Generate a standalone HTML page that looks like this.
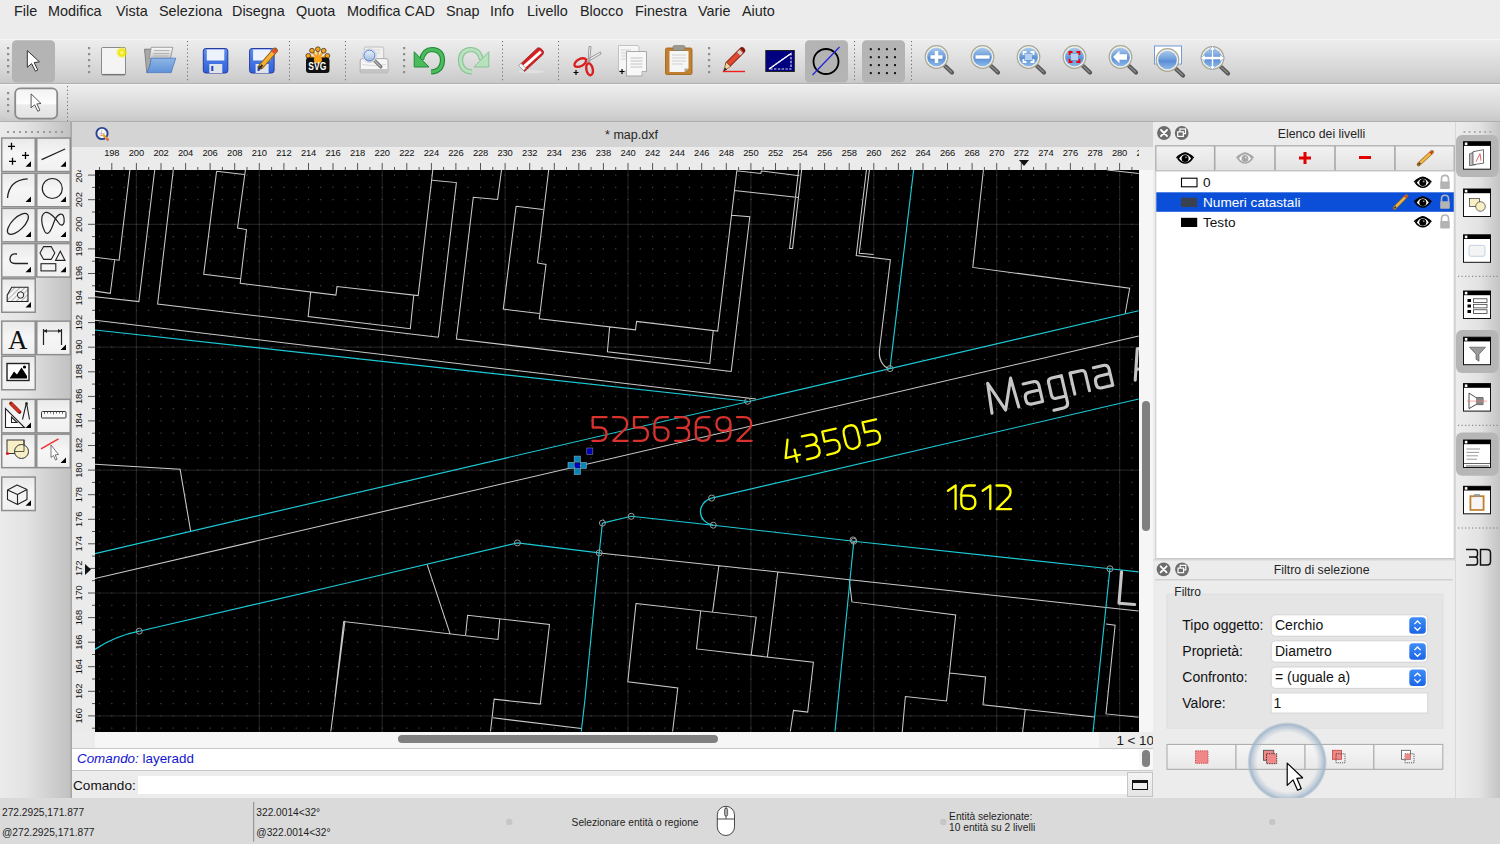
<!DOCTYPE html><html><head><meta charset="utf-8"><style>
*{margin:0;padding:0;box-sizing:border-box}
html,body{width:1500px;height:844px;overflow:hidden;background:#ececec;font-family:"Liberation Sans",sans-serif;color:#262626}
.a{position:absolute}
.menu span{position:absolute;top:3.3px;font-size:14.4px;color:#222;white-space:nowrap}
.tb{background:linear-gradient(#ededed,#e2e2e2 35%,#d2d2d2 80%,#c8c8c8)}
.sep{position:absolute;width:0;border-left:2px dotted #8a8a8a}
.tbtn{position:absolute;background:linear-gradient(#fbfbfb,#e9e9e9);border:1.5px solid #8c8c8c}
.tbtn svg{position:absolute;left:0;top:0}
.corner{position:absolute;right:3px;bottom:3px;width:0;height:0;border-left:8px solid transparent;border-bottom:8px solid #000}
.rl{position:absolute;font-size:11px;color:#1a1a1a;white-space:nowrap}
</style></head><body>
<div class="a menu" style="left:0;top:0;width:1500px;height:24px;background:#ececec">
<span style="left:14px">File</span>
<span style="left:48px">Modifica</span>
<span style="left:116px">Vista</span>
<span style="left:159px">Seleziona</span>
<span style="left:232px">Disegna</span>
<span style="left:296px">Quota</span>
<span style="left:347px">Modifica CAD</span>
<span style="left:446px">Snap</span>
<span style="left:490px">Info</span>
<span style="left:527px">Livello</span>
<span style="left:580px">Blocco</span>
<span style="left:635px">Finestra</span>
<span style="left:698px">Varie</span>
<span style="left:742px">Aiuto</span>
</div>
<div class="a tb" style="left:0;top:38.5px;width:1500px;height:45.5px;border-top:1.5px solid #f6f6f6;border-bottom:1.5px solid #b0b0b0"></div>
<div class="a tb" style="left:0;top:84px;width:1500px;height:38px;border-top:1.5px solid #f4f4f4;border-bottom:1.5px solid #b0b0b0"></div>
<svg class="a" style="left:0;top:39px" width="1500" height="45" viewBox="0 39 1500 45"><defs><linearGradient id="zg" x1="0" y1="0" x2="0" y2="1"><stop offset="0" stop-color="#a9c8ec"/><stop offset="0.45" stop-color="#6f9fdc"/><stop offset="0.55" stop-color="#5a8ed4"/><stop offset="1" stop-color="#8db8ea"/></linearGradient><linearGradient id="fl" x1="0" y1="0" x2="0" y2="1"><stop offset="0" stop-color="#5c8ff0"/><stop offset="1" stop-color="#2f5fd8"/></linearGradient><linearGradient id="pg" x1="0" y1="0" x2="0" y2="1"><stop offset="0" stop-color="#e4eefa"/><stop offset="0.5" stop-color="#c6d8ee"/><stop offset="1" stop-color="#9cb4d4"/></linearGradient><linearGradient id="fo" x1="0" y1="0" x2="0" y2="1"><stop offset="0" stop-color="#8fb6e6"/><stop offset="1" stop-color="#5f92d8"/></linearGradient><linearGradient id="pp" x1="0" y1="0" x2="0" y2="1"><stop offset="0" stop-color="#fafafa"/><stop offset="1" stop-color="#c4c4c4"/></linearGradient><radialGradient id="glow"><stop offset="0" stop-color="#fffbb0"/><stop offset="0.5" stop-color="#f2e600"/><stop offset="1" stop-color="#f2e600" stop-opacity="0"/></radialGradient></defs><rect x="7.0" y="47.0" width="2.2" height="2.2" fill="#8e8e8e"/><rect x="7.0" y="53.0" width="2.2" height="2.2" fill="#8e8e8e"/><rect x="7.0" y="59.0" width="2.2" height="2.2" fill="#8e8e8e"/><rect x="7.0" y="65.0" width="2.2" height="2.2" fill="#8e8e8e"/><rect x="7.0" y="71.0" width="2.2" height="2.2" fill="#8e8e8e"/><rect x="88.0" y="47.0" width="2.2" height="2.2" fill="#8e8e8e"/><rect x="88.0" y="53.0" width="2.2" height="2.2" fill="#8e8e8e"/><rect x="88.0" y="59.0" width="2.2" height="2.2" fill="#8e8e8e"/><rect x="88.0" y="65.0" width="2.2" height="2.2" fill="#8e8e8e"/><rect x="88.0" y="71.0" width="2.2" height="2.2" fill="#8e8e8e"/><rect x="403.0" y="47.0" width="2.2" height="2.2" fill="#8e8e8e"/><rect x="403.0" y="53.0" width="2.2" height="2.2" fill="#8e8e8e"/><rect x="403.0" y="59.0" width="2.2" height="2.2" fill="#8e8e8e"/><rect x="403.0" y="65.0" width="2.2" height="2.2" fill="#8e8e8e"/><rect x="403.0" y="71.0" width="2.2" height="2.2" fill="#8e8e8e"/><rect x="708.0" y="47.0" width="2.2" height="2.2" fill="#8e8e8e"/><rect x="708.0" y="53.0" width="2.2" height="2.2" fill="#8e8e8e"/><rect x="708.0" y="59.0" width="2.2" height="2.2" fill="#8e8e8e"/><rect x="708.0" y="65.0" width="2.2" height="2.2" fill="#8e8e8e"/><rect x="708.0" y="71.0" width="2.2" height="2.2" fill="#8e8e8e"/><path d="M187.5,41V82" stroke="#6e6e6e" stroke-width="1" stroke-dasharray="1.2,2.6"/><path d="M289.5,41V82" stroke="#6e6e6e" stroke-width="1" stroke-dasharray="1.2,2.6"/><path d="M345.5,41V82" stroke="#6e6e6e" stroke-width="1" stroke-dasharray="1.2,2.6"/><path d="M502.5,41V82" stroke="#6e6e6e" stroke-width="1" stroke-dasharray="1.2,2.6"/><path d="M558.5,41V82" stroke="#6e6e6e" stroke-width="1" stroke-dasharray="1.2,2.6"/><path d="M854.5,41V82" stroke="#6e6e6e" stroke-width="1" stroke-dasharray="1.2,2.6"/><path d="M911.5,41V82" stroke="#6e6e6e" stroke-width="1" stroke-dasharray="1.2,2.6"/><rect x="12" y="40.2" width="43" height="42.4" rx="4.5" fill="#b4b4b4"/><rect x="805" y="40.2" width="43" height="42.4" rx="4.5" fill="#b4b4b4"/><rect x="862" y="40.2" width="43" height="42.4" rx="4.5" fill="#b4b4b4"/><path d="M27.3,50.6 V67.3 L31.6,63.6 L35.4,71.2 L37.8,70 L34.2,62.6 L39.4,61.8 Z" fill="#fff" stroke="#333" stroke-width="1" stroke-linejoin="round"/><rect x="101.5" y="47.5" width="24" height="27.5" rx="1.2" fill="#f4f4f4" stroke="#8a8a8a" stroke-width="1"/><path d="M102,74.5 H125" stroke="#777" stroke-width="1.2"/><circle cx="121.8" cy="52.6" r="6" fill="url(#glow)"/><path d="M144.5,49.2 H152 V58 L147.5,72.6 H146.8 Z" fill="#a8a8a8" stroke="#707070" stroke-width="0.8"/><path d="M151.3,47.3 H172.8 L170.5,58.5 H149 Z" fill="url(#pp)" stroke="#8a8a8a" stroke-width="0.8"/><path d="M154,50.5 H169.5 M153.5,53.5 H169 M153,56 H168.5" stroke="#b4b4b4" stroke-width="1"/><path d="M151.3,58.2 H175.8 Q173,66 171.2,72.6 H147 Q150.5,66 151.3,58.2 Z" fill="url(#fo)" stroke="#4a76c0" stroke-width="0.8"/><rect x="203.3" y="48.5" width="24.5" height="24.5" rx="2.5" fill="url(#fl)" stroke="#2a3aa0" stroke-width="1"/><rect x="206.8" y="49.5" width="17.5" height="11" fill="#eef2fc"/><rect x="209.3" y="64" width="13" height="9" fill="#dfe3ea"/><rect x="211.3" y="66" width="2" height="5" fill="#1f3fc0"/><rect x="249.6" y="48.5" width="24.5" height="24.5" rx="2.5" fill="url(#fl)" stroke="#2a3aa0" stroke-width="1"/><rect x="253.1" y="49.5" width="17.5" height="11" fill="#eef2fc"/><rect x="255.6" y="64" width="13" height="9" fill="#dfe3ea"/><rect x="257.6" y="66" width="2" height="5" fill="#1f3fc0"/><path d="M261,66.5 L275,50.5" stroke="#8a5a10" stroke-width="5.6" stroke-linecap="round"/><path d="M261,66.5 L275,50.5" stroke="#f4b030" stroke-width="3.8"/><path d="M258.8,69 L262.5,65" stroke="#333" stroke-width="2.2"/><path d="M273,52.8 L276,49.5" stroke="#e25030" stroke-width="3.8"/><g stroke="#f7a21b" stroke-width="2.2"><path d="M317.9,59.5 L308.3,55.8"/><path d="M317.9,59.5 L312,50.7"/><path d="M317.9,59.5 L317.9,49.2"/><path d="M317.9,59.5 L323.7,50.7"/><path d="M317.9,59.5 L327.4,55.8"/></g><circle cx="308.3" cy="55.8" r="2.4" fill="#f7a21b" stroke="#111" stroke-width="0.6"/><circle cx="312" cy="50.7" r="2.4" fill="#f7a21b" stroke="#111" stroke-width="0.6"/><circle cx="317.9" cy="49.2" r="2.4" fill="#f7a21b" stroke="#111" stroke-width="0.6"/><circle cx="323.7" cy="50.7" r="2.4" fill="#f7a21b" stroke="#111" stroke-width="0.6"/><circle cx="327.4" cy="55.8" r="2.4" fill="#f7a21b" stroke="#111" stroke-width="0.6"/><rect x="306" y="57.5" width="23.5" height="15.5" rx="3" fill="#111"/><circle cx="317.9" cy="59.5" r="4" fill="#f7a21b"/><text x="308.3" y="70.3" font-size="11.5" font-weight="bold" font-family="Liberation Sans" fill="#fff" textLength="18" lengthAdjust="spacingAndGlyphs">SVG</text><rect x="364.3" y="47" width="19.4" height="13.5" rx="1" fill="#f0f0f0" stroke="#b4b4b4" stroke-width="0.8"/><path d="M367,50 h13 M367,53 h13" stroke="#d8d8d8" stroke-width="1"/><path d="M362,58.6 H386 Q388,58.6 388,61 V71 Q388,72.8 386,72.8 H362 Q360.2,72.8 360.2,71 V61 Q360.2,58.6 362,58.6 Z" fill="#f6f6f6" stroke="#a4a4a4" stroke-width="0.9"/><path d="M361,69 H387.5 V71 Q387.5,72.5 386,72.5 H362 Q360.8,72.5 360.8,71 Z" fill="#c4c4c4"/><path d="M362.5,64.5 Q374,67 386,64.5" stroke="#d0d0d0" stroke-width="0.8" fill="none"/><path d="M373.5,59.5 L380.8,66.8" stroke="#7a7a7a" stroke-width="3.4" stroke-linecap="round"/><path d="M374,60 L380.3,66.3" stroke="#b8b8b8" stroke-width="1.2" stroke-linecap="round"/><circle cx="369.4" cy="55.6" r="6.9" fill="#fafafa" stroke="#c8c8c8" stroke-width="0.8"/><circle cx="369.4" cy="55.6" r="5.5" fill="url(#pg)" stroke="#4a7cd0" stroke-width="1"/><path d="M421.5,59.5 Q424,49.5 432,49.5 Q442.5,50 442.5,60.5 Q442,71.5 431,72" stroke="#1e8a3a" stroke-width="5.2" fill="none" stroke-linecap="butt"/><path d="M421.5,59.5 Q424,49.5 432,49.5 Q442.5,50 442.5,60.5 Q442,71.5 431,72" stroke="#4cbb5c" stroke-width="3" fill="none"/><path d="M414.2,51.8 V67 H429 Z" fill="#4cbb5c" stroke="#1e8a3a" stroke-width="1" stroke-linejoin="round"/><path d="M481.5,59.5 Q479,49.5 471,49.5 Q460.5,50 460.5,60.5 Q461,71.5 472,72" stroke="#86c392" stroke-width="5.2" fill="none" stroke-linecap="butt"/><path d="M481.5,59.5 Q479,49.5 471,49.5 Q460.5,50 460.5,60.5 Q461,71.5 472,72" stroke="#b8e2be" stroke-width="3" fill="none"/><path d="M488.8,51.8 V67 H474 Z" fill="#b8e2be" stroke="#86c392" stroke-width="1" stroke-linejoin="round"/><ellipse cx="531" cy="71.5" rx="13" ry="1.8" fill="#e0e0e0"/><path d="M519.5,65 L537.5,48 Q540,47 542,49.5 L543.5,51.5 Q544,53 542.5,55 L524.5,71.5 Z" fill="#d42020" stroke="#902020" stroke-width="0.7"/><path d="M521.8,66.5 L540,50.5 L541.8,52.8 L523.5,69.3 Z" fill="#fff"/><path d="M518.5,65.5 L523.5,70.5 L526,68.3 L521,63.3 Z" fill="#f4f4f4" stroke="#888" stroke-width="0.7"/><path d="M588,63 L589,46.5 L591,46.5 L589.5,63 M586,60 L600.5,52 L601,54 L588,61.5" fill="#eee" stroke="#888" stroke-width="0.8"/><ellipse cx="580.3" cy="62.6" rx="6.4" ry="3.5" transform="rotate(-28 580.3 62.6)" fill="none" stroke="#d82020" stroke-width="2.4"/><ellipse cx="589.6" cy="69.3" rx="3.2" ry="6" transform="rotate(-12 589.6 69.3)" fill="none" stroke="#d82020" stroke-width="2.4"/><path d="M573.5,72.5 h5 M576,70 v5" stroke="#000" stroke-width="1.2"/><path d="M618.5,45.5 H638 L639,47 V71 H618.5 Z" fill="#f6f6f6" stroke="#b8b8b8" stroke-width="0.8"/><path d="M621,50 h10 M621,53 h10 M621,56 h10 M621,59 h10" stroke="#c8c8c8" stroke-width="0.8"/><path d="M626.5,51.5 H646.5 V71.5 L642,76 H626.5 Z" fill="#f8f8f8" stroke="#a0a0a0" stroke-width="0.9"/><path d="M630.5,58 h12 M630.5,61 h12 M630.5,64 h12 M630.5,67 h12" stroke="#bdbdbd" stroke-width="0.9"/><path d="M642,76 V71.5 H646.5" fill="#ddd" stroke="#a0a0a0" stroke-width="0.8"/><path d="M619.5,71.5 h5 M622,69 v5" stroke="#000" stroke-width="1.2"/><rect x="665.5" y="48" width="26.5" height="26.5" rx="1.5" fill="#c08030" stroke="#a06820" stroke-width="0.9"/><path d="M669.5,51 H688.5 V68.5 L684.5,72 H669.5 Z" fill="#f6f6f6"/><path d="M672,55 h14 M672,58 h14 M672,61 h14 M672,64 h11" stroke="#c8c8c8" stroke-width="0.8"/><path d="M684.5,72 V68.5 H688.5 Z" fill="#aaa"/><rect x="673" y="45.5" width="12" height="5" rx="1.5" fill="#9a9a90" stroke="#777" stroke-width="0.6"/><path d="M728.5,64 L742,50.5" stroke="#7a1a10" stroke-width="6.4" stroke-linecap="round"/><path d="M728.5,64 L742,50.5" stroke="#e04a30" stroke-width="4.6"/><path d="M738.6,53.9 L741.2,51.3" stroke="#d0d0d0" stroke-width="4.6"/><path d="M726.2,62 L730.6,66.4 L723.6,71.2 Z" fill="#f2d2a0" stroke="#6a3a10" stroke-width="0.6"/><path d="M723.4,71.4 L725,67.6 L727,69.6 Z" fill="#222"/><path d="M722.8,71.5 H745" stroke="#f02020" stroke-width="1.4"/><rect x="765.8" y="50.5" width="28.5" height="21" fill="#000080" stroke="#222" stroke-width="1"/><path d="M769,69 L791,53.5 V69 Z" fill="none" stroke="#d8d8f0" stroke-width="1.2" stroke-dasharray="2.4,1.4"/><path d="M769,69 L791,53.5" stroke="#fff" stroke-width="1.3"/><circle cx="826" cy="61.5" r="12.5" fill="none" stroke="#000" stroke-width="1.8"/><path d="M812.5,75 L839.5,47" stroke="#2020e0" stroke-width="1.2"/><rect x="869.8" y="48.2" width="2" height="2" fill="#111"/><rect x="869.8" y="56.2" width="2" height="2" fill="#111"/><rect x="869.8" y="64.1" width="2" height="2" fill="#111"/><rect x="869.8" y="72.1" width="2" height="2" fill="#111"/><rect x="877.9" y="48.2" width="2" height="2" fill="#111"/><rect x="877.9" y="56.2" width="2" height="2" fill="#111"/><rect x="877.9" y="64.1" width="2" height="2" fill="#111"/><rect x="877.9" y="72.1" width="2" height="2" fill="#111"/><rect x="885.9" y="48.2" width="2" height="2" fill="#111"/><rect x="885.9" y="56.2" width="2" height="2" fill="#111"/><rect x="885.9" y="64.1" width="2" height="2" fill="#111"/><rect x="885.9" y="72.1" width="2" height="2" fill="#111"/><rect x="894.0" y="48.2" width="2" height="2" fill="#111"/><rect x="894.0" y="56.2" width="2" height="2" fill="#111"/><rect x="894.0" y="64.1" width="2" height="2" fill="#111"/><rect x="894.0" y="72.1" width="2" height="2" fill="#111"/><g><path d="M944.5,65.5 L952.0,72.5" stroke="#555" stroke-width="4.2" stroke-linecap="round"/><path d="M945.5,66.5 L951.5,72" stroke="#8a8a8a" stroke-width="1.6" stroke-linecap="round"/><circle cx="936.5" cy="57" r="11.3" fill="#eeeee8" stroke="#a8a898" stroke-width="1.2"/><circle cx="936.5" cy="57" r="9.3" fill="url(#zg)"/><path d="M930.5,57 H942.5 M936.5,51 V63" stroke="#fff" stroke-width="3.4"/></g><g><path d="M990.5,65.5 L998.0,72.5" stroke="#555" stroke-width="4.2" stroke-linecap="round"/><path d="M991.5,66.5 L997.5,72" stroke="#8a8a8a" stroke-width="1.6" stroke-linecap="round"/><circle cx="982.5" cy="57" r="11.3" fill="#eeeee8" stroke="#a8a898" stroke-width="1.2"/><circle cx="982.5" cy="57" r="9.3" fill="url(#zg)"/><path d="M975.5,57 H989.5" stroke="#fff" stroke-width="3.4"/></g><g><path d="M1036.5,65.5 L1044.0,72.5" stroke="#555" stroke-width="4.2" stroke-linecap="round"/><path d="M1037.5,66.5 L1043.5,72" stroke="#8a8a8a" stroke-width="1.6" stroke-linecap="round"/><circle cx="1028.5" cy="57" r="11.3" fill="#eeeee8" stroke="#a8a898" stroke-width="1.2"/><circle cx="1028.5" cy="57" r="9.3" fill="url(#zg)"/><rect x="1025" y="54" width="7" height="6" fill="#b8d0f0"/><path d="M1023.5,55 V52 H1026.5 M1030.5,52 H1033.5 V55 M1033.5,59 V62 H1030.5 M1026.5,62 H1023.5 V59" stroke="#fff" stroke-width="1.8" fill="none"/></g><g><path d="M1082.5,65.5 L1090.0,72.5" stroke="#555" stroke-width="4.2" stroke-linecap="round"/><path d="M1083.5,66.5 L1089.5,72" stroke="#8a8a8a" stroke-width="1.6" stroke-linecap="round"/><circle cx="1074.5" cy="57" r="11.3" fill="#eeeee8" stroke="#a8a898" stroke-width="1.2"/><circle cx="1074.5" cy="57" r="9.3" fill="url(#zg)"/><rect x="1071" y="54" width="7" height="6" fill="#b8d0f0"/><path d="M1069.5,55 V52 H1072.5 M1076.5,52 H1079.5 V55 M1079.5,59 V62 H1076.5 M1072.5,62 H1069.5 V59" stroke="#f00000" stroke-width="1.8" fill="none"/></g><g><path d="M1128.5,65.5 L1136.0,72.5" stroke="#555" stroke-width="4.2" stroke-linecap="round"/><path d="M1129.5,66.5 L1135.5,72" stroke="#8a8a8a" stroke-width="1.6" stroke-linecap="round"/><circle cx="1120.5" cy="57" r="11.3" fill="#eeeee8" stroke="#a8a898" stroke-width="1.2"/><circle cx="1120.5" cy="57" r="9.3" fill="url(#zg)"/><path d="M1113,57 L1119.5,50.8 V54.3 H1127 V59.7 H1119.5 V63.2 Z" fill="#fff"/></g><rect x="1154.5" y="46" width="27" height="18" fill="#fff" stroke="#6e9ad8" stroke-width="1"/><g><path d="M1175.5,68.5 L1183.0,75.5" stroke="#555" stroke-width="4.2" stroke-linecap="round"/><path d="M1176.5,69.5 L1182.5,75" stroke="#8a8a8a" stroke-width="1.6" stroke-linecap="round"/><circle cx="1167.5" cy="60" r="11.3" fill="#eeeee8" stroke="#a8a898" stroke-width="1.2"/><circle cx="1167.5" cy="60" r="9.3" fill="url(#zg)"/></g><g><path d="M1220.5,66.5 L1228.0,73.5" stroke="#555" stroke-width="4.2" stroke-linecap="round"/><path d="M1221.5,67.5 L1227.5,73" stroke="#8a8a8a" stroke-width="1.6" stroke-linecap="round"/><circle cx="1212.5" cy="58" r="11.3" fill="#eeeee8" stroke="#a8a898" stroke-width="1.2"/><circle cx="1212.5" cy="58" r="9.3" fill="url(#zg)"/><path d="M1212.5,46 L1215.5,50 H1213.5 V56.5 H1220 V54.5 L1224.5,58 L1220,61.5 V59.5 H1213.5 V66 H1215.5 L1212.5,70 L1209.5,66 H1211.5 V59.5 H1205 V61.5 L1200.5,58 L1205,54.5 V56.5 H1211.5 V50 H1209.5 Z" fill="#fff" stroke="#6e9ad8" stroke-width="0.6"/></g></svg>
<svg class="a" style="left:0;top:84px" width="200" height="38" viewBox="0 84 200 38"><defs><linearGradient id="b2" x1="0" y1="0" x2="0" y2="1"><stop offset="0" stop-color="#f2f2f2"/><stop offset="0.5" stop-color="#fdfdfd"/><stop offset="0.55" stop-color="#ececec"/><stop offset="1" stop-color="#e2e2e2"/></linearGradient></defs><rect x="7.0" y="92.0" width="2.2" height="2.2" fill="#8e8e8e"/><rect x="7.0" y="98.0" width="2.2" height="2.2" fill="#8e8e8e"/><rect x="7.0" y="104.0" width="2.2" height="2.2" fill="#8e8e8e"/><rect x="7.0" y="110.0" width="2.2" height="2.2" fill="#8e8e8e"/><rect x="15.2" y="88.3" width="42" height="30.3" rx="5" fill="url(#b2)" stroke="#8a8a8a" stroke-width="1.8"/><path d="M31.1,93.9 V107.8 L34.6,104.8 L37.8,111.3 L39.9,110.2 L36.8,103.9 L41,103.5 Z" fill="#fff" stroke="#444" stroke-width="0.9" stroke-linejoin="round"/><path d="M67.5,86V121" stroke="#6e6e6e" stroke-width="1" stroke-dasharray="1.2,2.6"/></svg>
<svg class="a" style="left:0;top:122px" width="72" height="676" viewBox="0 122 72 676"><defs><linearGradient id="lp" x1="0" y1="0" x2="1" y2="0"><stop offset="0" stop-color="#ebebeb"/><stop offset="0.35" stop-color="#e3e3e3"/><stop offset="1" stop-color="#c0c0c0"/></linearGradient><linearGradient id="bt" x1="0" y1="0" x2="0" y2="1"><stop offset="0" stop-color="#e9e9e9"/><stop offset="0.5" stop-color="#f6f6f6"/><stop offset="1" stop-color="#f0f0f0"/></linearGradient><pattern id="hat" width="3.5" height="3.5" patternUnits="userSpaceOnUse" patternTransform="rotate(45)"><path d="M0,0V3.5" stroke="#555" stroke-width="0.8"/></pattern></defs><rect x="0" y="122" width="72" height="676" fill="url(#lp)"/><rect x="70.3" y="122" width="1.7" height="676" fill="#a8a8a8"/><rect x="7.0" y="131" width="2" height="2" fill="#9a9a9a"/><rect x="13.0" y="131" width="2" height="2" fill="#9a9a9a"/><rect x="19.0" y="131" width="2" height="2" fill="#9a9a9a"/><rect x="25.0" y="131" width="2" height="2" fill="#9a9a9a"/><rect x="31.0" y="131" width="2" height="2" fill="#9a9a9a"/><rect x="37.0" y="131" width="2" height="2" fill="#9a9a9a"/><rect x="43.0" y="131" width="2" height="2" fill="#9a9a9a"/><rect x="49.0" y="131" width="2" height="2" fill="#9a9a9a"/><rect x="55.0" y="131" width="2" height="2" fill="#9a9a9a"/><rect x="61.0" y="131" width="2" height="2" fill="#9a9a9a"/><rect x="1.75" y="138.05" width="33.5" height="33.5" fill="url(#bt)" stroke="#8e8e8e" stroke-width="1.5"/><path d="M31,166.8 h-5.5 l5.5,-5.5z" fill="#000"/><rect x="36.75" y="138.05" width="33.5" height="33.5" fill="url(#bt)" stroke="#8e8e8e" stroke-width="1.5"/><path d="M66,166.8 h-5.5 l5.5,-5.5z" fill="#000"/><rect x="1.75" y="173.25" width="33.5" height="33.5" fill="url(#bt)" stroke="#8e8e8e" stroke-width="1.5"/><path d="M31,202.0 h-5.5 l5.5,-5.5z" fill="#000"/><rect x="36.75" y="173.25" width="33.5" height="33.5" fill="url(#bt)" stroke="#8e8e8e" stroke-width="1.5"/><path d="M66,202.0 h-5.5 l5.5,-5.5z" fill="#000"/><rect x="1.75" y="208.35" width="33.5" height="33.5" fill="url(#bt)" stroke="#8e8e8e" stroke-width="1.5"/><path d="M31,237.1 h-5.5 l5.5,-5.5z" fill="#000"/><rect x="36.75" y="208.35" width="33.5" height="33.5" fill="url(#bt)" stroke="#8e8e8e" stroke-width="1.5"/><path d="M66,237.1 h-5.5 l5.5,-5.5z" fill="#000"/><rect x="1.75" y="243.55" width="33.5" height="33.5" fill="url(#bt)" stroke="#8e8e8e" stroke-width="1.5"/><path d="M31,272.3 h-5.5 l5.5,-5.5z" fill="#000"/><rect x="36.75" y="243.55" width="33.5" height="33.5" fill="url(#bt)" stroke="#8e8e8e" stroke-width="1.5"/><path d="M66,272.3 h-5.5 l5.5,-5.5z" fill="#000"/><rect x="1.75" y="278.75" width="33.5" height="33.5" fill="url(#bt)" stroke="#8e8e8e" stroke-width="1.5"/><path d="M31,307.5 h-5.5 l5.5,-5.5z" fill="#000"/><path d="M8,146.3 h7 M11.5,142.8 v7 M22,155.4 h7 M25.5,151.9 v7 M9,161.3 h7 M12.5,157.8 v7" stroke="#000" stroke-width="1.3"/><path d="M41.6,159.7 L65.1,149" stroke="#222" fill="none" stroke-width="1.3"/><path d="M7.5,198 Q9,180 27.7,178.9" stroke="#222" fill="none" stroke-width="1.3"/><circle cx="52.3" cy="188.5" r="10" stroke="#222" fill="none" stroke-width="1.2"/><ellipse cx="17.9" cy="223.9" rx="13.5" ry="6" transform="rotate(-45 17.9 223.9)" stroke="#222" fill="none" stroke-width="1.3"/><path d="M42,216.5 C45,207 54,216 58,222 C61,227 65,226 64,218 C63,211 57,214 54,222 C51,231 48,236 45,232 C43,228 41,222 42,216.5 Z" stroke="#222" fill="none" stroke-width="1.2"/><path d="M17,254 C12,253 10,256 10,259 C10,262 12,263.5 15,263.5 H28" stroke="#222" fill="none" stroke-width="1.3"/><path d="M40,253 L43.6,246.6 H51.2 L54.8,253 L51.2,259.4 H43.6 Z M55.5,260.4 L60.3,251.3 L65,260.4 Z" stroke="#222" fill="none" stroke-width="1.1"/><rect x="41" y="263.7" width="14.8" height="7.2" stroke="#222" fill="none" stroke-width="1.1"/><path d="M7.2,295 L11.7,287.2 H28 V301.5 H7.2 Z" fill="url(#hat)" stroke="#222" stroke-width="1.1"/><circle cx="20.6" cy="295" r="3.2" fill="#f2f2f2" stroke="#222" stroke-width="1"/><rect x="1.75" y="321.15" width="33.5" height="33.5" fill="url(#bt)" stroke="#8e8e8e" stroke-width="1.5"/><rect x="36.75" y="321.15" width="33.5" height="33.5" fill="url(#bt)" stroke="#8e8e8e" stroke-width="1.5"/><path d="M66,349.9 h-5.5 l5.5,-5.5z" fill="#000"/><rect x="1.75" y="356.25" width="33.5" height="33.5" fill="url(#bt)" stroke="#8e8e8e" stroke-width="1.5"/><text x="17.8" y="349" font-family="Liberation Serif" font-size="27" text-anchor="middle" fill="#111">A</text><path d="M43.5,345 V329 M61.5,345 V329 M43.5,331 H61.5" stroke="#222" stroke-width="1.2" fill="none"/><path d="M43.5,331 l3.5,-2 v4z M61.5,331 l-3.5,-2 v4z" fill="#222"/><rect x="7" y="363.5" width="22" height="17" fill="#fff" stroke="#222" stroke-width="1.4"/><path d="M9.5,378.5 L14,371.5 L17,374.5 L21.5,367.5 L27,376 V378.5 Z" fill="#000"/><circle cx="24.5" cy="367" r="1.6" fill="#000"/><rect x="1.75" y="399.35" width="33.5" height="33.5" fill="url(#bt)" stroke="#8e8e8e" stroke-width="1.5"/><path d="M31,428.1 h-5.5 l5.5,-5.5z" fill="#000"/><rect x="36.75" y="399.35" width="33.5" height="33.5" fill="url(#bt)" stroke="#8e8e8e" stroke-width="1.5"/><rect x="1.75" y="434.15" width="33.5" height="33.5" fill="url(#bt)" stroke="#8e8e8e" stroke-width="1.5"/><rect x="36.75" y="434.15" width="33.5" height="33.5" fill="url(#bt)" stroke="#8e8e8e" stroke-width="1.5"/><path d="M66,462.9 h-5.5 l5.5,-5.5z" fill="#000"/><rect x="1.75" y="477.05" width="33.5" height="33.5" fill="url(#bt)" stroke="#8e8e8e" stroke-width="1.5"/><path d="M31,505.8 h-5.5 l5.5,-5.5z" fill="#000"/><path d="M5.5,427.5 V408.5 L24.5,427.5 Z M11.5,422.5 V417 L17,422.5 Z" fill="#fff" stroke="#222" stroke-width="1.1"/><path d="M11,403.5 L19.5,412" stroke="#8a1a10" stroke-width="3.8" stroke-linecap="round"/><path d="M11,403.5 L19.5,412" stroke="#e03020" stroke-width="2.4"/><path d="M26.5,402.5 L22.5,419.5 M26.5,402.5 L29.5,419.5" stroke="#222" stroke-width="1.1" fill="none"/><circle cx="26.5" cy="403.5" r="1.3" fill="#222"/><rect x="41.5" y="411.5" width="24.5" height="6.5" rx="1" fill="#fafafa" stroke="#333" stroke-width="1"/><path d="M44.5,411.5v2.5 M47.5,411.5v2 M50.5,411.5v2 M53.5,411.5v3 M56.5,411.5v2 M59.5,411.5v2 M62.5,411.5v2.5" stroke="#333" stroke-width="0.7"/><rect x="7" y="440" width="17" height="13.5" fill="#f8efc4" stroke="#333" stroke-width="1"/><circle cx="21.5" cy="451.5" r="7" fill="#f8efc4" stroke="#333" stroke-width="1"/><path d="M14.5,451.5 H24 V440" stroke="#333" stroke-width="0.8" fill="none"/><circle cx="7.5" cy="453.5" r="1.6" fill="#e02020"/><path d="M41,448.8 L58.5,438.8" stroke="#f03030" stroke-width="1.4"/><path d="M51,445 V457.5 L53.5,455.5 L55.5,460 L57,459.3 L55.2,454.8 L58.5,454.5 Z" fill="#fff" stroke="#555" stroke-width="0.8"/><path d="M7.5,490 L17,485 L27,489.5 V499.5 L17.5,504.5 L7.5,499.5 Z M7.5,490 L17.5,494.5 L27,489.5 M17.5,494.5 V504.5" fill="none" stroke="#222" stroke-width="1.1" stroke-linejoin="round"/></svg>
<div class="a" style="left:72px;top:122px;width:1081px;height:25px;background:#d4d4d4"></div>
<svg class="a" style="left:92px;top:124px" width="20" height="20" viewBox="92 124 20 20"><circle cx="102" cy="133.5" r="5.6" fill="#f6f6f6" stroke="#2a4490" stroke-width="1.9"/><path d="M98.5,133.5 h6 M101.5,130 v6" stroke="#b8b8b8" stroke-width="0.7"/><path d="M99,136 l4,-1" stroke="#e08080" stroke-width="0.6"/><path d="M103,134.5 L107.5,139.5" stroke="#f0a020" stroke-width="2.2"/><circle cx="107.6" cy="139.6" r="1.3" fill="#e06060"/></svg>
<div class="a" style="left:72px;top:125px;width:1081px;height:20px;text-align:center;font-size:12.5px;line-height:20px;color:#262626;padding-left:38px">* map.dxf</div>
<div class="a" style="left:72px;top:147px;width:1081px;height:24px;background:#ebebeb"></div>
<div class="a" style="left:72px;top:147px;width:23px;height:585px;background:#ebebeb"></div>
<div class="a" style="left:1139px;top:170px;width:14px;height:562px;background:#f6f6f6"></div>
<div class="a" style="left:1142px;top:401px;width:8px;height:130px;background:#808080;border-radius:4px"></div>
<div class="a" style="left:95px;top:732px;width:1004px;height:16px;background:#f6f6f6"></div>
<div class="a" style="left:398px;top:735px;width:320px;height:8px;background:#808080;border-radius:4px"></div>
<div class="a" style="left:1099px;top:732px;width:54px;height:16px;background:#ececec"></div>
<div class="a" style="left:1099px;top:732px;width:55px;height:18px;font-size:13.4px;line-height:18px;text-align:right;color:#1a1a1a">1 &lt; 10</div>
<div class="a" style="left:72px;top:748px;width:1081px;height:23px;background:#fff;border-top:1px solid #c8c8c8;border-bottom:1px solid #c8c8c8"></div>
<div class="a" style="left:77px;top:749.5px;font-size:13.4px;line-height:18px;color:#1414d0;white-space:nowrap"><i>Comando:</i> layeradd</div>
<div class="a" style="left:1139px;top:749px;width:14px;height:21px;background:#f8f8f8"></div>
<div class="a" style="left:1142px;top:750px;width:8px;height:17px;background:#808080;border-radius:4px"></div>
<div class="a" style="left:72px;top:771px;width:1081px;height:27px;background:#ececec"></div>
<div class="a" style="left:73px;top:776.5px;font-size:13.6px;line-height:18px;color:#111">Comando:</div>
<div class="a" style="left:138px;top:776px;width:989px;height:18px;background:#fff"></div>
<div class="a" style="left:1127px;top:772px;width:26px;height:25px;background:linear-gradient(#f4f4f4,#e4e4e4);border:1px solid #c4c4c4"></div>
<div class="a" style="left:1132px;top:780px;width:16px;height:10px;border:1.2px solid #111;border-top:3px solid #111;background:#eee"></div>
<svg class="a" style="left:95px;top:147px" width="1044" height="23" viewBox="95 147 1044 23"><path d="M99.5,167V170M111.8,163V170M124.1,167V170M136.4,163V170M148.7,167V170M161.0,163V170M173.3,167V170M185.6,163V170M197.8,167V170M210.1,163V170M222.4,167V170M234.7,163V170M247.0,167V170M259.3,163V170M271.6,167V170M283.9,163V170M296.2,167V170M308.5,163V170M320.8,167V170M333.0,163V170M345.3,167V170M357.6,163V170M369.9,167V170M382.2,163V170M394.5,167V170M406.8,163V170M419.1,167V170M431.4,163V170M443.6,167V170M455.9,163V170M468.2,167V170M480.5,163V170M492.8,167V170M505.1,163V170M517.4,167V170M529.7,163V170M542.0,167V170M554.3,163V170M566.5,167V170M578.8,163V170M591.1,167V170M603.4,163V170M615.7,167V170M628.0,163V170M640.3,167V170M652.6,163V170M664.9,167V170M677.2,163V170M689.4,167V170M701.7,163V170M714.0,167V170M726.3,163V170M738.6,167V170M750.9,163V170M763.2,167V170M775.5,163V170M787.8,167V170M800.1,163V170M812.3,167V170M824.6,163V170M836.9,167V170M849.2,163V170M861.5,167V170M873.8,163V170M886.1,167V170M898.4,163V170M910.7,167V170M923.0,163V170M935.2,167V170M947.5,163V170M959.8,167V170M972.1,163V170M984.4,167V170M996.7,163V170M1009.0,167V170M1021.3,163V170M1033.6,167V170M1045.9,163V170M1058.1,167V170M1070.4,163V170M1082.7,167V170M1095.0,163V170M1107.3,167V170M1119.6,163V170M1131.9,167V170" stroke="#555" stroke-width="1"/><text x="111.8" y="156.1" font-size="9.4" text-anchor="middle" fill="#111" font-family="Liberation Sans" letter-spacing="-0.15">198</text><text x="136.4" y="156.1" font-size="9.4" text-anchor="middle" fill="#111" font-family="Liberation Sans" letter-spacing="-0.15">200</text><text x="161.0" y="156.1" font-size="9.4" text-anchor="middle" fill="#111" font-family="Liberation Sans" letter-spacing="-0.15">202</text><text x="185.6" y="156.1" font-size="9.4" text-anchor="middle" fill="#111" font-family="Liberation Sans" letter-spacing="-0.15">204</text><text x="210.1" y="156.1" font-size="9.4" text-anchor="middle" fill="#111" font-family="Liberation Sans" letter-spacing="-0.15">206</text><text x="234.7" y="156.1" font-size="9.4" text-anchor="middle" fill="#111" font-family="Liberation Sans" letter-spacing="-0.15">208</text><text x="259.3" y="156.1" font-size="9.4" text-anchor="middle" fill="#111" font-family="Liberation Sans" letter-spacing="-0.15">210</text><text x="283.9" y="156.1" font-size="9.4" text-anchor="middle" fill="#111" font-family="Liberation Sans" letter-spacing="-0.15">212</text><text x="308.5" y="156.1" font-size="9.4" text-anchor="middle" fill="#111" font-family="Liberation Sans" letter-spacing="-0.15">214</text><text x="333.0" y="156.1" font-size="9.4" text-anchor="middle" fill="#111" font-family="Liberation Sans" letter-spacing="-0.15">216</text><text x="357.6" y="156.1" font-size="9.4" text-anchor="middle" fill="#111" font-family="Liberation Sans" letter-spacing="-0.15">218</text><text x="382.2" y="156.1" font-size="9.4" text-anchor="middle" fill="#111" font-family="Liberation Sans" letter-spacing="-0.15">220</text><text x="406.8" y="156.1" font-size="9.4" text-anchor="middle" fill="#111" font-family="Liberation Sans" letter-spacing="-0.15">222</text><text x="431.4" y="156.1" font-size="9.4" text-anchor="middle" fill="#111" font-family="Liberation Sans" letter-spacing="-0.15">224</text><text x="455.9" y="156.1" font-size="9.4" text-anchor="middle" fill="#111" font-family="Liberation Sans" letter-spacing="-0.15">226</text><text x="480.5" y="156.1" font-size="9.4" text-anchor="middle" fill="#111" font-family="Liberation Sans" letter-spacing="-0.15">228</text><text x="505.1" y="156.1" font-size="9.4" text-anchor="middle" fill="#111" font-family="Liberation Sans" letter-spacing="-0.15">230</text><text x="529.7" y="156.1" font-size="9.4" text-anchor="middle" fill="#111" font-family="Liberation Sans" letter-spacing="-0.15">232</text><text x="554.3" y="156.1" font-size="9.4" text-anchor="middle" fill="#111" font-family="Liberation Sans" letter-spacing="-0.15">234</text><text x="578.8" y="156.1" font-size="9.4" text-anchor="middle" fill="#111" font-family="Liberation Sans" letter-spacing="-0.15">236</text><text x="603.4" y="156.1" font-size="9.4" text-anchor="middle" fill="#111" font-family="Liberation Sans" letter-spacing="-0.15">238</text><text x="628.0" y="156.1" font-size="9.4" text-anchor="middle" fill="#111" font-family="Liberation Sans" letter-spacing="-0.15">240</text><text x="652.6" y="156.1" font-size="9.4" text-anchor="middle" fill="#111" font-family="Liberation Sans" letter-spacing="-0.15">242</text><text x="677.2" y="156.1" font-size="9.4" text-anchor="middle" fill="#111" font-family="Liberation Sans" letter-spacing="-0.15">244</text><text x="701.7" y="156.1" font-size="9.4" text-anchor="middle" fill="#111" font-family="Liberation Sans" letter-spacing="-0.15">246</text><text x="726.3" y="156.1" font-size="9.4" text-anchor="middle" fill="#111" font-family="Liberation Sans" letter-spacing="-0.15">248</text><text x="750.9" y="156.1" font-size="9.4" text-anchor="middle" fill="#111" font-family="Liberation Sans" letter-spacing="-0.15">250</text><text x="775.5" y="156.1" font-size="9.4" text-anchor="middle" fill="#111" font-family="Liberation Sans" letter-spacing="-0.15">252</text><text x="800.1" y="156.1" font-size="9.4" text-anchor="middle" fill="#111" font-family="Liberation Sans" letter-spacing="-0.15">254</text><text x="824.6" y="156.1" font-size="9.4" text-anchor="middle" fill="#111" font-family="Liberation Sans" letter-spacing="-0.15">256</text><text x="849.2" y="156.1" font-size="9.4" text-anchor="middle" fill="#111" font-family="Liberation Sans" letter-spacing="-0.15">258</text><text x="873.8" y="156.1" font-size="9.4" text-anchor="middle" fill="#111" font-family="Liberation Sans" letter-spacing="-0.15">260</text><text x="898.4" y="156.1" font-size="9.4" text-anchor="middle" fill="#111" font-family="Liberation Sans" letter-spacing="-0.15">262</text><text x="923.0" y="156.1" font-size="9.4" text-anchor="middle" fill="#111" font-family="Liberation Sans" letter-spacing="-0.15">264</text><text x="947.5" y="156.1" font-size="9.4" text-anchor="middle" fill="#111" font-family="Liberation Sans" letter-spacing="-0.15">266</text><text x="972.1" y="156.1" font-size="9.4" text-anchor="middle" fill="#111" font-family="Liberation Sans" letter-spacing="-0.15">268</text><text x="996.7" y="156.1" font-size="9.4" text-anchor="middle" fill="#111" font-family="Liberation Sans" letter-spacing="-0.15">270</text><text x="1021.3" y="156.1" font-size="9.4" text-anchor="middle" fill="#111" font-family="Liberation Sans" letter-spacing="-0.15">272</text><text x="1045.9" y="156.1" font-size="9.4" text-anchor="middle" fill="#111" font-family="Liberation Sans" letter-spacing="-0.15">274</text><text x="1070.4" y="156.1" font-size="9.4" text-anchor="middle" fill="#111" font-family="Liberation Sans" letter-spacing="-0.15">276</text><text x="1095.0" y="156.1" font-size="9.4" text-anchor="middle" fill="#111" font-family="Liberation Sans" letter-spacing="-0.15">278</text><text x="1119.6" y="156.1" font-size="9.4" text-anchor="middle" fill="#111" font-family="Liberation Sans" letter-spacing="-0.15">280</text><text x="1144.2" y="156.1" font-size="9.4" text-anchor="middle" fill="#111" font-family="Liberation Sans" letter-spacing="-0.15">282</text><path d="M1019,160 h10 l-5,6z" fill="#111"/></svg><svg class="a" style="left:72px;top:170px" width="23" height="562" viewBox="72 170 23 562"><path d="M92,728.2H95M88,715.9H95M92,703.6H95M88,691.3H95M92,679.0H95M88,666.7H95M92,654.5H95M88,642.2H95M92,629.9H95M88,617.6H95M92,605.3H95M88,593.0H95M92,580.7H95M88,568.4H95M92,556.1H95M88,543.8H95M92,531.5H95M88,519.3H95M92,507.0H95M88,494.7H95M92,482.4H95M88,470.1H95M92,457.8H95M88,445.5H95M92,433.2H95M88,420.9H95M92,408.6H95M88,396.4H95M92,384.1H95M88,371.8H95M92,359.5H95M88,347.2H95M92,334.9H95M88,322.6H95M92,310.3H95M88,298.0H95M92,285.8H95M88,273.5H95M92,261.2H95M88,248.9H95M92,236.6H95M88,224.3H95M92,212.0H95M88,199.7H95M92,187.4H95M88,175.1H95" stroke="#555" stroke-width="1"/><text transform="translate(82.2,765.1) rotate(-90)" x="0" y="0" font-size="9.4" text-anchor="middle" fill="#111" font-family="Liberation Sans" letter-spacing="-0.15">156</text><text transform="translate(82.2,740.5) rotate(-90)" x="0" y="0" font-size="9.4" text-anchor="middle" fill="#111" font-family="Liberation Sans" letter-spacing="-0.15">158</text><text transform="translate(82.2,715.9) rotate(-90)" x="0" y="0" font-size="9.4" text-anchor="middle" fill="#111" font-family="Liberation Sans" letter-spacing="-0.15">160</text><text transform="translate(82.2,691.3) rotate(-90)" x="0" y="0" font-size="9.4" text-anchor="middle" fill="#111" font-family="Liberation Sans" letter-spacing="-0.15">162</text><text transform="translate(82.2,666.7) rotate(-90)" x="0" y="0" font-size="9.4" text-anchor="middle" fill="#111" font-family="Liberation Sans" letter-spacing="-0.15">164</text><text transform="translate(82.2,642.2) rotate(-90)" x="0" y="0" font-size="9.4" text-anchor="middle" fill="#111" font-family="Liberation Sans" letter-spacing="-0.15">166</text><text transform="translate(82.2,617.6) rotate(-90)" x="0" y="0" font-size="9.4" text-anchor="middle" fill="#111" font-family="Liberation Sans" letter-spacing="-0.15">168</text><text transform="translate(82.2,593.0) rotate(-90)" x="0" y="0" font-size="9.4" text-anchor="middle" fill="#111" font-family="Liberation Sans" letter-spacing="-0.15">170</text><text transform="translate(82.2,568.4) rotate(-90)" x="0" y="0" font-size="9.4" text-anchor="middle" fill="#111" font-family="Liberation Sans" letter-spacing="-0.15">172</text><text transform="translate(82.2,543.8) rotate(-90)" x="0" y="0" font-size="9.4" text-anchor="middle" fill="#111" font-family="Liberation Sans" letter-spacing="-0.15">174</text><text transform="translate(82.2,519.3) rotate(-90)" x="0" y="0" font-size="9.4" text-anchor="middle" fill="#111" font-family="Liberation Sans" letter-spacing="-0.15">176</text><text transform="translate(82.2,494.7) rotate(-90)" x="0" y="0" font-size="9.4" text-anchor="middle" fill="#111" font-family="Liberation Sans" letter-spacing="-0.15">178</text><text transform="translate(82.2,470.1) rotate(-90)" x="0" y="0" font-size="9.4" text-anchor="middle" fill="#111" font-family="Liberation Sans" letter-spacing="-0.15">180</text><text transform="translate(82.2,445.5) rotate(-90)" x="0" y="0" font-size="9.4" text-anchor="middle" fill="#111" font-family="Liberation Sans" letter-spacing="-0.15">182</text><text transform="translate(82.2,420.9) rotate(-90)" x="0" y="0" font-size="9.4" text-anchor="middle" fill="#111" font-family="Liberation Sans" letter-spacing="-0.15">184</text><text transform="translate(82.2,396.4) rotate(-90)" x="0" y="0" font-size="9.4" text-anchor="middle" fill="#111" font-family="Liberation Sans" letter-spacing="-0.15">186</text><text transform="translate(82.2,371.8) rotate(-90)" x="0" y="0" font-size="9.4" text-anchor="middle" fill="#111" font-family="Liberation Sans" letter-spacing="-0.15">188</text><text transform="translate(82.2,347.2) rotate(-90)" x="0" y="0" font-size="9.4" text-anchor="middle" fill="#111" font-family="Liberation Sans" letter-spacing="-0.15">190</text><text transform="translate(82.2,322.6) rotate(-90)" x="0" y="0" font-size="9.4" text-anchor="middle" fill="#111" font-family="Liberation Sans" letter-spacing="-0.15">192</text><text transform="translate(82.2,298.0) rotate(-90)" x="0" y="0" font-size="9.4" text-anchor="middle" fill="#111" font-family="Liberation Sans" letter-spacing="-0.15">194</text><text transform="translate(82.2,273.5) rotate(-90)" x="0" y="0" font-size="9.4" text-anchor="middle" fill="#111" font-family="Liberation Sans" letter-spacing="-0.15">196</text><text transform="translate(82.2,248.9) rotate(-90)" x="0" y="0" font-size="9.4" text-anchor="middle" fill="#111" font-family="Liberation Sans" letter-spacing="-0.15">198</text><text transform="translate(82.2,224.3) rotate(-90)" x="0" y="0" font-size="9.4" text-anchor="middle" fill="#111" font-family="Liberation Sans" letter-spacing="-0.15">200</text><text transform="translate(82.2,199.7) rotate(-90)" x="0" y="0" font-size="9.4" text-anchor="middle" fill="#111" font-family="Liberation Sans" letter-spacing="-0.15">202</text><text transform="translate(82.2,175.1) rotate(-90)" x="0" y="0" font-size="9.4" text-anchor="middle" fill="#111" font-family="Liberation Sans" letter-spacing="-0.15">204</text><text transform="translate(82.2,150.6) rotate(-90)" x="0" y="0" font-size="9.4" text-anchor="middle" fill="#111" font-family="Liberation Sans" letter-spacing="-0.15">206</text><path d="M85,564 v11 l6,-5.5z" fill="#111"/></svg>
<svg class="a" style="left:95px;top:170px" width="1044" height="562" viewBox="95 170 1044 562"><rect x="95" y="170" width="1044" height="562" fill="#000"/><path d="M136.4,170V732M259.3,170V732M382.2,170V732M505.1,170V732M628.0,170V732M750.9,170V732M873.8,170V732M996.7,170V732M1119.6,170V732M95,715.9H1139M95,593.0H1139M95,470.1H1139M95,347.2H1139M95,224.3H1139" stroke="#1f1f1f" stroke-width="1.2" fill="none"/><path d="M98.9,727.6h1.2v1.2h-1.2zM98.9,715.3h1.2v1.2h-1.2zM98.9,703.0h1.2v1.2h-1.2zM98.9,690.7h1.2v1.2h-1.2zM98.9,678.4h1.2v1.2h-1.2zM98.9,666.1h1.2v1.2h-1.2zM98.9,653.9h1.2v1.2h-1.2zM98.9,641.6h1.2v1.2h-1.2zM98.9,629.3h1.2v1.2h-1.2zM98.9,617.0h1.2v1.2h-1.2zM98.9,604.7h1.2v1.2h-1.2zM98.9,592.4h1.2v1.2h-1.2zM98.9,580.1h1.2v1.2h-1.2zM98.9,567.8h1.2v1.2h-1.2zM98.9,555.5h1.2v1.2h-1.2zM98.9,543.2h1.2v1.2h-1.2zM98.9,530.9h1.2v1.2h-1.2zM98.9,518.7h1.2v1.2h-1.2zM98.9,506.4h1.2v1.2h-1.2zM98.9,494.1h1.2v1.2h-1.2zM98.9,481.8h1.2v1.2h-1.2zM98.9,469.5h1.2v1.2h-1.2zM98.9,457.2h1.2v1.2h-1.2zM98.9,444.9h1.2v1.2h-1.2zM98.9,432.6h1.2v1.2h-1.2zM98.9,420.3h1.2v1.2h-1.2zM98.9,408.0h1.2v1.2h-1.2zM98.9,395.8h1.2v1.2h-1.2zM98.9,383.5h1.2v1.2h-1.2zM98.9,371.2h1.2v1.2h-1.2zM98.9,358.9h1.2v1.2h-1.2zM98.9,346.6h1.2v1.2h-1.2zM98.9,334.3h1.2v1.2h-1.2zM98.9,322.0h1.2v1.2h-1.2zM98.9,309.7h1.2v1.2h-1.2zM98.9,297.4h1.2v1.2h-1.2zM98.9,285.1h1.2v1.2h-1.2zM98.9,272.9h1.2v1.2h-1.2zM98.9,260.6h1.2v1.2h-1.2zM98.9,248.3h1.2v1.2h-1.2zM98.9,236.0h1.2v1.2h-1.2zM98.9,223.7h1.2v1.2h-1.2zM98.9,211.4h1.2v1.2h-1.2zM98.9,199.1h1.2v1.2h-1.2zM98.9,186.8h1.2v1.2h-1.2zM98.9,174.5h1.2v1.2h-1.2zM111.2,727.6h1.2v1.2h-1.2zM111.2,715.3h1.2v1.2h-1.2zM111.2,703.0h1.2v1.2h-1.2zM111.2,690.7h1.2v1.2h-1.2zM111.2,678.4h1.2v1.2h-1.2zM111.2,666.1h1.2v1.2h-1.2zM111.2,653.9h1.2v1.2h-1.2zM111.2,641.6h1.2v1.2h-1.2zM111.2,629.3h1.2v1.2h-1.2zM111.2,617.0h1.2v1.2h-1.2zM111.2,604.7h1.2v1.2h-1.2zM111.2,592.4h1.2v1.2h-1.2zM111.2,580.1h1.2v1.2h-1.2zM111.2,567.8h1.2v1.2h-1.2zM111.2,555.5h1.2v1.2h-1.2zM111.2,543.2h1.2v1.2h-1.2zM111.2,530.9h1.2v1.2h-1.2zM111.2,518.7h1.2v1.2h-1.2zM111.2,506.4h1.2v1.2h-1.2zM111.2,494.1h1.2v1.2h-1.2zM111.2,481.8h1.2v1.2h-1.2zM111.2,469.5h1.2v1.2h-1.2zM111.2,457.2h1.2v1.2h-1.2zM111.2,444.9h1.2v1.2h-1.2zM111.2,432.6h1.2v1.2h-1.2zM111.2,420.3h1.2v1.2h-1.2zM111.2,408.0h1.2v1.2h-1.2zM111.2,395.8h1.2v1.2h-1.2zM111.2,383.5h1.2v1.2h-1.2zM111.2,371.2h1.2v1.2h-1.2zM111.2,358.9h1.2v1.2h-1.2zM111.2,346.6h1.2v1.2h-1.2zM111.2,334.3h1.2v1.2h-1.2zM111.2,322.0h1.2v1.2h-1.2zM111.2,309.7h1.2v1.2h-1.2zM111.2,297.4h1.2v1.2h-1.2zM111.2,285.1h1.2v1.2h-1.2zM111.2,272.9h1.2v1.2h-1.2zM111.2,260.6h1.2v1.2h-1.2zM111.2,248.3h1.2v1.2h-1.2zM111.2,236.0h1.2v1.2h-1.2zM111.2,223.7h1.2v1.2h-1.2zM111.2,211.4h1.2v1.2h-1.2zM111.2,199.1h1.2v1.2h-1.2zM111.2,186.8h1.2v1.2h-1.2zM111.2,174.5h1.2v1.2h-1.2zM123.5,727.6h1.2v1.2h-1.2zM123.5,715.3h1.2v1.2h-1.2zM123.5,703.0h1.2v1.2h-1.2zM123.5,690.7h1.2v1.2h-1.2zM123.5,678.4h1.2v1.2h-1.2zM123.5,666.1h1.2v1.2h-1.2zM123.5,653.9h1.2v1.2h-1.2zM123.5,641.6h1.2v1.2h-1.2zM123.5,629.3h1.2v1.2h-1.2zM123.5,617.0h1.2v1.2h-1.2zM123.5,604.7h1.2v1.2h-1.2zM123.5,592.4h1.2v1.2h-1.2zM123.5,580.1h1.2v1.2h-1.2zM123.5,567.8h1.2v1.2h-1.2zM123.5,555.5h1.2v1.2h-1.2zM123.5,543.2h1.2v1.2h-1.2zM123.5,530.9h1.2v1.2h-1.2zM123.5,518.7h1.2v1.2h-1.2zM123.5,506.4h1.2v1.2h-1.2zM123.5,494.1h1.2v1.2h-1.2zM123.5,481.8h1.2v1.2h-1.2zM123.5,469.5h1.2v1.2h-1.2zM123.5,457.2h1.2v1.2h-1.2zM123.5,444.9h1.2v1.2h-1.2zM123.5,432.6h1.2v1.2h-1.2zM123.5,420.3h1.2v1.2h-1.2zM123.5,408.0h1.2v1.2h-1.2zM123.5,395.8h1.2v1.2h-1.2zM123.5,383.5h1.2v1.2h-1.2zM123.5,371.2h1.2v1.2h-1.2zM123.5,358.9h1.2v1.2h-1.2zM123.5,346.6h1.2v1.2h-1.2zM123.5,334.3h1.2v1.2h-1.2zM123.5,322.0h1.2v1.2h-1.2zM123.5,309.7h1.2v1.2h-1.2zM123.5,297.4h1.2v1.2h-1.2zM123.5,285.1h1.2v1.2h-1.2zM123.5,272.9h1.2v1.2h-1.2zM123.5,260.6h1.2v1.2h-1.2zM123.5,248.3h1.2v1.2h-1.2zM123.5,236.0h1.2v1.2h-1.2zM123.5,223.7h1.2v1.2h-1.2zM123.5,211.4h1.2v1.2h-1.2zM123.5,199.1h1.2v1.2h-1.2zM123.5,186.8h1.2v1.2h-1.2zM123.5,174.5h1.2v1.2h-1.2zM135.8,727.6h1.2v1.2h-1.2zM135.8,715.3h1.2v1.2h-1.2zM135.8,703.0h1.2v1.2h-1.2zM135.8,690.7h1.2v1.2h-1.2zM135.8,678.4h1.2v1.2h-1.2zM135.8,666.1h1.2v1.2h-1.2zM135.8,653.9h1.2v1.2h-1.2zM135.8,641.6h1.2v1.2h-1.2zM135.8,629.3h1.2v1.2h-1.2zM135.8,617.0h1.2v1.2h-1.2zM135.8,604.7h1.2v1.2h-1.2zM135.8,592.4h1.2v1.2h-1.2zM135.8,580.1h1.2v1.2h-1.2zM135.8,567.8h1.2v1.2h-1.2zM135.8,555.5h1.2v1.2h-1.2zM135.8,543.2h1.2v1.2h-1.2zM135.8,530.9h1.2v1.2h-1.2zM135.8,518.7h1.2v1.2h-1.2zM135.8,506.4h1.2v1.2h-1.2zM135.8,494.1h1.2v1.2h-1.2zM135.8,481.8h1.2v1.2h-1.2zM135.8,469.5h1.2v1.2h-1.2zM135.8,457.2h1.2v1.2h-1.2zM135.8,444.9h1.2v1.2h-1.2zM135.8,432.6h1.2v1.2h-1.2zM135.8,420.3h1.2v1.2h-1.2zM135.8,408.0h1.2v1.2h-1.2zM135.8,395.8h1.2v1.2h-1.2zM135.8,383.5h1.2v1.2h-1.2zM135.8,371.2h1.2v1.2h-1.2zM135.8,358.9h1.2v1.2h-1.2zM135.8,346.6h1.2v1.2h-1.2zM135.8,334.3h1.2v1.2h-1.2zM135.8,322.0h1.2v1.2h-1.2zM135.8,309.7h1.2v1.2h-1.2zM135.8,297.4h1.2v1.2h-1.2zM135.8,285.1h1.2v1.2h-1.2zM135.8,272.9h1.2v1.2h-1.2zM135.8,260.6h1.2v1.2h-1.2zM135.8,248.3h1.2v1.2h-1.2zM135.8,236.0h1.2v1.2h-1.2zM135.8,223.7h1.2v1.2h-1.2zM135.8,211.4h1.2v1.2h-1.2zM135.8,199.1h1.2v1.2h-1.2zM135.8,186.8h1.2v1.2h-1.2zM135.8,174.5h1.2v1.2h-1.2zM148.1,727.6h1.2v1.2h-1.2zM148.1,715.3h1.2v1.2h-1.2zM148.1,703.0h1.2v1.2h-1.2zM148.1,690.7h1.2v1.2h-1.2zM148.1,678.4h1.2v1.2h-1.2zM148.1,666.1h1.2v1.2h-1.2zM148.1,653.9h1.2v1.2h-1.2zM148.1,641.6h1.2v1.2h-1.2zM148.1,629.3h1.2v1.2h-1.2zM148.1,617.0h1.2v1.2h-1.2zM148.1,604.7h1.2v1.2h-1.2zM148.1,592.4h1.2v1.2h-1.2zM148.1,580.1h1.2v1.2h-1.2zM148.1,567.8h1.2v1.2h-1.2zM148.1,555.5h1.2v1.2h-1.2zM148.1,543.2h1.2v1.2h-1.2zM148.1,530.9h1.2v1.2h-1.2zM148.1,518.7h1.2v1.2h-1.2zM148.1,506.4h1.2v1.2h-1.2zM148.1,494.1h1.2v1.2h-1.2zM148.1,481.8h1.2v1.2h-1.2zM148.1,469.5h1.2v1.2h-1.2zM148.1,457.2h1.2v1.2h-1.2zM148.1,444.9h1.2v1.2h-1.2zM148.1,432.6h1.2v1.2h-1.2zM148.1,420.3h1.2v1.2h-1.2zM148.1,408.0h1.2v1.2h-1.2zM148.1,395.8h1.2v1.2h-1.2zM148.1,383.5h1.2v1.2h-1.2zM148.1,371.2h1.2v1.2h-1.2zM148.1,358.9h1.2v1.2h-1.2zM148.1,346.6h1.2v1.2h-1.2zM148.1,334.3h1.2v1.2h-1.2zM148.1,322.0h1.2v1.2h-1.2zM148.1,309.7h1.2v1.2h-1.2zM148.1,297.4h1.2v1.2h-1.2zM148.1,285.1h1.2v1.2h-1.2zM148.1,272.9h1.2v1.2h-1.2zM148.1,260.6h1.2v1.2h-1.2zM148.1,248.3h1.2v1.2h-1.2zM148.1,236.0h1.2v1.2h-1.2zM148.1,223.7h1.2v1.2h-1.2zM148.1,211.4h1.2v1.2h-1.2zM148.1,199.1h1.2v1.2h-1.2zM148.1,186.8h1.2v1.2h-1.2zM148.1,174.5h1.2v1.2h-1.2zM160.4,727.6h1.2v1.2h-1.2zM160.4,715.3h1.2v1.2h-1.2zM160.4,703.0h1.2v1.2h-1.2zM160.4,690.7h1.2v1.2h-1.2zM160.4,678.4h1.2v1.2h-1.2zM160.4,666.1h1.2v1.2h-1.2zM160.4,653.9h1.2v1.2h-1.2zM160.4,641.6h1.2v1.2h-1.2zM160.4,629.3h1.2v1.2h-1.2zM160.4,617.0h1.2v1.2h-1.2zM160.4,604.7h1.2v1.2h-1.2zM160.4,592.4h1.2v1.2h-1.2zM160.4,580.1h1.2v1.2h-1.2zM160.4,567.8h1.2v1.2h-1.2zM160.4,555.5h1.2v1.2h-1.2zM160.4,543.2h1.2v1.2h-1.2zM160.4,530.9h1.2v1.2h-1.2zM160.4,518.7h1.2v1.2h-1.2zM160.4,506.4h1.2v1.2h-1.2zM160.4,494.1h1.2v1.2h-1.2zM160.4,481.8h1.2v1.2h-1.2zM160.4,469.5h1.2v1.2h-1.2zM160.4,457.2h1.2v1.2h-1.2zM160.4,444.9h1.2v1.2h-1.2zM160.4,432.6h1.2v1.2h-1.2zM160.4,420.3h1.2v1.2h-1.2zM160.4,408.0h1.2v1.2h-1.2zM160.4,395.8h1.2v1.2h-1.2zM160.4,383.5h1.2v1.2h-1.2zM160.4,371.2h1.2v1.2h-1.2zM160.4,358.9h1.2v1.2h-1.2zM160.4,346.6h1.2v1.2h-1.2zM160.4,334.3h1.2v1.2h-1.2zM160.4,322.0h1.2v1.2h-1.2zM160.4,309.7h1.2v1.2h-1.2zM160.4,297.4h1.2v1.2h-1.2zM160.4,285.1h1.2v1.2h-1.2zM160.4,272.9h1.2v1.2h-1.2zM160.4,260.6h1.2v1.2h-1.2zM160.4,248.3h1.2v1.2h-1.2zM160.4,236.0h1.2v1.2h-1.2zM160.4,223.7h1.2v1.2h-1.2zM160.4,211.4h1.2v1.2h-1.2zM160.4,199.1h1.2v1.2h-1.2zM160.4,186.8h1.2v1.2h-1.2zM160.4,174.5h1.2v1.2h-1.2zM172.7,727.6h1.2v1.2h-1.2zM172.7,715.3h1.2v1.2h-1.2zM172.7,703.0h1.2v1.2h-1.2zM172.7,690.7h1.2v1.2h-1.2zM172.7,678.4h1.2v1.2h-1.2zM172.7,666.1h1.2v1.2h-1.2zM172.7,653.9h1.2v1.2h-1.2zM172.7,641.6h1.2v1.2h-1.2zM172.7,629.3h1.2v1.2h-1.2zM172.7,617.0h1.2v1.2h-1.2zM172.7,604.7h1.2v1.2h-1.2zM172.7,592.4h1.2v1.2h-1.2zM172.7,580.1h1.2v1.2h-1.2zM172.7,567.8h1.2v1.2h-1.2zM172.7,555.5h1.2v1.2h-1.2zM172.7,543.2h1.2v1.2h-1.2zM172.7,530.9h1.2v1.2h-1.2zM172.7,518.7h1.2v1.2h-1.2zM172.7,506.4h1.2v1.2h-1.2zM172.7,494.1h1.2v1.2h-1.2zM172.7,481.8h1.2v1.2h-1.2zM172.7,469.5h1.2v1.2h-1.2zM172.7,457.2h1.2v1.2h-1.2zM172.7,444.9h1.2v1.2h-1.2zM172.7,432.6h1.2v1.2h-1.2zM172.7,420.3h1.2v1.2h-1.2zM172.7,408.0h1.2v1.2h-1.2zM172.7,395.8h1.2v1.2h-1.2zM172.7,383.5h1.2v1.2h-1.2zM172.7,371.2h1.2v1.2h-1.2zM172.7,358.9h1.2v1.2h-1.2zM172.7,346.6h1.2v1.2h-1.2zM172.7,334.3h1.2v1.2h-1.2zM172.7,322.0h1.2v1.2h-1.2zM172.7,309.7h1.2v1.2h-1.2zM172.7,297.4h1.2v1.2h-1.2zM172.7,285.1h1.2v1.2h-1.2zM172.7,272.9h1.2v1.2h-1.2zM172.7,260.6h1.2v1.2h-1.2zM172.7,248.3h1.2v1.2h-1.2zM172.7,236.0h1.2v1.2h-1.2zM172.7,223.7h1.2v1.2h-1.2zM172.7,211.4h1.2v1.2h-1.2zM172.7,199.1h1.2v1.2h-1.2zM172.7,186.8h1.2v1.2h-1.2zM172.7,174.5h1.2v1.2h-1.2zM185.0,727.6h1.2v1.2h-1.2zM185.0,715.3h1.2v1.2h-1.2zM185.0,703.0h1.2v1.2h-1.2zM185.0,690.7h1.2v1.2h-1.2zM185.0,678.4h1.2v1.2h-1.2zM185.0,666.1h1.2v1.2h-1.2zM185.0,653.9h1.2v1.2h-1.2zM185.0,641.6h1.2v1.2h-1.2zM185.0,629.3h1.2v1.2h-1.2zM185.0,617.0h1.2v1.2h-1.2zM185.0,604.7h1.2v1.2h-1.2zM185.0,592.4h1.2v1.2h-1.2zM185.0,580.1h1.2v1.2h-1.2zM185.0,567.8h1.2v1.2h-1.2zM185.0,555.5h1.2v1.2h-1.2zM185.0,543.2h1.2v1.2h-1.2zM185.0,530.9h1.2v1.2h-1.2zM185.0,518.7h1.2v1.2h-1.2zM185.0,506.4h1.2v1.2h-1.2zM185.0,494.1h1.2v1.2h-1.2zM185.0,481.8h1.2v1.2h-1.2zM185.0,469.5h1.2v1.2h-1.2zM185.0,457.2h1.2v1.2h-1.2zM185.0,444.9h1.2v1.2h-1.2zM185.0,432.6h1.2v1.2h-1.2zM185.0,420.3h1.2v1.2h-1.2zM185.0,408.0h1.2v1.2h-1.2zM185.0,395.8h1.2v1.2h-1.2zM185.0,383.5h1.2v1.2h-1.2zM185.0,371.2h1.2v1.2h-1.2zM185.0,358.9h1.2v1.2h-1.2zM185.0,346.6h1.2v1.2h-1.2zM185.0,334.3h1.2v1.2h-1.2zM185.0,322.0h1.2v1.2h-1.2zM185.0,309.7h1.2v1.2h-1.2zM185.0,297.4h1.2v1.2h-1.2zM185.0,285.1h1.2v1.2h-1.2zM185.0,272.9h1.2v1.2h-1.2zM185.0,260.6h1.2v1.2h-1.2zM185.0,248.3h1.2v1.2h-1.2zM185.0,236.0h1.2v1.2h-1.2zM185.0,223.7h1.2v1.2h-1.2zM185.0,211.4h1.2v1.2h-1.2zM185.0,199.1h1.2v1.2h-1.2zM185.0,186.8h1.2v1.2h-1.2zM185.0,174.5h1.2v1.2h-1.2zM197.2,727.6h1.2v1.2h-1.2zM197.2,715.3h1.2v1.2h-1.2zM197.2,703.0h1.2v1.2h-1.2zM197.2,690.7h1.2v1.2h-1.2zM197.2,678.4h1.2v1.2h-1.2zM197.2,666.1h1.2v1.2h-1.2zM197.2,653.9h1.2v1.2h-1.2zM197.2,641.6h1.2v1.2h-1.2zM197.2,629.3h1.2v1.2h-1.2zM197.2,617.0h1.2v1.2h-1.2zM197.2,604.7h1.2v1.2h-1.2zM197.2,592.4h1.2v1.2h-1.2zM197.2,580.1h1.2v1.2h-1.2zM197.2,567.8h1.2v1.2h-1.2zM197.2,555.5h1.2v1.2h-1.2zM197.2,543.2h1.2v1.2h-1.2zM197.2,530.9h1.2v1.2h-1.2zM197.2,518.7h1.2v1.2h-1.2zM197.2,506.4h1.2v1.2h-1.2zM197.2,494.1h1.2v1.2h-1.2zM197.2,481.8h1.2v1.2h-1.2zM197.2,469.5h1.2v1.2h-1.2zM197.2,457.2h1.2v1.2h-1.2zM197.2,444.9h1.2v1.2h-1.2zM197.2,432.6h1.2v1.2h-1.2zM197.2,420.3h1.2v1.2h-1.2zM197.2,408.0h1.2v1.2h-1.2zM197.2,395.8h1.2v1.2h-1.2zM197.2,383.5h1.2v1.2h-1.2zM197.2,371.2h1.2v1.2h-1.2zM197.2,358.9h1.2v1.2h-1.2zM197.2,346.6h1.2v1.2h-1.2zM197.2,334.3h1.2v1.2h-1.2zM197.2,322.0h1.2v1.2h-1.2zM197.2,309.7h1.2v1.2h-1.2zM197.2,297.4h1.2v1.2h-1.2zM197.2,285.1h1.2v1.2h-1.2zM197.2,272.9h1.2v1.2h-1.2zM197.2,260.6h1.2v1.2h-1.2zM197.2,248.3h1.2v1.2h-1.2zM197.2,236.0h1.2v1.2h-1.2zM197.2,223.7h1.2v1.2h-1.2zM197.2,211.4h1.2v1.2h-1.2zM197.2,199.1h1.2v1.2h-1.2zM197.2,186.8h1.2v1.2h-1.2zM197.2,174.5h1.2v1.2h-1.2zM209.5,727.6h1.2v1.2h-1.2zM209.5,715.3h1.2v1.2h-1.2zM209.5,703.0h1.2v1.2h-1.2zM209.5,690.7h1.2v1.2h-1.2zM209.5,678.4h1.2v1.2h-1.2zM209.5,666.1h1.2v1.2h-1.2zM209.5,653.9h1.2v1.2h-1.2zM209.5,641.6h1.2v1.2h-1.2zM209.5,629.3h1.2v1.2h-1.2zM209.5,617.0h1.2v1.2h-1.2zM209.5,604.7h1.2v1.2h-1.2zM209.5,592.4h1.2v1.2h-1.2zM209.5,580.1h1.2v1.2h-1.2zM209.5,567.8h1.2v1.2h-1.2zM209.5,555.5h1.2v1.2h-1.2zM209.5,543.2h1.2v1.2h-1.2zM209.5,530.9h1.2v1.2h-1.2zM209.5,518.7h1.2v1.2h-1.2zM209.5,506.4h1.2v1.2h-1.2zM209.5,494.1h1.2v1.2h-1.2zM209.5,481.8h1.2v1.2h-1.2zM209.5,469.5h1.2v1.2h-1.2zM209.5,457.2h1.2v1.2h-1.2zM209.5,444.9h1.2v1.2h-1.2zM209.5,432.6h1.2v1.2h-1.2zM209.5,420.3h1.2v1.2h-1.2zM209.5,408.0h1.2v1.2h-1.2zM209.5,395.8h1.2v1.2h-1.2zM209.5,383.5h1.2v1.2h-1.2zM209.5,371.2h1.2v1.2h-1.2zM209.5,358.9h1.2v1.2h-1.2zM209.5,346.6h1.2v1.2h-1.2zM209.5,334.3h1.2v1.2h-1.2zM209.5,322.0h1.2v1.2h-1.2zM209.5,309.7h1.2v1.2h-1.2zM209.5,297.4h1.2v1.2h-1.2zM209.5,285.1h1.2v1.2h-1.2zM209.5,272.9h1.2v1.2h-1.2zM209.5,260.6h1.2v1.2h-1.2zM209.5,248.3h1.2v1.2h-1.2zM209.5,236.0h1.2v1.2h-1.2zM209.5,223.7h1.2v1.2h-1.2zM209.5,211.4h1.2v1.2h-1.2zM209.5,199.1h1.2v1.2h-1.2zM209.5,186.8h1.2v1.2h-1.2zM209.5,174.5h1.2v1.2h-1.2zM221.8,727.6h1.2v1.2h-1.2zM221.8,715.3h1.2v1.2h-1.2zM221.8,703.0h1.2v1.2h-1.2zM221.8,690.7h1.2v1.2h-1.2zM221.8,678.4h1.2v1.2h-1.2zM221.8,666.1h1.2v1.2h-1.2zM221.8,653.9h1.2v1.2h-1.2zM221.8,641.6h1.2v1.2h-1.2zM221.8,629.3h1.2v1.2h-1.2zM221.8,617.0h1.2v1.2h-1.2zM221.8,604.7h1.2v1.2h-1.2zM221.8,592.4h1.2v1.2h-1.2zM221.8,580.1h1.2v1.2h-1.2zM221.8,567.8h1.2v1.2h-1.2zM221.8,555.5h1.2v1.2h-1.2zM221.8,543.2h1.2v1.2h-1.2zM221.8,530.9h1.2v1.2h-1.2zM221.8,518.7h1.2v1.2h-1.2zM221.8,506.4h1.2v1.2h-1.2zM221.8,494.1h1.2v1.2h-1.2zM221.8,481.8h1.2v1.2h-1.2zM221.8,469.5h1.2v1.2h-1.2zM221.8,457.2h1.2v1.2h-1.2zM221.8,444.9h1.2v1.2h-1.2zM221.8,432.6h1.2v1.2h-1.2zM221.8,420.3h1.2v1.2h-1.2zM221.8,408.0h1.2v1.2h-1.2zM221.8,395.8h1.2v1.2h-1.2zM221.8,383.5h1.2v1.2h-1.2zM221.8,371.2h1.2v1.2h-1.2zM221.8,358.9h1.2v1.2h-1.2zM221.8,346.6h1.2v1.2h-1.2zM221.8,334.3h1.2v1.2h-1.2zM221.8,322.0h1.2v1.2h-1.2zM221.8,309.7h1.2v1.2h-1.2zM221.8,297.4h1.2v1.2h-1.2zM221.8,285.1h1.2v1.2h-1.2zM221.8,272.9h1.2v1.2h-1.2zM221.8,260.6h1.2v1.2h-1.2zM221.8,248.3h1.2v1.2h-1.2zM221.8,236.0h1.2v1.2h-1.2zM221.8,223.7h1.2v1.2h-1.2zM221.8,211.4h1.2v1.2h-1.2zM221.8,199.1h1.2v1.2h-1.2zM221.8,186.8h1.2v1.2h-1.2zM221.8,174.5h1.2v1.2h-1.2zM234.1,727.6h1.2v1.2h-1.2zM234.1,715.3h1.2v1.2h-1.2zM234.1,703.0h1.2v1.2h-1.2zM234.1,690.7h1.2v1.2h-1.2zM234.1,678.4h1.2v1.2h-1.2zM234.1,666.1h1.2v1.2h-1.2zM234.1,653.9h1.2v1.2h-1.2zM234.1,641.6h1.2v1.2h-1.2zM234.1,629.3h1.2v1.2h-1.2zM234.1,617.0h1.2v1.2h-1.2zM234.1,604.7h1.2v1.2h-1.2zM234.1,592.4h1.2v1.2h-1.2zM234.1,580.1h1.2v1.2h-1.2zM234.1,567.8h1.2v1.2h-1.2zM234.1,555.5h1.2v1.2h-1.2zM234.1,543.2h1.2v1.2h-1.2zM234.1,530.9h1.2v1.2h-1.2zM234.1,518.7h1.2v1.2h-1.2zM234.1,506.4h1.2v1.2h-1.2zM234.1,494.1h1.2v1.2h-1.2zM234.1,481.8h1.2v1.2h-1.2zM234.1,469.5h1.2v1.2h-1.2zM234.1,457.2h1.2v1.2h-1.2zM234.1,444.9h1.2v1.2h-1.2zM234.1,432.6h1.2v1.2h-1.2zM234.1,420.3h1.2v1.2h-1.2zM234.1,408.0h1.2v1.2h-1.2zM234.1,395.8h1.2v1.2h-1.2zM234.1,383.5h1.2v1.2h-1.2zM234.1,371.2h1.2v1.2h-1.2zM234.1,358.9h1.2v1.2h-1.2zM234.1,346.6h1.2v1.2h-1.2zM234.1,334.3h1.2v1.2h-1.2zM234.1,322.0h1.2v1.2h-1.2zM234.1,309.7h1.2v1.2h-1.2zM234.1,297.4h1.2v1.2h-1.2zM234.1,285.1h1.2v1.2h-1.2zM234.1,272.9h1.2v1.2h-1.2zM234.1,260.6h1.2v1.2h-1.2zM234.1,248.3h1.2v1.2h-1.2zM234.1,236.0h1.2v1.2h-1.2zM234.1,223.7h1.2v1.2h-1.2zM234.1,211.4h1.2v1.2h-1.2zM234.1,199.1h1.2v1.2h-1.2zM234.1,186.8h1.2v1.2h-1.2zM234.1,174.5h1.2v1.2h-1.2zM246.4,727.6h1.2v1.2h-1.2zM246.4,715.3h1.2v1.2h-1.2zM246.4,703.0h1.2v1.2h-1.2zM246.4,690.7h1.2v1.2h-1.2zM246.4,678.4h1.2v1.2h-1.2zM246.4,666.1h1.2v1.2h-1.2zM246.4,653.9h1.2v1.2h-1.2zM246.4,641.6h1.2v1.2h-1.2zM246.4,629.3h1.2v1.2h-1.2zM246.4,617.0h1.2v1.2h-1.2zM246.4,604.7h1.2v1.2h-1.2zM246.4,592.4h1.2v1.2h-1.2zM246.4,580.1h1.2v1.2h-1.2zM246.4,567.8h1.2v1.2h-1.2zM246.4,555.5h1.2v1.2h-1.2zM246.4,543.2h1.2v1.2h-1.2zM246.4,530.9h1.2v1.2h-1.2zM246.4,518.7h1.2v1.2h-1.2zM246.4,506.4h1.2v1.2h-1.2zM246.4,494.1h1.2v1.2h-1.2zM246.4,481.8h1.2v1.2h-1.2zM246.4,469.5h1.2v1.2h-1.2zM246.4,457.2h1.2v1.2h-1.2zM246.4,444.9h1.2v1.2h-1.2zM246.4,432.6h1.2v1.2h-1.2zM246.4,420.3h1.2v1.2h-1.2zM246.4,408.0h1.2v1.2h-1.2zM246.4,395.8h1.2v1.2h-1.2zM246.4,383.5h1.2v1.2h-1.2zM246.4,371.2h1.2v1.2h-1.2zM246.4,358.9h1.2v1.2h-1.2zM246.4,346.6h1.2v1.2h-1.2zM246.4,334.3h1.2v1.2h-1.2zM246.4,322.0h1.2v1.2h-1.2zM246.4,309.7h1.2v1.2h-1.2zM246.4,297.4h1.2v1.2h-1.2zM246.4,285.1h1.2v1.2h-1.2zM246.4,272.9h1.2v1.2h-1.2zM246.4,260.6h1.2v1.2h-1.2zM246.4,248.3h1.2v1.2h-1.2zM246.4,236.0h1.2v1.2h-1.2zM246.4,223.7h1.2v1.2h-1.2zM246.4,211.4h1.2v1.2h-1.2zM246.4,199.1h1.2v1.2h-1.2zM246.4,186.8h1.2v1.2h-1.2zM246.4,174.5h1.2v1.2h-1.2zM258.7,727.6h1.2v1.2h-1.2zM258.7,715.3h1.2v1.2h-1.2zM258.7,703.0h1.2v1.2h-1.2zM258.7,690.7h1.2v1.2h-1.2zM258.7,678.4h1.2v1.2h-1.2zM258.7,666.1h1.2v1.2h-1.2zM258.7,653.9h1.2v1.2h-1.2zM258.7,641.6h1.2v1.2h-1.2zM258.7,629.3h1.2v1.2h-1.2zM258.7,617.0h1.2v1.2h-1.2zM258.7,604.7h1.2v1.2h-1.2zM258.7,592.4h1.2v1.2h-1.2zM258.7,580.1h1.2v1.2h-1.2zM258.7,567.8h1.2v1.2h-1.2zM258.7,555.5h1.2v1.2h-1.2zM258.7,543.2h1.2v1.2h-1.2zM258.7,530.9h1.2v1.2h-1.2zM258.7,518.7h1.2v1.2h-1.2zM258.7,506.4h1.2v1.2h-1.2zM258.7,494.1h1.2v1.2h-1.2zM258.7,481.8h1.2v1.2h-1.2zM258.7,469.5h1.2v1.2h-1.2zM258.7,457.2h1.2v1.2h-1.2zM258.7,444.9h1.2v1.2h-1.2zM258.7,432.6h1.2v1.2h-1.2zM258.7,420.3h1.2v1.2h-1.2zM258.7,408.0h1.2v1.2h-1.2zM258.7,395.8h1.2v1.2h-1.2zM258.7,383.5h1.2v1.2h-1.2zM258.7,371.2h1.2v1.2h-1.2zM258.7,358.9h1.2v1.2h-1.2zM258.7,346.6h1.2v1.2h-1.2zM258.7,334.3h1.2v1.2h-1.2zM258.7,322.0h1.2v1.2h-1.2zM258.7,309.7h1.2v1.2h-1.2zM258.7,297.4h1.2v1.2h-1.2zM258.7,285.1h1.2v1.2h-1.2zM258.7,272.9h1.2v1.2h-1.2zM258.7,260.6h1.2v1.2h-1.2zM258.7,248.3h1.2v1.2h-1.2zM258.7,236.0h1.2v1.2h-1.2zM258.7,223.7h1.2v1.2h-1.2zM258.7,211.4h1.2v1.2h-1.2zM258.7,199.1h1.2v1.2h-1.2zM258.7,186.8h1.2v1.2h-1.2zM258.7,174.5h1.2v1.2h-1.2zM271.0,727.6h1.2v1.2h-1.2zM271.0,715.3h1.2v1.2h-1.2zM271.0,703.0h1.2v1.2h-1.2zM271.0,690.7h1.2v1.2h-1.2zM271.0,678.4h1.2v1.2h-1.2zM271.0,666.1h1.2v1.2h-1.2zM271.0,653.9h1.2v1.2h-1.2zM271.0,641.6h1.2v1.2h-1.2zM271.0,629.3h1.2v1.2h-1.2zM271.0,617.0h1.2v1.2h-1.2zM271.0,604.7h1.2v1.2h-1.2zM271.0,592.4h1.2v1.2h-1.2zM271.0,580.1h1.2v1.2h-1.2zM271.0,567.8h1.2v1.2h-1.2zM271.0,555.5h1.2v1.2h-1.2zM271.0,543.2h1.2v1.2h-1.2zM271.0,530.9h1.2v1.2h-1.2zM271.0,518.7h1.2v1.2h-1.2zM271.0,506.4h1.2v1.2h-1.2zM271.0,494.1h1.2v1.2h-1.2zM271.0,481.8h1.2v1.2h-1.2zM271.0,469.5h1.2v1.2h-1.2zM271.0,457.2h1.2v1.2h-1.2zM271.0,444.9h1.2v1.2h-1.2zM271.0,432.6h1.2v1.2h-1.2zM271.0,420.3h1.2v1.2h-1.2zM271.0,408.0h1.2v1.2h-1.2zM271.0,395.8h1.2v1.2h-1.2zM271.0,383.5h1.2v1.2h-1.2zM271.0,371.2h1.2v1.2h-1.2zM271.0,358.9h1.2v1.2h-1.2zM271.0,346.6h1.2v1.2h-1.2zM271.0,334.3h1.2v1.2h-1.2zM271.0,322.0h1.2v1.2h-1.2zM271.0,309.7h1.2v1.2h-1.2zM271.0,297.4h1.2v1.2h-1.2zM271.0,285.1h1.2v1.2h-1.2zM271.0,272.9h1.2v1.2h-1.2zM271.0,260.6h1.2v1.2h-1.2zM271.0,248.3h1.2v1.2h-1.2zM271.0,236.0h1.2v1.2h-1.2zM271.0,223.7h1.2v1.2h-1.2zM271.0,211.4h1.2v1.2h-1.2zM271.0,199.1h1.2v1.2h-1.2zM271.0,186.8h1.2v1.2h-1.2zM271.0,174.5h1.2v1.2h-1.2zM283.3,727.6h1.2v1.2h-1.2zM283.3,715.3h1.2v1.2h-1.2zM283.3,703.0h1.2v1.2h-1.2zM283.3,690.7h1.2v1.2h-1.2zM283.3,678.4h1.2v1.2h-1.2zM283.3,666.1h1.2v1.2h-1.2zM283.3,653.9h1.2v1.2h-1.2zM283.3,641.6h1.2v1.2h-1.2zM283.3,629.3h1.2v1.2h-1.2zM283.3,617.0h1.2v1.2h-1.2zM283.3,604.7h1.2v1.2h-1.2zM283.3,592.4h1.2v1.2h-1.2zM283.3,580.1h1.2v1.2h-1.2zM283.3,567.8h1.2v1.2h-1.2zM283.3,555.5h1.2v1.2h-1.2zM283.3,543.2h1.2v1.2h-1.2zM283.3,530.9h1.2v1.2h-1.2zM283.3,518.7h1.2v1.2h-1.2zM283.3,506.4h1.2v1.2h-1.2zM283.3,494.1h1.2v1.2h-1.2zM283.3,481.8h1.2v1.2h-1.2zM283.3,469.5h1.2v1.2h-1.2zM283.3,457.2h1.2v1.2h-1.2zM283.3,444.9h1.2v1.2h-1.2zM283.3,432.6h1.2v1.2h-1.2zM283.3,420.3h1.2v1.2h-1.2zM283.3,408.0h1.2v1.2h-1.2zM283.3,395.8h1.2v1.2h-1.2zM283.3,383.5h1.2v1.2h-1.2zM283.3,371.2h1.2v1.2h-1.2zM283.3,358.9h1.2v1.2h-1.2zM283.3,346.6h1.2v1.2h-1.2zM283.3,334.3h1.2v1.2h-1.2zM283.3,322.0h1.2v1.2h-1.2zM283.3,309.7h1.2v1.2h-1.2zM283.3,297.4h1.2v1.2h-1.2zM283.3,285.1h1.2v1.2h-1.2zM283.3,272.9h1.2v1.2h-1.2zM283.3,260.6h1.2v1.2h-1.2zM283.3,248.3h1.2v1.2h-1.2zM283.3,236.0h1.2v1.2h-1.2zM283.3,223.7h1.2v1.2h-1.2zM283.3,211.4h1.2v1.2h-1.2zM283.3,199.1h1.2v1.2h-1.2zM283.3,186.8h1.2v1.2h-1.2zM283.3,174.5h1.2v1.2h-1.2zM295.6,727.6h1.2v1.2h-1.2zM295.6,715.3h1.2v1.2h-1.2zM295.6,703.0h1.2v1.2h-1.2zM295.6,690.7h1.2v1.2h-1.2zM295.6,678.4h1.2v1.2h-1.2zM295.6,666.1h1.2v1.2h-1.2zM295.6,653.9h1.2v1.2h-1.2zM295.6,641.6h1.2v1.2h-1.2zM295.6,629.3h1.2v1.2h-1.2zM295.6,617.0h1.2v1.2h-1.2zM295.6,604.7h1.2v1.2h-1.2zM295.6,592.4h1.2v1.2h-1.2zM295.6,580.1h1.2v1.2h-1.2zM295.6,567.8h1.2v1.2h-1.2zM295.6,555.5h1.2v1.2h-1.2zM295.6,543.2h1.2v1.2h-1.2zM295.6,530.9h1.2v1.2h-1.2zM295.6,518.7h1.2v1.2h-1.2zM295.6,506.4h1.2v1.2h-1.2zM295.6,494.1h1.2v1.2h-1.2zM295.6,481.8h1.2v1.2h-1.2zM295.6,469.5h1.2v1.2h-1.2zM295.6,457.2h1.2v1.2h-1.2zM295.6,444.9h1.2v1.2h-1.2zM295.6,432.6h1.2v1.2h-1.2zM295.6,420.3h1.2v1.2h-1.2zM295.6,408.0h1.2v1.2h-1.2zM295.6,395.8h1.2v1.2h-1.2zM295.6,383.5h1.2v1.2h-1.2zM295.6,371.2h1.2v1.2h-1.2zM295.6,358.9h1.2v1.2h-1.2zM295.6,346.6h1.2v1.2h-1.2zM295.6,334.3h1.2v1.2h-1.2zM295.6,322.0h1.2v1.2h-1.2zM295.6,309.7h1.2v1.2h-1.2zM295.6,297.4h1.2v1.2h-1.2zM295.6,285.1h1.2v1.2h-1.2zM295.6,272.9h1.2v1.2h-1.2zM295.6,260.6h1.2v1.2h-1.2zM295.6,248.3h1.2v1.2h-1.2zM295.6,236.0h1.2v1.2h-1.2zM295.6,223.7h1.2v1.2h-1.2zM295.6,211.4h1.2v1.2h-1.2zM295.6,199.1h1.2v1.2h-1.2zM295.6,186.8h1.2v1.2h-1.2zM295.6,174.5h1.2v1.2h-1.2zM307.9,727.6h1.2v1.2h-1.2zM307.9,715.3h1.2v1.2h-1.2zM307.9,703.0h1.2v1.2h-1.2zM307.9,690.7h1.2v1.2h-1.2zM307.9,678.4h1.2v1.2h-1.2zM307.9,666.1h1.2v1.2h-1.2zM307.9,653.9h1.2v1.2h-1.2zM307.9,641.6h1.2v1.2h-1.2zM307.9,629.3h1.2v1.2h-1.2zM307.9,617.0h1.2v1.2h-1.2zM307.9,604.7h1.2v1.2h-1.2zM307.9,592.4h1.2v1.2h-1.2zM307.9,580.1h1.2v1.2h-1.2zM307.9,567.8h1.2v1.2h-1.2zM307.9,555.5h1.2v1.2h-1.2zM307.9,543.2h1.2v1.2h-1.2zM307.9,530.9h1.2v1.2h-1.2zM307.9,518.7h1.2v1.2h-1.2zM307.9,506.4h1.2v1.2h-1.2zM307.9,494.1h1.2v1.2h-1.2zM307.9,481.8h1.2v1.2h-1.2zM307.9,469.5h1.2v1.2h-1.2zM307.9,457.2h1.2v1.2h-1.2zM307.9,444.9h1.2v1.2h-1.2zM307.9,432.6h1.2v1.2h-1.2zM307.9,420.3h1.2v1.2h-1.2zM307.9,408.0h1.2v1.2h-1.2zM307.9,395.8h1.2v1.2h-1.2zM307.9,383.5h1.2v1.2h-1.2zM307.9,371.2h1.2v1.2h-1.2zM307.9,358.9h1.2v1.2h-1.2zM307.9,346.6h1.2v1.2h-1.2zM307.9,334.3h1.2v1.2h-1.2zM307.9,322.0h1.2v1.2h-1.2zM307.9,309.7h1.2v1.2h-1.2zM307.9,297.4h1.2v1.2h-1.2zM307.9,285.1h1.2v1.2h-1.2zM307.9,272.9h1.2v1.2h-1.2zM307.9,260.6h1.2v1.2h-1.2zM307.9,248.3h1.2v1.2h-1.2zM307.9,236.0h1.2v1.2h-1.2zM307.9,223.7h1.2v1.2h-1.2zM307.9,211.4h1.2v1.2h-1.2zM307.9,199.1h1.2v1.2h-1.2zM307.9,186.8h1.2v1.2h-1.2zM307.9,174.5h1.2v1.2h-1.2zM320.1,727.6h1.2v1.2h-1.2zM320.1,715.3h1.2v1.2h-1.2zM320.1,703.0h1.2v1.2h-1.2zM320.1,690.7h1.2v1.2h-1.2zM320.1,678.4h1.2v1.2h-1.2zM320.1,666.1h1.2v1.2h-1.2zM320.1,653.9h1.2v1.2h-1.2zM320.1,641.6h1.2v1.2h-1.2zM320.1,629.3h1.2v1.2h-1.2zM320.1,617.0h1.2v1.2h-1.2zM320.1,604.7h1.2v1.2h-1.2zM320.1,592.4h1.2v1.2h-1.2zM320.1,580.1h1.2v1.2h-1.2zM320.1,567.8h1.2v1.2h-1.2zM320.1,555.5h1.2v1.2h-1.2zM320.1,543.2h1.2v1.2h-1.2zM320.1,530.9h1.2v1.2h-1.2zM320.1,518.7h1.2v1.2h-1.2zM320.1,506.4h1.2v1.2h-1.2zM320.1,494.1h1.2v1.2h-1.2zM320.1,481.8h1.2v1.2h-1.2zM320.1,469.5h1.2v1.2h-1.2zM320.1,457.2h1.2v1.2h-1.2zM320.1,444.9h1.2v1.2h-1.2zM320.1,432.6h1.2v1.2h-1.2zM320.1,420.3h1.2v1.2h-1.2zM320.1,408.0h1.2v1.2h-1.2zM320.1,395.8h1.2v1.2h-1.2zM320.1,383.5h1.2v1.2h-1.2zM320.1,371.2h1.2v1.2h-1.2zM320.1,358.9h1.2v1.2h-1.2zM320.1,346.6h1.2v1.2h-1.2zM320.1,334.3h1.2v1.2h-1.2zM320.1,322.0h1.2v1.2h-1.2zM320.1,309.7h1.2v1.2h-1.2zM320.1,297.4h1.2v1.2h-1.2zM320.1,285.1h1.2v1.2h-1.2zM320.1,272.9h1.2v1.2h-1.2zM320.1,260.6h1.2v1.2h-1.2zM320.1,248.3h1.2v1.2h-1.2zM320.1,236.0h1.2v1.2h-1.2zM320.1,223.7h1.2v1.2h-1.2zM320.1,211.4h1.2v1.2h-1.2zM320.1,199.1h1.2v1.2h-1.2zM320.1,186.8h1.2v1.2h-1.2zM320.1,174.5h1.2v1.2h-1.2zM332.4,727.6h1.2v1.2h-1.2zM332.4,715.3h1.2v1.2h-1.2zM332.4,703.0h1.2v1.2h-1.2zM332.4,690.7h1.2v1.2h-1.2zM332.4,678.4h1.2v1.2h-1.2zM332.4,666.1h1.2v1.2h-1.2zM332.4,653.9h1.2v1.2h-1.2zM332.4,641.6h1.2v1.2h-1.2zM332.4,629.3h1.2v1.2h-1.2zM332.4,617.0h1.2v1.2h-1.2zM332.4,604.7h1.2v1.2h-1.2zM332.4,592.4h1.2v1.2h-1.2zM332.4,580.1h1.2v1.2h-1.2zM332.4,567.8h1.2v1.2h-1.2zM332.4,555.5h1.2v1.2h-1.2zM332.4,543.2h1.2v1.2h-1.2zM332.4,530.9h1.2v1.2h-1.2zM332.4,518.7h1.2v1.2h-1.2zM332.4,506.4h1.2v1.2h-1.2zM332.4,494.1h1.2v1.2h-1.2zM332.4,481.8h1.2v1.2h-1.2zM332.4,469.5h1.2v1.2h-1.2zM332.4,457.2h1.2v1.2h-1.2zM332.4,444.9h1.2v1.2h-1.2zM332.4,432.6h1.2v1.2h-1.2zM332.4,420.3h1.2v1.2h-1.2zM332.4,408.0h1.2v1.2h-1.2zM332.4,395.8h1.2v1.2h-1.2zM332.4,383.5h1.2v1.2h-1.2zM332.4,371.2h1.2v1.2h-1.2zM332.4,358.9h1.2v1.2h-1.2zM332.4,346.6h1.2v1.2h-1.2zM332.4,334.3h1.2v1.2h-1.2zM332.4,322.0h1.2v1.2h-1.2zM332.4,309.7h1.2v1.2h-1.2zM332.4,297.4h1.2v1.2h-1.2zM332.4,285.1h1.2v1.2h-1.2zM332.4,272.9h1.2v1.2h-1.2zM332.4,260.6h1.2v1.2h-1.2zM332.4,248.3h1.2v1.2h-1.2zM332.4,236.0h1.2v1.2h-1.2zM332.4,223.7h1.2v1.2h-1.2zM332.4,211.4h1.2v1.2h-1.2zM332.4,199.1h1.2v1.2h-1.2zM332.4,186.8h1.2v1.2h-1.2zM332.4,174.5h1.2v1.2h-1.2zM344.7,727.6h1.2v1.2h-1.2zM344.7,715.3h1.2v1.2h-1.2zM344.7,703.0h1.2v1.2h-1.2zM344.7,690.7h1.2v1.2h-1.2zM344.7,678.4h1.2v1.2h-1.2zM344.7,666.1h1.2v1.2h-1.2zM344.7,653.9h1.2v1.2h-1.2zM344.7,641.6h1.2v1.2h-1.2zM344.7,629.3h1.2v1.2h-1.2zM344.7,617.0h1.2v1.2h-1.2zM344.7,604.7h1.2v1.2h-1.2zM344.7,592.4h1.2v1.2h-1.2zM344.7,580.1h1.2v1.2h-1.2zM344.7,567.8h1.2v1.2h-1.2zM344.7,555.5h1.2v1.2h-1.2zM344.7,543.2h1.2v1.2h-1.2zM344.7,530.9h1.2v1.2h-1.2zM344.7,518.7h1.2v1.2h-1.2zM344.7,506.4h1.2v1.2h-1.2zM344.7,494.1h1.2v1.2h-1.2zM344.7,481.8h1.2v1.2h-1.2zM344.7,469.5h1.2v1.2h-1.2zM344.7,457.2h1.2v1.2h-1.2zM344.7,444.9h1.2v1.2h-1.2zM344.7,432.6h1.2v1.2h-1.2zM344.7,420.3h1.2v1.2h-1.2zM344.7,408.0h1.2v1.2h-1.2zM344.7,395.8h1.2v1.2h-1.2zM344.7,383.5h1.2v1.2h-1.2zM344.7,371.2h1.2v1.2h-1.2zM344.7,358.9h1.2v1.2h-1.2zM344.7,346.6h1.2v1.2h-1.2zM344.7,334.3h1.2v1.2h-1.2zM344.7,322.0h1.2v1.2h-1.2zM344.7,309.7h1.2v1.2h-1.2zM344.7,297.4h1.2v1.2h-1.2zM344.7,285.1h1.2v1.2h-1.2zM344.7,272.9h1.2v1.2h-1.2zM344.7,260.6h1.2v1.2h-1.2zM344.7,248.3h1.2v1.2h-1.2zM344.7,236.0h1.2v1.2h-1.2zM344.7,223.7h1.2v1.2h-1.2zM344.7,211.4h1.2v1.2h-1.2zM344.7,199.1h1.2v1.2h-1.2zM344.7,186.8h1.2v1.2h-1.2zM344.7,174.5h1.2v1.2h-1.2zM357.0,727.6h1.2v1.2h-1.2zM357.0,715.3h1.2v1.2h-1.2zM357.0,703.0h1.2v1.2h-1.2zM357.0,690.7h1.2v1.2h-1.2zM357.0,678.4h1.2v1.2h-1.2zM357.0,666.1h1.2v1.2h-1.2zM357.0,653.9h1.2v1.2h-1.2zM357.0,641.6h1.2v1.2h-1.2zM357.0,629.3h1.2v1.2h-1.2zM357.0,617.0h1.2v1.2h-1.2zM357.0,604.7h1.2v1.2h-1.2zM357.0,592.4h1.2v1.2h-1.2zM357.0,580.1h1.2v1.2h-1.2zM357.0,567.8h1.2v1.2h-1.2zM357.0,555.5h1.2v1.2h-1.2zM357.0,543.2h1.2v1.2h-1.2zM357.0,530.9h1.2v1.2h-1.2zM357.0,518.7h1.2v1.2h-1.2zM357.0,506.4h1.2v1.2h-1.2zM357.0,494.1h1.2v1.2h-1.2zM357.0,481.8h1.2v1.2h-1.2zM357.0,469.5h1.2v1.2h-1.2zM357.0,457.2h1.2v1.2h-1.2zM357.0,444.9h1.2v1.2h-1.2zM357.0,432.6h1.2v1.2h-1.2zM357.0,420.3h1.2v1.2h-1.2zM357.0,408.0h1.2v1.2h-1.2zM357.0,395.8h1.2v1.2h-1.2zM357.0,383.5h1.2v1.2h-1.2zM357.0,371.2h1.2v1.2h-1.2zM357.0,358.9h1.2v1.2h-1.2zM357.0,346.6h1.2v1.2h-1.2zM357.0,334.3h1.2v1.2h-1.2zM357.0,322.0h1.2v1.2h-1.2zM357.0,309.7h1.2v1.2h-1.2zM357.0,297.4h1.2v1.2h-1.2zM357.0,285.1h1.2v1.2h-1.2zM357.0,272.9h1.2v1.2h-1.2zM357.0,260.6h1.2v1.2h-1.2zM357.0,248.3h1.2v1.2h-1.2zM357.0,236.0h1.2v1.2h-1.2zM357.0,223.7h1.2v1.2h-1.2zM357.0,211.4h1.2v1.2h-1.2zM357.0,199.1h1.2v1.2h-1.2zM357.0,186.8h1.2v1.2h-1.2zM357.0,174.5h1.2v1.2h-1.2zM369.3,727.6h1.2v1.2h-1.2zM369.3,715.3h1.2v1.2h-1.2zM369.3,703.0h1.2v1.2h-1.2zM369.3,690.7h1.2v1.2h-1.2zM369.3,678.4h1.2v1.2h-1.2zM369.3,666.1h1.2v1.2h-1.2zM369.3,653.9h1.2v1.2h-1.2zM369.3,641.6h1.2v1.2h-1.2zM369.3,629.3h1.2v1.2h-1.2zM369.3,617.0h1.2v1.2h-1.2zM369.3,604.7h1.2v1.2h-1.2zM369.3,592.4h1.2v1.2h-1.2zM369.3,580.1h1.2v1.2h-1.2zM369.3,567.8h1.2v1.2h-1.2zM369.3,555.5h1.2v1.2h-1.2zM369.3,543.2h1.2v1.2h-1.2zM369.3,530.9h1.2v1.2h-1.2zM369.3,518.7h1.2v1.2h-1.2zM369.3,506.4h1.2v1.2h-1.2zM369.3,494.1h1.2v1.2h-1.2zM369.3,481.8h1.2v1.2h-1.2zM369.3,469.5h1.2v1.2h-1.2zM369.3,457.2h1.2v1.2h-1.2zM369.3,444.9h1.2v1.2h-1.2zM369.3,432.6h1.2v1.2h-1.2zM369.3,420.3h1.2v1.2h-1.2zM369.3,408.0h1.2v1.2h-1.2zM369.3,395.8h1.2v1.2h-1.2zM369.3,383.5h1.2v1.2h-1.2zM369.3,371.2h1.2v1.2h-1.2zM369.3,358.9h1.2v1.2h-1.2zM369.3,346.6h1.2v1.2h-1.2zM369.3,334.3h1.2v1.2h-1.2zM369.3,322.0h1.2v1.2h-1.2zM369.3,309.7h1.2v1.2h-1.2zM369.3,297.4h1.2v1.2h-1.2zM369.3,285.1h1.2v1.2h-1.2zM369.3,272.9h1.2v1.2h-1.2zM369.3,260.6h1.2v1.2h-1.2zM369.3,248.3h1.2v1.2h-1.2zM369.3,236.0h1.2v1.2h-1.2zM369.3,223.7h1.2v1.2h-1.2zM369.3,211.4h1.2v1.2h-1.2zM369.3,199.1h1.2v1.2h-1.2zM369.3,186.8h1.2v1.2h-1.2zM369.3,174.5h1.2v1.2h-1.2zM381.6,727.6h1.2v1.2h-1.2zM381.6,715.3h1.2v1.2h-1.2zM381.6,703.0h1.2v1.2h-1.2zM381.6,690.7h1.2v1.2h-1.2zM381.6,678.4h1.2v1.2h-1.2zM381.6,666.1h1.2v1.2h-1.2zM381.6,653.9h1.2v1.2h-1.2zM381.6,641.6h1.2v1.2h-1.2zM381.6,629.3h1.2v1.2h-1.2zM381.6,617.0h1.2v1.2h-1.2zM381.6,604.7h1.2v1.2h-1.2zM381.6,592.4h1.2v1.2h-1.2zM381.6,580.1h1.2v1.2h-1.2zM381.6,567.8h1.2v1.2h-1.2zM381.6,555.5h1.2v1.2h-1.2zM381.6,543.2h1.2v1.2h-1.2zM381.6,530.9h1.2v1.2h-1.2zM381.6,518.7h1.2v1.2h-1.2zM381.6,506.4h1.2v1.2h-1.2zM381.6,494.1h1.2v1.2h-1.2zM381.6,481.8h1.2v1.2h-1.2zM381.6,469.5h1.2v1.2h-1.2zM381.6,457.2h1.2v1.2h-1.2zM381.6,444.9h1.2v1.2h-1.2zM381.6,432.6h1.2v1.2h-1.2zM381.6,420.3h1.2v1.2h-1.2zM381.6,408.0h1.2v1.2h-1.2zM381.6,395.8h1.2v1.2h-1.2zM381.6,383.5h1.2v1.2h-1.2zM381.6,371.2h1.2v1.2h-1.2zM381.6,358.9h1.2v1.2h-1.2zM381.6,346.6h1.2v1.2h-1.2zM381.6,334.3h1.2v1.2h-1.2zM381.6,322.0h1.2v1.2h-1.2zM381.6,309.7h1.2v1.2h-1.2zM381.6,297.4h1.2v1.2h-1.2zM381.6,285.1h1.2v1.2h-1.2zM381.6,272.9h1.2v1.2h-1.2zM381.6,260.6h1.2v1.2h-1.2zM381.6,248.3h1.2v1.2h-1.2zM381.6,236.0h1.2v1.2h-1.2zM381.6,223.7h1.2v1.2h-1.2zM381.6,211.4h1.2v1.2h-1.2zM381.6,199.1h1.2v1.2h-1.2zM381.6,186.8h1.2v1.2h-1.2zM381.6,174.5h1.2v1.2h-1.2zM393.9,727.6h1.2v1.2h-1.2zM393.9,715.3h1.2v1.2h-1.2zM393.9,703.0h1.2v1.2h-1.2zM393.9,690.7h1.2v1.2h-1.2zM393.9,678.4h1.2v1.2h-1.2zM393.9,666.1h1.2v1.2h-1.2zM393.9,653.9h1.2v1.2h-1.2zM393.9,641.6h1.2v1.2h-1.2zM393.9,629.3h1.2v1.2h-1.2zM393.9,617.0h1.2v1.2h-1.2zM393.9,604.7h1.2v1.2h-1.2zM393.9,592.4h1.2v1.2h-1.2zM393.9,580.1h1.2v1.2h-1.2zM393.9,567.8h1.2v1.2h-1.2zM393.9,555.5h1.2v1.2h-1.2zM393.9,543.2h1.2v1.2h-1.2zM393.9,530.9h1.2v1.2h-1.2zM393.9,518.7h1.2v1.2h-1.2zM393.9,506.4h1.2v1.2h-1.2zM393.9,494.1h1.2v1.2h-1.2zM393.9,481.8h1.2v1.2h-1.2zM393.9,469.5h1.2v1.2h-1.2zM393.9,457.2h1.2v1.2h-1.2zM393.9,444.9h1.2v1.2h-1.2zM393.9,432.6h1.2v1.2h-1.2zM393.9,420.3h1.2v1.2h-1.2zM393.9,408.0h1.2v1.2h-1.2zM393.9,395.8h1.2v1.2h-1.2zM393.9,383.5h1.2v1.2h-1.2zM393.9,371.2h1.2v1.2h-1.2zM393.9,358.9h1.2v1.2h-1.2zM393.9,346.6h1.2v1.2h-1.2zM393.9,334.3h1.2v1.2h-1.2zM393.9,322.0h1.2v1.2h-1.2zM393.9,309.7h1.2v1.2h-1.2zM393.9,297.4h1.2v1.2h-1.2zM393.9,285.1h1.2v1.2h-1.2zM393.9,272.9h1.2v1.2h-1.2zM393.9,260.6h1.2v1.2h-1.2zM393.9,248.3h1.2v1.2h-1.2zM393.9,236.0h1.2v1.2h-1.2zM393.9,223.7h1.2v1.2h-1.2zM393.9,211.4h1.2v1.2h-1.2zM393.9,199.1h1.2v1.2h-1.2zM393.9,186.8h1.2v1.2h-1.2zM393.9,174.5h1.2v1.2h-1.2zM406.2,727.6h1.2v1.2h-1.2zM406.2,715.3h1.2v1.2h-1.2zM406.2,703.0h1.2v1.2h-1.2zM406.2,690.7h1.2v1.2h-1.2zM406.2,678.4h1.2v1.2h-1.2zM406.2,666.1h1.2v1.2h-1.2zM406.2,653.9h1.2v1.2h-1.2zM406.2,641.6h1.2v1.2h-1.2zM406.2,629.3h1.2v1.2h-1.2zM406.2,617.0h1.2v1.2h-1.2zM406.2,604.7h1.2v1.2h-1.2zM406.2,592.4h1.2v1.2h-1.2zM406.2,580.1h1.2v1.2h-1.2zM406.2,567.8h1.2v1.2h-1.2zM406.2,555.5h1.2v1.2h-1.2zM406.2,543.2h1.2v1.2h-1.2zM406.2,530.9h1.2v1.2h-1.2zM406.2,518.7h1.2v1.2h-1.2zM406.2,506.4h1.2v1.2h-1.2zM406.2,494.1h1.2v1.2h-1.2zM406.2,481.8h1.2v1.2h-1.2zM406.2,469.5h1.2v1.2h-1.2zM406.2,457.2h1.2v1.2h-1.2zM406.2,444.9h1.2v1.2h-1.2zM406.2,432.6h1.2v1.2h-1.2zM406.2,420.3h1.2v1.2h-1.2zM406.2,408.0h1.2v1.2h-1.2zM406.2,395.8h1.2v1.2h-1.2zM406.2,383.5h1.2v1.2h-1.2zM406.2,371.2h1.2v1.2h-1.2zM406.2,358.9h1.2v1.2h-1.2zM406.2,346.6h1.2v1.2h-1.2zM406.2,334.3h1.2v1.2h-1.2zM406.2,322.0h1.2v1.2h-1.2zM406.2,309.7h1.2v1.2h-1.2zM406.2,297.4h1.2v1.2h-1.2zM406.2,285.1h1.2v1.2h-1.2zM406.2,272.9h1.2v1.2h-1.2zM406.2,260.6h1.2v1.2h-1.2zM406.2,248.3h1.2v1.2h-1.2zM406.2,236.0h1.2v1.2h-1.2zM406.2,223.7h1.2v1.2h-1.2zM406.2,211.4h1.2v1.2h-1.2zM406.2,199.1h1.2v1.2h-1.2zM406.2,186.8h1.2v1.2h-1.2zM406.2,174.5h1.2v1.2h-1.2zM418.5,727.6h1.2v1.2h-1.2zM418.5,715.3h1.2v1.2h-1.2zM418.5,703.0h1.2v1.2h-1.2zM418.5,690.7h1.2v1.2h-1.2zM418.5,678.4h1.2v1.2h-1.2zM418.5,666.1h1.2v1.2h-1.2zM418.5,653.9h1.2v1.2h-1.2zM418.5,641.6h1.2v1.2h-1.2zM418.5,629.3h1.2v1.2h-1.2zM418.5,617.0h1.2v1.2h-1.2zM418.5,604.7h1.2v1.2h-1.2zM418.5,592.4h1.2v1.2h-1.2zM418.5,580.1h1.2v1.2h-1.2zM418.5,567.8h1.2v1.2h-1.2zM418.5,555.5h1.2v1.2h-1.2zM418.5,543.2h1.2v1.2h-1.2zM418.5,530.9h1.2v1.2h-1.2zM418.5,518.7h1.2v1.2h-1.2zM418.5,506.4h1.2v1.2h-1.2zM418.5,494.1h1.2v1.2h-1.2zM418.5,481.8h1.2v1.2h-1.2zM418.5,469.5h1.2v1.2h-1.2zM418.5,457.2h1.2v1.2h-1.2zM418.5,444.9h1.2v1.2h-1.2zM418.5,432.6h1.2v1.2h-1.2zM418.5,420.3h1.2v1.2h-1.2zM418.5,408.0h1.2v1.2h-1.2zM418.5,395.8h1.2v1.2h-1.2zM418.5,383.5h1.2v1.2h-1.2zM418.5,371.2h1.2v1.2h-1.2zM418.5,358.9h1.2v1.2h-1.2zM418.5,346.6h1.2v1.2h-1.2zM418.5,334.3h1.2v1.2h-1.2zM418.5,322.0h1.2v1.2h-1.2zM418.5,309.7h1.2v1.2h-1.2zM418.5,297.4h1.2v1.2h-1.2zM418.5,285.1h1.2v1.2h-1.2zM418.5,272.9h1.2v1.2h-1.2zM418.5,260.6h1.2v1.2h-1.2zM418.5,248.3h1.2v1.2h-1.2zM418.5,236.0h1.2v1.2h-1.2zM418.5,223.7h1.2v1.2h-1.2zM418.5,211.4h1.2v1.2h-1.2zM418.5,199.1h1.2v1.2h-1.2zM418.5,186.8h1.2v1.2h-1.2zM418.5,174.5h1.2v1.2h-1.2zM430.8,727.6h1.2v1.2h-1.2zM430.8,715.3h1.2v1.2h-1.2zM430.8,703.0h1.2v1.2h-1.2zM430.8,690.7h1.2v1.2h-1.2zM430.8,678.4h1.2v1.2h-1.2zM430.8,666.1h1.2v1.2h-1.2zM430.8,653.9h1.2v1.2h-1.2zM430.8,641.6h1.2v1.2h-1.2zM430.8,629.3h1.2v1.2h-1.2zM430.8,617.0h1.2v1.2h-1.2zM430.8,604.7h1.2v1.2h-1.2zM430.8,592.4h1.2v1.2h-1.2zM430.8,580.1h1.2v1.2h-1.2zM430.8,567.8h1.2v1.2h-1.2zM430.8,555.5h1.2v1.2h-1.2zM430.8,543.2h1.2v1.2h-1.2zM430.8,530.9h1.2v1.2h-1.2zM430.8,518.7h1.2v1.2h-1.2zM430.8,506.4h1.2v1.2h-1.2zM430.8,494.1h1.2v1.2h-1.2zM430.8,481.8h1.2v1.2h-1.2zM430.8,469.5h1.2v1.2h-1.2zM430.8,457.2h1.2v1.2h-1.2zM430.8,444.9h1.2v1.2h-1.2zM430.8,432.6h1.2v1.2h-1.2zM430.8,420.3h1.2v1.2h-1.2zM430.8,408.0h1.2v1.2h-1.2zM430.8,395.8h1.2v1.2h-1.2zM430.8,383.5h1.2v1.2h-1.2zM430.8,371.2h1.2v1.2h-1.2zM430.8,358.9h1.2v1.2h-1.2zM430.8,346.6h1.2v1.2h-1.2zM430.8,334.3h1.2v1.2h-1.2zM430.8,322.0h1.2v1.2h-1.2zM430.8,309.7h1.2v1.2h-1.2zM430.8,297.4h1.2v1.2h-1.2zM430.8,285.1h1.2v1.2h-1.2zM430.8,272.9h1.2v1.2h-1.2zM430.8,260.6h1.2v1.2h-1.2zM430.8,248.3h1.2v1.2h-1.2zM430.8,236.0h1.2v1.2h-1.2zM430.8,223.7h1.2v1.2h-1.2zM430.8,211.4h1.2v1.2h-1.2zM430.8,199.1h1.2v1.2h-1.2zM430.8,186.8h1.2v1.2h-1.2zM430.8,174.5h1.2v1.2h-1.2zM443.0,727.6h1.2v1.2h-1.2zM443.0,715.3h1.2v1.2h-1.2zM443.0,703.0h1.2v1.2h-1.2zM443.0,690.7h1.2v1.2h-1.2zM443.0,678.4h1.2v1.2h-1.2zM443.0,666.1h1.2v1.2h-1.2zM443.0,653.9h1.2v1.2h-1.2zM443.0,641.6h1.2v1.2h-1.2zM443.0,629.3h1.2v1.2h-1.2zM443.0,617.0h1.2v1.2h-1.2zM443.0,604.7h1.2v1.2h-1.2zM443.0,592.4h1.2v1.2h-1.2zM443.0,580.1h1.2v1.2h-1.2zM443.0,567.8h1.2v1.2h-1.2zM443.0,555.5h1.2v1.2h-1.2zM443.0,543.2h1.2v1.2h-1.2zM443.0,530.9h1.2v1.2h-1.2zM443.0,518.7h1.2v1.2h-1.2zM443.0,506.4h1.2v1.2h-1.2zM443.0,494.1h1.2v1.2h-1.2zM443.0,481.8h1.2v1.2h-1.2zM443.0,469.5h1.2v1.2h-1.2zM443.0,457.2h1.2v1.2h-1.2zM443.0,444.9h1.2v1.2h-1.2zM443.0,432.6h1.2v1.2h-1.2zM443.0,420.3h1.2v1.2h-1.2zM443.0,408.0h1.2v1.2h-1.2zM443.0,395.8h1.2v1.2h-1.2zM443.0,383.5h1.2v1.2h-1.2zM443.0,371.2h1.2v1.2h-1.2zM443.0,358.9h1.2v1.2h-1.2zM443.0,346.6h1.2v1.2h-1.2zM443.0,334.3h1.2v1.2h-1.2zM443.0,322.0h1.2v1.2h-1.2zM443.0,309.7h1.2v1.2h-1.2zM443.0,297.4h1.2v1.2h-1.2zM443.0,285.1h1.2v1.2h-1.2zM443.0,272.9h1.2v1.2h-1.2zM443.0,260.6h1.2v1.2h-1.2zM443.0,248.3h1.2v1.2h-1.2zM443.0,236.0h1.2v1.2h-1.2zM443.0,223.7h1.2v1.2h-1.2zM443.0,211.4h1.2v1.2h-1.2zM443.0,199.1h1.2v1.2h-1.2zM443.0,186.8h1.2v1.2h-1.2zM443.0,174.5h1.2v1.2h-1.2zM455.3,727.6h1.2v1.2h-1.2zM455.3,715.3h1.2v1.2h-1.2zM455.3,703.0h1.2v1.2h-1.2zM455.3,690.7h1.2v1.2h-1.2zM455.3,678.4h1.2v1.2h-1.2zM455.3,666.1h1.2v1.2h-1.2zM455.3,653.9h1.2v1.2h-1.2zM455.3,641.6h1.2v1.2h-1.2zM455.3,629.3h1.2v1.2h-1.2zM455.3,617.0h1.2v1.2h-1.2zM455.3,604.7h1.2v1.2h-1.2zM455.3,592.4h1.2v1.2h-1.2zM455.3,580.1h1.2v1.2h-1.2zM455.3,567.8h1.2v1.2h-1.2zM455.3,555.5h1.2v1.2h-1.2zM455.3,543.2h1.2v1.2h-1.2zM455.3,530.9h1.2v1.2h-1.2zM455.3,518.7h1.2v1.2h-1.2zM455.3,506.4h1.2v1.2h-1.2zM455.3,494.1h1.2v1.2h-1.2zM455.3,481.8h1.2v1.2h-1.2zM455.3,469.5h1.2v1.2h-1.2zM455.3,457.2h1.2v1.2h-1.2zM455.3,444.9h1.2v1.2h-1.2zM455.3,432.6h1.2v1.2h-1.2zM455.3,420.3h1.2v1.2h-1.2zM455.3,408.0h1.2v1.2h-1.2zM455.3,395.8h1.2v1.2h-1.2zM455.3,383.5h1.2v1.2h-1.2zM455.3,371.2h1.2v1.2h-1.2zM455.3,358.9h1.2v1.2h-1.2zM455.3,346.6h1.2v1.2h-1.2zM455.3,334.3h1.2v1.2h-1.2zM455.3,322.0h1.2v1.2h-1.2zM455.3,309.7h1.2v1.2h-1.2zM455.3,297.4h1.2v1.2h-1.2zM455.3,285.1h1.2v1.2h-1.2zM455.3,272.9h1.2v1.2h-1.2zM455.3,260.6h1.2v1.2h-1.2zM455.3,248.3h1.2v1.2h-1.2zM455.3,236.0h1.2v1.2h-1.2zM455.3,223.7h1.2v1.2h-1.2zM455.3,211.4h1.2v1.2h-1.2zM455.3,199.1h1.2v1.2h-1.2zM455.3,186.8h1.2v1.2h-1.2zM455.3,174.5h1.2v1.2h-1.2zM467.6,727.6h1.2v1.2h-1.2zM467.6,715.3h1.2v1.2h-1.2zM467.6,703.0h1.2v1.2h-1.2zM467.6,690.7h1.2v1.2h-1.2zM467.6,678.4h1.2v1.2h-1.2zM467.6,666.1h1.2v1.2h-1.2zM467.6,653.9h1.2v1.2h-1.2zM467.6,641.6h1.2v1.2h-1.2zM467.6,629.3h1.2v1.2h-1.2zM467.6,617.0h1.2v1.2h-1.2zM467.6,604.7h1.2v1.2h-1.2zM467.6,592.4h1.2v1.2h-1.2zM467.6,580.1h1.2v1.2h-1.2zM467.6,567.8h1.2v1.2h-1.2zM467.6,555.5h1.2v1.2h-1.2zM467.6,543.2h1.2v1.2h-1.2zM467.6,530.9h1.2v1.2h-1.2zM467.6,518.7h1.2v1.2h-1.2zM467.6,506.4h1.2v1.2h-1.2zM467.6,494.1h1.2v1.2h-1.2zM467.6,481.8h1.2v1.2h-1.2zM467.6,469.5h1.2v1.2h-1.2zM467.6,457.2h1.2v1.2h-1.2zM467.6,444.9h1.2v1.2h-1.2zM467.6,432.6h1.2v1.2h-1.2zM467.6,420.3h1.2v1.2h-1.2zM467.6,408.0h1.2v1.2h-1.2zM467.6,395.8h1.2v1.2h-1.2zM467.6,383.5h1.2v1.2h-1.2zM467.6,371.2h1.2v1.2h-1.2zM467.6,358.9h1.2v1.2h-1.2zM467.6,346.6h1.2v1.2h-1.2zM467.6,334.3h1.2v1.2h-1.2zM467.6,322.0h1.2v1.2h-1.2zM467.6,309.7h1.2v1.2h-1.2zM467.6,297.4h1.2v1.2h-1.2zM467.6,285.1h1.2v1.2h-1.2zM467.6,272.9h1.2v1.2h-1.2zM467.6,260.6h1.2v1.2h-1.2zM467.6,248.3h1.2v1.2h-1.2zM467.6,236.0h1.2v1.2h-1.2zM467.6,223.7h1.2v1.2h-1.2zM467.6,211.4h1.2v1.2h-1.2zM467.6,199.1h1.2v1.2h-1.2zM467.6,186.8h1.2v1.2h-1.2zM467.6,174.5h1.2v1.2h-1.2zM479.9,727.6h1.2v1.2h-1.2zM479.9,715.3h1.2v1.2h-1.2zM479.9,703.0h1.2v1.2h-1.2zM479.9,690.7h1.2v1.2h-1.2zM479.9,678.4h1.2v1.2h-1.2zM479.9,666.1h1.2v1.2h-1.2zM479.9,653.9h1.2v1.2h-1.2zM479.9,641.6h1.2v1.2h-1.2zM479.9,629.3h1.2v1.2h-1.2zM479.9,617.0h1.2v1.2h-1.2zM479.9,604.7h1.2v1.2h-1.2zM479.9,592.4h1.2v1.2h-1.2zM479.9,580.1h1.2v1.2h-1.2zM479.9,567.8h1.2v1.2h-1.2zM479.9,555.5h1.2v1.2h-1.2zM479.9,543.2h1.2v1.2h-1.2zM479.9,530.9h1.2v1.2h-1.2zM479.9,518.7h1.2v1.2h-1.2zM479.9,506.4h1.2v1.2h-1.2zM479.9,494.1h1.2v1.2h-1.2zM479.9,481.8h1.2v1.2h-1.2zM479.9,469.5h1.2v1.2h-1.2zM479.9,457.2h1.2v1.2h-1.2zM479.9,444.9h1.2v1.2h-1.2zM479.9,432.6h1.2v1.2h-1.2zM479.9,420.3h1.2v1.2h-1.2zM479.9,408.0h1.2v1.2h-1.2zM479.9,395.8h1.2v1.2h-1.2zM479.9,383.5h1.2v1.2h-1.2zM479.9,371.2h1.2v1.2h-1.2zM479.9,358.9h1.2v1.2h-1.2zM479.9,346.6h1.2v1.2h-1.2zM479.9,334.3h1.2v1.2h-1.2zM479.9,322.0h1.2v1.2h-1.2zM479.9,309.7h1.2v1.2h-1.2zM479.9,297.4h1.2v1.2h-1.2zM479.9,285.1h1.2v1.2h-1.2zM479.9,272.9h1.2v1.2h-1.2zM479.9,260.6h1.2v1.2h-1.2zM479.9,248.3h1.2v1.2h-1.2zM479.9,236.0h1.2v1.2h-1.2zM479.9,223.7h1.2v1.2h-1.2zM479.9,211.4h1.2v1.2h-1.2zM479.9,199.1h1.2v1.2h-1.2zM479.9,186.8h1.2v1.2h-1.2zM479.9,174.5h1.2v1.2h-1.2zM492.2,727.6h1.2v1.2h-1.2zM492.2,715.3h1.2v1.2h-1.2zM492.2,703.0h1.2v1.2h-1.2zM492.2,690.7h1.2v1.2h-1.2zM492.2,678.4h1.2v1.2h-1.2zM492.2,666.1h1.2v1.2h-1.2zM492.2,653.9h1.2v1.2h-1.2zM492.2,641.6h1.2v1.2h-1.2zM492.2,629.3h1.2v1.2h-1.2zM492.2,617.0h1.2v1.2h-1.2zM492.2,604.7h1.2v1.2h-1.2zM492.2,592.4h1.2v1.2h-1.2zM492.2,580.1h1.2v1.2h-1.2zM492.2,567.8h1.2v1.2h-1.2zM492.2,555.5h1.2v1.2h-1.2zM492.2,543.2h1.2v1.2h-1.2zM492.2,530.9h1.2v1.2h-1.2zM492.2,518.7h1.2v1.2h-1.2zM492.2,506.4h1.2v1.2h-1.2zM492.2,494.1h1.2v1.2h-1.2zM492.2,481.8h1.2v1.2h-1.2zM492.2,469.5h1.2v1.2h-1.2zM492.2,457.2h1.2v1.2h-1.2zM492.2,444.9h1.2v1.2h-1.2zM492.2,432.6h1.2v1.2h-1.2zM492.2,420.3h1.2v1.2h-1.2zM492.2,408.0h1.2v1.2h-1.2zM492.2,395.8h1.2v1.2h-1.2zM492.2,383.5h1.2v1.2h-1.2zM492.2,371.2h1.2v1.2h-1.2zM492.2,358.9h1.2v1.2h-1.2zM492.2,346.6h1.2v1.2h-1.2zM492.2,334.3h1.2v1.2h-1.2zM492.2,322.0h1.2v1.2h-1.2zM492.2,309.7h1.2v1.2h-1.2zM492.2,297.4h1.2v1.2h-1.2zM492.2,285.1h1.2v1.2h-1.2zM492.2,272.9h1.2v1.2h-1.2zM492.2,260.6h1.2v1.2h-1.2zM492.2,248.3h1.2v1.2h-1.2zM492.2,236.0h1.2v1.2h-1.2zM492.2,223.7h1.2v1.2h-1.2zM492.2,211.4h1.2v1.2h-1.2zM492.2,199.1h1.2v1.2h-1.2zM492.2,186.8h1.2v1.2h-1.2zM492.2,174.5h1.2v1.2h-1.2zM504.5,727.6h1.2v1.2h-1.2zM504.5,715.3h1.2v1.2h-1.2zM504.5,703.0h1.2v1.2h-1.2zM504.5,690.7h1.2v1.2h-1.2zM504.5,678.4h1.2v1.2h-1.2zM504.5,666.1h1.2v1.2h-1.2zM504.5,653.9h1.2v1.2h-1.2zM504.5,641.6h1.2v1.2h-1.2zM504.5,629.3h1.2v1.2h-1.2zM504.5,617.0h1.2v1.2h-1.2zM504.5,604.7h1.2v1.2h-1.2zM504.5,592.4h1.2v1.2h-1.2zM504.5,580.1h1.2v1.2h-1.2zM504.5,567.8h1.2v1.2h-1.2zM504.5,555.5h1.2v1.2h-1.2zM504.5,543.2h1.2v1.2h-1.2zM504.5,530.9h1.2v1.2h-1.2zM504.5,518.7h1.2v1.2h-1.2zM504.5,506.4h1.2v1.2h-1.2zM504.5,494.1h1.2v1.2h-1.2zM504.5,481.8h1.2v1.2h-1.2zM504.5,469.5h1.2v1.2h-1.2zM504.5,457.2h1.2v1.2h-1.2zM504.5,444.9h1.2v1.2h-1.2zM504.5,432.6h1.2v1.2h-1.2zM504.5,420.3h1.2v1.2h-1.2zM504.5,408.0h1.2v1.2h-1.2zM504.5,395.8h1.2v1.2h-1.2zM504.5,383.5h1.2v1.2h-1.2zM504.5,371.2h1.2v1.2h-1.2zM504.5,358.9h1.2v1.2h-1.2zM504.5,346.6h1.2v1.2h-1.2zM504.5,334.3h1.2v1.2h-1.2zM504.5,322.0h1.2v1.2h-1.2zM504.5,309.7h1.2v1.2h-1.2zM504.5,297.4h1.2v1.2h-1.2zM504.5,285.1h1.2v1.2h-1.2zM504.5,272.9h1.2v1.2h-1.2zM504.5,260.6h1.2v1.2h-1.2zM504.5,248.3h1.2v1.2h-1.2zM504.5,236.0h1.2v1.2h-1.2zM504.5,223.7h1.2v1.2h-1.2zM504.5,211.4h1.2v1.2h-1.2zM504.5,199.1h1.2v1.2h-1.2zM504.5,186.8h1.2v1.2h-1.2zM504.5,174.5h1.2v1.2h-1.2zM516.8,727.6h1.2v1.2h-1.2zM516.8,715.3h1.2v1.2h-1.2zM516.8,703.0h1.2v1.2h-1.2zM516.8,690.7h1.2v1.2h-1.2zM516.8,678.4h1.2v1.2h-1.2zM516.8,666.1h1.2v1.2h-1.2zM516.8,653.9h1.2v1.2h-1.2zM516.8,641.6h1.2v1.2h-1.2zM516.8,629.3h1.2v1.2h-1.2zM516.8,617.0h1.2v1.2h-1.2zM516.8,604.7h1.2v1.2h-1.2zM516.8,592.4h1.2v1.2h-1.2zM516.8,580.1h1.2v1.2h-1.2zM516.8,567.8h1.2v1.2h-1.2zM516.8,555.5h1.2v1.2h-1.2zM516.8,543.2h1.2v1.2h-1.2zM516.8,530.9h1.2v1.2h-1.2zM516.8,518.7h1.2v1.2h-1.2zM516.8,506.4h1.2v1.2h-1.2zM516.8,494.1h1.2v1.2h-1.2zM516.8,481.8h1.2v1.2h-1.2zM516.8,469.5h1.2v1.2h-1.2zM516.8,457.2h1.2v1.2h-1.2zM516.8,444.9h1.2v1.2h-1.2zM516.8,432.6h1.2v1.2h-1.2zM516.8,420.3h1.2v1.2h-1.2zM516.8,408.0h1.2v1.2h-1.2zM516.8,395.8h1.2v1.2h-1.2zM516.8,383.5h1.2v1.2h-1.2zM516.8,371.2h1.2v1.2h-1.2zM516.8,358.9h1.2v1.2h-1.2zM516.8,346.6h1.2v1.2h-1.2zM516.8,334.3h1.2v1.2h-1.2zM516.8,322.0h1.2v1.2h-1.2zM516.8,309.7h1.2v1.2h-1.2zM516.8,297.4h1.2v1.2h-1.2zM516.8,285.1h1.2v1.2h-1.2zM516.8,272.9h1.2v1.2h-1.2zM516.8,260.6h1.2v1.2h-1.2zM516.8,248.3h1.2v1.2h-1.2zM516.8,236.0h1.2v1.2h-1.2zM516.8,223.7h1.2v1.2h-1.2zM516.8,211.4h1.2v1.2h-1.2zM516.8,199.1h1.2v1.2h-1.2zM516.8,186.8h1.2v1.2h-1.2zM516.8,174.5h1.2v1.2h-1.2zM529.1,727.6h1.2v1.2h-1.2zM529.1,715.3h1.2v1.2h-1.2zM529.1,703.0h1.2v1.2h-1.2zM529.1,690.7h1.2v1.2h-1.2zM529.1,678.4h1.2v1.2h-1.2zM529.1,666.1h1.2v1.2h-1.2zM529.1,653.9h1.2v1.2h-1.2zM529.1,641.6h1.2v1.2h-1.2zM529.1,629.3h1.2v1.2h-1.2zM529.1,617.0h1.2v1.2h-1.2zM529.1,604.7h1.2v1.2h-1.2zM529.1,592.4h1.2v1.2h-1.2zM529.1,580.1h1.2v1.2h-1.2zM529.1,567.8h1.2v1.2h-1.2zM529.1,555.5h1.2v1.2h-1.2zM529.1,543.2h1.2v1.2h-1.2zM529.1,530.9h1.2v1.2h-1.2zM529.1,518.7h1.2v1.2h-1.2zM529.1,506.4h1.2v1.2h-1.2zM529.1,494.1h1.2v1.2h-1.2zM529.1,481.8h1.2v1.2h-1.2zM529.1,469.5h1.2v1.2h-1.2zM529.1,457.2h1.2v1.2h-1.2zM529.1,444.9h1.2v1.2h-1.2zM529.1,432.6h1.2v1.2h-1.2zM529.1,420.3h1.2v1.2h-1.2zM529.1,408.0h1.2v1.2h-1.2zM529.1,395.8h1.2v1.2h-1.2zM529.1,383.5h1.2v1.2h-1.2zM529.1,371.2h1.2v1.2h-1.2zM529.1,358.9h1.2v1.2h-1.2zM529.1,346.6h1.2v1.2h-1.2zM529.1,334.3h1.2v1.2h-1.2zM529.1,322.0h1.2v1.2h-1.2zM529.1,309.7h1.2v1.2h-1.2zM529.1,297.4h1.2v1.2h-1.2zM529.1,285.1h1.2v1.2h-1.2zM529.1,272.9h1.2v1.2h-1.2zM529.1,260.6h1.2v1.2h-1.2zM529.1,248.3h1.2v1.2h-1.2zM529.1,236.0h1.2v1.2h-1.2zM529.1,223.7h1.2v1.2h-1.2zM529.1,211.4h1.2v1.2h-1.2zM529.1,199.1h1.2v1.2h-1.2zM529.1,186.8h1.2v1.2h-1.2zM529.1,174.5h1.2v1.2h-1.2zM541.4,727.6h1.2v1.2h-1.2zM541.4,715.3h1.2v1.2h-1.2zM541.4,703.0h1.2v1.2h-1.2zM541.4,690.7h1.2v1.2h-1.2zM541.4,678.4h1.2v1.2h-1.2zM541.4,666.1h1.2v1.2h-1.2zM541.4,653.9h1.2v1.2h-1.2zM541.4,641.6h1.2v1.2h-1.2zM541.4,629.3h1.2v1.2h-1.2zM541.4,617.0h1.2v1.2h-1.2zM541.4,604.7h1.2v1.2h-1.2zM541.4,592.4h1.2v1.2h-1.2zM541.4,580.1h1.2v1.2h-1.2zM541.4,567.8h1.2v1.2h-1.2zM541.4,555.5h1.2v1.2h-1.2zM541.4,543.2h1.2v1.2h-1.2zM541.4,530.9h1.2v1.2h-1.2zM541.4,518.7h1.2v1.2h-1.2zM541.4,506.4h1.2v1.2h-1.2zM541.4,494.1h1.2v1.2h-1.2zM541.4,481.8h1.2v1.2h-1.2zM541.4,469.5h1.2v1.2h-1.2zM541.4,457.2h1.2v1.2h-1.2zM541.4,444.9h1.2v1.2h-1.2zM541.4,432.6h1.2v1.2h-1.2zM541.4,420.3h1.2v1.2h-1.2zM541.4,408.0h1.2v1.2h-1.2zM541.4,395.8h1.2v1.2h-1.2zM541.4,383.5h1.2v1.2h-1.2zM541.4,371.2h1.2v1.2h-1.2zM541.4,358.9h1.2v1.2h-1.2zM541.4,346.6h1.2v1.2h-1.2zM541.4,334.3h1.2v1.2h-1.2zM541.4,322.0h1.2v1.2h-1.2zM541.4,309.7h1.2v1.2h-1.2zM541.4,297.4h1.2v1.2h-1.2zM541.4,285.1h1.2v1.2h-1.2zM541.4,272.9h1.2v1.2h-1.2zM541.4,260.6h1.2v1.2h-1.2zM541.4,248.3h1.2v1.2h-1.2zM541.4,236.0h1.2v1.2h-1.2zM541.4,223.7h1.2v1.2h-1.2zM541.4,211.4h1.2v1.2h-1.2zM541.4,199.1h1.2v1.2h-1.2zM541.4,186.8h1.2v1.2h-1.2zM541.4,174.5h1.2v1.2h-1.2zM553.7,727.6h1.2v1.2h-1.2zM553.7,715.3h1.2v1.2h-1.2zM553.7,703.0h1.2v1.2h-1.2zM553.7,690.7h1.2v1.2h-1.2zM553.7,678.4h1.2v1.2h-1.2zM553.7,666.1h1.2v1.2h-1.2zM553.7,653.9h1.2v1.2h-1.2zM553.7,641.6h1.2v1.2h-1.2zM553.7,629.3h1.2v1.2h-1.2zM553.7,617.0h1.2v1.2h-1.2zM553.7,604.7h1.2v1.2h-1.2zM553.7,592.4h1.2v1.2h-1.2zM553.7,580.1h1.2v1.2h-1.2zM553.7,567.8h1.2v1.2h-1.2zM553.7,555.5h1.2v1.2h-1.2zM553.7,543.2h1.2v1.2h-1.2zM553.7,530.9h1.2v1.2h-1.2zM553.7,518.7h1.2v1.2h-1.2zM553.7,506.4h1.2v1.2h-1.2zM553.7,494.1h1.2v1.2h-1.2zM553.7,481.8h1.2v1.2h-1.2zM553.7,469.5h1.2v1.2h-1.2zM553.7,457.2h1.2v1.2h-1.2zM553.7,444.9h1.2v1.2h-1.2zM553.7,432.6h1.2v1.2h-1.2zM553.7,420.3h1.2v1.2h-1.2zM553.7,408.0h1.2v1.2h-1.2zM553.7,395.8h1.2v1.2h-1.2zM553.7,383.5h1.2v1.2h-1.2zM553.7,371.2h1.2v1.2h-1.2zM553.7,358.9h1.2v1.2h-1.2zM553.7,346.6h1.2v1.2h-1.2zM553.7,334.3h1.2v1.2h-1.2zM553.7,322.0h1.2v1.2h-1.2zM553.7,309.7h1.2v1.2h-1.2zM553.7,297.4h1.2v1.2h-1.2zM553.7,285.1h1.2v1.2h-1.2zM553.7,272.9h1.2v1.2h-1.2zM553.7,260.6h1.2v1.2h-1.2zM553.7,248.3h1.2v1.2h-1.2zM553.7,236.0h1.2v1.2h-1.2zM553.7,223.7h1.2v1.2h-1.2zM553.7,211.4h1.2v1.2h-1.2zM553.7,199.1h1.2v1.2h-1.2zM553.7,186.8h1.2v1.2h-1.2zM553.7,174.5h1.2v1.2h-1.2zM565.9,727.6h1.2v1.2h-1.2zM565.9,715.3h1.2v1.2h-1.2zM565.9,703.0h1.2v1.2h-1.2zM565.9,690.7h1.2v1.2h-1.2zM565.9,678.4h1.2v1.2h-1.2zM565.9,666.1h1.2v1.2h-1.2zM565.9,653.9h1.2v1.2h-1.2zM565.9,641.6h1.2v1.2h-1.2zM565.9,629.3h1.2v1.2h-1.2zM565.9,617.0h1.2v1.2h-1.2zM565.9,604.7h1.2v1.2h-1.2zM565.9,592.4h1.2v1.2h-1.2zM565.9,580.1h1.2v1.2h-1.2zM565.9,567.8h1.2v1.2h-1.2zM565.9,555.5h1.2v1.2h-1.2zM565.9,543.2h1.2v1.2h-1.2zM565.9,530.9h1.2v1.2h-1.2zM565.9,518.7h1.2v1.2h-1.2zM565.9,506.4h1.2v1.2h-1.2zM565.9,494.1h1.2v1.2h-1.2zM565.9,481.8h1.2v1.2h-1.2zM565.9,469.5h1.2v1.2h-1.2zM565.9,457.2h1.2v1.2h-1.2zM565.9,444.9h1.2v1.2h-1.2zM565.9,432.6h1.2v1.2h-1.2zM565.9,420.3h1.2v1.2h-1.2zM565.9,408.0h1.2v1.2h-1.2zM565.9,395.8h1.2v1.2h-1.2zM565.9,383.5h1.2v1.2h-1.2zM565.9,371.2h1.2v1.2h-1.2zM565.9,358.9h1.2v1.2h-1.2zM565.9,346.6h1.2v1.2h-1.2zM565.9,334.3h1.2v1.2h-1.2zM565.9,322.0h1.2v1.2h-1.2zM565.9,309.7h1.2v1.2h-1.2zM565.9,297.4h1.2v1.2h-1.2zM565.9,285.1h1.2v1.2h-1.2zM565.9,272.9h1.2v1.2h-1.2zM565.9,260.6h1.2v1.2h-1.2zM565.9,248.3h1.2v1.2h-1.2zM565.9,236.0h1.2v1.2h-1.2zM565.9,223.7h1.2v1.2h-1.2zM565.9,211.4h1.2v1.2h-1.2zM565.9,199.1h1.2v1.2h-1.2zM565.9,186.8h1.2v1.2h-1.2zM565.9,174.5h1.2v1.2h-1.2zM578.2,727.6h1.2v1.2h-1.2zM578.2,715.3h1.2v1.2h-1.2zM578.2,703.0h1.2v1.2h-1.2zM578.2,690.7h1.2v1.2h-1.2zM578.2,678.4h1.2v1.2h-1.2zM578.2,666.1h1.2v1.2h-1.2zM578.2,653.9h1.2v1.2h-1.2zM578.2,641.6h1.2v1.2h-1.2zM578.2,629.3h1.2v1.2h-1.2zM578.2,617.0h1.2v1.2h-1.2zM578.2,604.7h1.2v1.2h-1.2zM578.2,592.4h1.2v1.2h-1.2zM578.2,580.1h1.2v1.2h-1.2zM578.2,567.8h1.2v1.2h-1.2zM578.2,555.5h1.2v1.2h-1.2zM578.2,543.2h1.2v1.2h-1.2zM578.2,530.9h1.2v1.2h-1.2zM578.2,518.7h1.2v1.2h-1.2zM578.2,506.4h1.2v1.2h-1.2zM578.2,494.1h1.2v1.2h-1.2zM578.2,481.8h1.2v1.2h-1.2zM578.2,469.5h1.2v1.2h-1.2zM578.2,457.2h1.2v1.2h-1.2zM578.2,444.9h1.2v1.2h-1.2zM578.2,432.6h1.2v1.2h-1.2zM578.2,420.3h1.2v1.2h-1.2zM578.2,408.0h1.2v1.2h-1.2zM578.2,395.8h1.2v1.2h-1.2zM578.2,383.5h1.2v1.2h-1.2zM578.2,371.2h1.2v1.2h-1.2zM578.2,358.9h1.2v1.2h-1.2zM578.2,346.6h1.2v1.2h-1.2zM578.2,334.3h1.2v1.2h-1.2zM578.2,322.0h1.2v1.2h-1.2zM578.2,309.7h1.2v1.2h-1.2zM578.2,297.4h1.2v1.2h-1.2zM578.2,285.1h1.2v1.2h-1.2zM578.2,272.9h1.2v1.2h-1.2zM578.2,260.6h1.2v1.2h-1.2zM578.2,248.3h1.2v1.2h-1.2zM578.2,236.0h1.2v1.2h-1.2zM578.2,223.7h1.2v1.2h-1.2zM578.2,211.4h1.2v1.2h-1.2zM578.2,199.1h1.2v1.2h-1.2zM578.2,186.8h1.2v1.2h-1.2zM578.2,174.5h1.2v1.2h-1.2zM590.5,727.6h1.2v1.2h-1.2zM590.5,715.3h1.2v1.2h-1.2zM590.5,703.0h1.2v1.2h-1.2zM590.5,690.7h1.2v1.2h-1.2zM590.5,678.4h1.2v1.2h-1.2zM590.5,666.1h1.2v1.2h-1.2zM590.5,653.9h1.2v1.2h-1.2zM590.5,641.6h1.2v1.2h-1.2zM590.5,629.3h1.2v1.2h-1.2zM590.5,617.0h1.2v1.2h-1.2zM590.5,604.7h1.2v1.2h-1.2zM590.5,592.4h1.2v1.2h-1.2zM590.5,580.1h1.2v1.2h-1.2zM590.5,567.8h1.2v1.2h-1.2zM590.5,555.5h1.2v1.2h-1.2zM590.5,543.2h1.2v1.2h-1.2zM590.5,530.9h1.2v1.2h-1.2zM590.5,518.7h1.2v1.2h-1.2zM590.5,506.4h1.2v1.2h-1.2zM590.5,494.1h1.2v1.2h-1.2zM590.5,481.8h1.2v1.2h-1.2zM590.5,469.5h1.2v1.2h-1.2zM590.5,457.2h1.2v1.2h-1.2zM590.5,444.9h1.2v1.2h-1.2zM590.5,432.6h1.2v1.2h-1.2zM590.5,420.3h1.2v1.2h-1.2zM590.5,408.0h1.2v1.2h-1.2zM590.5,395.8h1.2v1.2h-1.2zM590.5,383.5h1.2v1.2h-1.2zM590.5,371.2h1.2v1.2h-1.2zM590.5,358.9h1.2v1.2h-1.2zM590.5,346.6h1.2v1.2h-1.2zM590.5,334.3h1.2v1.2h-1.2zM590.5,322.0h1.2v1.2h-1.2zM590.5,309.7h1.2v1.2h-1.2zM590.5,297.4h1.2v1.2h-1.2zM590.5,285.1h1.2v1.2h-1.2zM590.5,272.9h1.2v1.2h-1.2zM590.5,260.6h1.2v1.2h-1.2zM590.5,248.3h1.2v1.2h-1.2zM590.5,236.0h1.2v1.2h-1.2zM590.5,223.7h1.2v1.2h-1.2zM590.5,211.4h1.2v1.2h-1.2zM590.5,199.1h1.2v1.2h-1.2zM590.5,186.8h1.2v1.2h-1.2zM590.5,174.5h1.2v1.2h-1.2zM602.8,727.6h1.2v1.2h-1.2zM602.8,715.3h1.2v1.2h-1.2zM602.8,703.0h1.2v1.2h-1.2zM602.8,690.7h1.2v1.2h-1.2zM602.8,678.4h1.2v1.2h-1.2zM602.8,666.1h1.2v1.2h-1.2zM602.8,653.9h1.2v1.2h-1.2zM602.8,641.6h1.2v1.2h-1.2zM602.8,629.3h1.2v1.2h-1.2zM602.8,617.0h1.2v1.2h-1.2zM602.8,604.7h1.2v1.2h-1.2zM602.8,592.4h1.2v1.2h-1.2zM602.8,580.1h1.2v1.2h-1.2zM602.8,567.8h1.2v1.2h-1.2zM602.8,555.5h1.2v1.2h-1.2zM602.8,543.2h1.2v1.2h-1.2zM602.8,530.9h1.2v1.2h-1.2zM602.8,518.7h1.2v1.2h-1.2zM602.8,506.4h1.2v1.2h-1.2zM602.8,494.1h1.2v1.2h-1.2zM602.8,481.8h1.2v1.2h-1.2zM602.8,469.5h1.2v1.2h-1.2zM602.8,457.2h1.2v1.2h-1.2zM602.8,444.9h1.2v1.2h-1.2zM602.8,432.6h1.2v1.2h-1.2zM602.8,420.3h1.2v1.2h-1.2zM602.8,408.0h1.2v1.2h-1.2zM602.8,395.8h1.2v1.2h-1.2zM602.8,383.5h1.2v1.2h-1.2zM602.8,371.2h1.2v1.2h-1.2zM602.8,358.9h1.2v1.2h-1.2zM602.8,346.6h1.2v1.2h-1.2zM602.8,334.3h1.2v1.2h-1.2zM602.8,322.0h1.2v1.2h-1.2zM602.8,309.7h1.2v1.2h-1.2zM602.8,297.4h1.2v1.2h-1.2zM602.8,285.1h1.2v1.2h-1.2zM602.8,272.9h1.2v1.2h-1.2zM602.8,260.6h1.2v1.2h-1.2zM602.8,248.3h1.2v1.2h-1.2zM602.8,236.0h1.2v1.2h-1.2zM602.8,223.7h1.2v1.2h-1.2zM602.8,211.4h1.2v1.2h-1.2zM602.8,199.1h1.2v1.2h-1.2zM602.8,186.8h1.2v1.2h-1.2zM602.8,174.5h1.2v1.2h-1.2zM615.1,727.6h1.2v1.2h-1.2zM615.1,715.3h1.2v1.2h-1.2zM615.1,703.0h1.2v1.2h-1.2zM615.1,690.7h1.2v1.2h-1.2zM615.1,678.4h1.2v1.2h-1.2zM615.1,666.1h1.2v1.2h-1.2zM615.1,653.9h1.2v1.2h-1.2zM615.1,641.6h1.2v1.2h-1.2zM615.1,629.3h1.2v1.2h-1.2zM615.1,617.0h1.2v1.2h-1.2zM615.1,604.7h1.2v1.2h-1.2zM615.1,592.4h1.2v1.2h-1.2zM615.1,580.1h1.2v1.2h-1.2zM615.1,567.8h1.2v1.2h-1.2zM615.1,555.5h1.2v1.2h-1.2zM615.1,543.2h1.2v1.2h-1.2zM615.1,530.9h1.2v1.2h-1.2zM615.1,518.7h1.2v1.2h-1.2zM615.1,506.4h1.2v1.2h-1.2zM615.1,494.1h1.2v1.2h-1.2zM615.1,481.8h1.2v1.2h-1.2zM615.1,469.5h1.2v1.2h-1.2zM615.1,457.2h1.2v1.2h-1.2zM615.1,444.9h1.2v1.2h-1.2zM615.1,432.6h1.2v1.2h-1.2zM615.1,420.3h1.2v1.2h-1.2zM615.1,408.0h1.2v1.2h-1.2zM615.1,395.8h1.2v1.2h-1.2zM615.1,383.5h1.2v1.2h-1.2zM615.1,371.2h1.2v1.2h-1.2zM615.1,358.9h1.2v1.2h-1.2zM615.1,346.6h1.2v1.2h-1.2zM615.1,334.3h1.2v1.2h-1.2zM615.1,322.0h1.2v1.2h-1.2zM615.1,309.7h1.2v1.2h-1.2zM615.1,297.4h1.2v1.2h-1.2zM615.1,285.1h1.2v1.2h-1.2zM615.1,272.9h1.2v1.2h-1.2zM615.1,260.6h1.2v1.2h-1.2zM615.1,248.3h1.2v1.2h-1.2zM615.1,236.0h1.2v1.2h-1.2zM615.1,223.7h1.2v1.2h-1.2zM615.1,211.4h1.2v1.2h-1.2zM615.1,199.1h1.2v1.2h-1.2zM615.1,186.8h1.2v1.2h-1.2zM615.1,174.5h1.2v1.2h-1.2zM627.4,727.6h1.2v1.2h-1.2zM627.4,715.3h1.2v1.2h-1.2zM627.4,703.0h1.2v1.2h-1.2zM627.4,690.7h1.2v1.2h-1.2zM627.4,678.4h1.2v1.2h-1.2zM627.4,666.1h1.2v1.2h-1.2zM627.4,653.9h1.2v1.2h-1.2zM627.4,641.6h1.2v1.2h-1.2zM627.4,629.3h1.2v1.2h-1.2zM627.4,617.0h1.2v1.2h-1.2zM627.4,604.7h1.2v1.2h-1.2zM627.4,592.4h1.2v1.2h-1.2zM627.4,580.1h1.2v1.2h-1.2zM627.4,567.8h1.2v1.2h-1.2zM627.4,555.5h1.2v1.2h-1.2zM627.4,543.2h1.2v1.2h-1.2zM627.4,530.9h1.2v1.2h-1.2zM627.4,518.7h1.2v1.2h-1.2zM627.4,506.4h1.2v1.2h-1.2zM627.4,494.1h1.2v1.2h-1.2zM627.4,481.8h1.2v1.2h-1.2zM627.4,469.5h1.2v1.2h-1.2zM627.4,457.2h1.2v1.2h-1.2zM627.4,444.9h1.2v1.2h-1.2zM627.4,432.6h1.2v1.2h-1.2zM627.4,420.3h1.2v1.2h-1.2zM627.4,408.0h1.2v1.2h-1.2zM627.4,395.8h1.2v1.2h-1.2zM627.4,383.5h1.2v1.2h-1.2zM627.4,371.2h1.2v1.2h-1.2zM627.4,358.9h1.2v1.2h-1.2zM627.4,346.6h1.2v1.2h-1.2zM627.4,334.3h1.2v1.2h-1.2zM627.4,322.0h1.2v1.2h-1.2zM627.4,309.7h1.2v1.2h-1.2zM627.4,297.4h1.2v1.2h-1.2zM627.4,285.1h1.2v1.2h-1.2zM627.4,272.9h1.2v1.2h-1.2zM627.4,260.6h1.2v1.2h-1.2zM627.4,248.3h1.2v1.2h-1.2zM627.4,236.0h1.2v1.2h-1.2zM627.4,223.7h1.2v1.2h-1.2zM627.4,211.4h1.2v1.2h-1.2zM627.4,199.1h1.2v1.2h-1.2zM627.4,186.8h1.2v1.2h-1.2zM627.4,174.5h1.2v1.2h-1.2zM639.7,727.6h1.2v1.2h-1.2zM639.7,715.3h1.2v1.2h-1.2zM639.7,703.0h1.2v1.2h-1.2zM639.7,690.7h1.2v1.2h-1.2zM639.7,678.4h1.2v1.2h-1.2zM639.7,666.1h1.2v1.2h-1.2zM639.7,653.9h1.2v1.2h-1.2zM639.7,641.6h1.2v1.2h-1.2zM639.7,629.3h1.2v1.2h-1.2zM639.7,617.0h1.2v1.2h-1.2zM639.7,604.7h1.2v1.2h-1.2zM639.7,592.4h1.2v1.2h-1.2zM639.7,580.1h1.2v1.2h-1.2zM639.7,567.8h1.2v1.2h-1.2zM639.7,555.5h1.2v1.2h-1.2zM639.7,543.2h1.2v1.2h-1.2zM639.7,530.9h1.2v1.2h-1.2zM639.7,518.7h1.2v1.2h-1.2zM639.7,506.4h1.2v1.2h-1.2zM639.7,494.1h1.2v1.2h-1.2zM639.7,481.8h1.2v1.2h-1.2zM639.7,469.5h1.2v1.2h-1.2zM639.7,457.2h1.2v1.2h-1.2zM639.7,444.9h1.2v1.2h-1.2zM639.7,432.6h1.2v1.2h-1.2zM639.7,420.3h1.2v1.2h-1.2zM639.7,408.0h1.2v1.2h-1.2zM639.7,395.8h1.2v1.2h-1.2zM639.7,383.5h1.2v1.2h-1.2zM639.7,371.2h1.2v1.2h-1.2zM639.7,358.9h1.2v1.2h-1.2zM639.7,346.6h1.2v1.2h-1.2zM639.7,334.3h1.2v1.2h-1.2zM639.7,322.0h1.2v1.2h-1.2zM639.7,309.7h1.2v1.2h-1.2zM639.7,297.4h1.2v1.2h-1.2zM639.7,285.1h1.2v1.2h-1.2zM639.7,272.9h1.2v1.2h-1.2zM639.7,260.6h1.2v1.2h-1.2zM639.7,248.3h1.2v1.2h-1.2zM639.7,236.0h1.2v1.2h-1.2zM639.7,223.7h1.2v1.2h-1.2zM639.7,211.4h1.2v1.2h-1.2zM639.7,199.1h1.2v1.2h-1.2zM639.7,186.8h1.2v1.2h-1.2zM639.7,174.5h1.2v1.2h-1.2zM652.0,727.6h1.2v1.2h-1.2zM652.0,715.3h1.2v1.2h-1.2zM652.0,703.0h1.2v1.2h-1.2zM652.0,690.7h1.2v1.2h-1.2zM652.0,678.4h1.2v1.2h-1.2zM652.0,666.1h1.2v1.2h-1.2zM652.0,653.9h1.2v1.2h-1.2zM652.0,641.6h1.2v1.2h-1.2zM652.0,629.3h1.2v1.2h-1.2zM652.0,617.0h1.2v1.2h-1.2zM652.0,604.7h1.2v1.2h-1.2zM652.0,592.4h1.2v1.2h-1.2zM652.0,580.1h1.2v1.2h-1.2zM652.0,567.8h1.2v1.2h-1.2zM652.0,555.5h1.2v1.2h-1.2zM652.0,543.2h1.2v1.2h-1.2zM652.0,530.9h1.2v1.2h-1.2zM652.0,518.7h1.2v1.2h-1.2zM652.0,506.4h1.2v1.2h-1.2zM652.0,494.1h1.2v1.2h-1.2zM652.0,481.8h1.2v1.2h-1.2zM652.0,469.5h1.2v1.2h-1.2zM652.0,457.2h1.2v1.2h-1.2zM652.0,444.9h1.2v1.2h-1.2zM652.0,432.6h1.2v1.2h-1.2zM652.0,420.3h1.2v1.2h-1.2zM652.0,408.0h1.2v1.2h-1.2zM652.0,395.8h1.2v1.2h-1.2zM652.0,383.5h1.2v1.2h-1.2zM652.0,371.2h1.2v1.2h-1.2zM652.0,358.9h1.2v1.2h-1.2zM652.0,346.6h1.2v1.2h-1.2zM652.0,334.3h1.2v1.2h-1.2zM652.0,322.0h1.2v1.2h-1.2zM652.0,309.7h1.2v1.2h-1.2zM652.0,297.4h1.2v1.2h-1.2zM652.0,285.1h1.2v1.2h-1.2zM652.0,272.9h1.2v1.2h-1.2zM652.0,260.6h1.2v1.2h-1.2zM652.0,248.3h1.2v1.2h-1.2zM652.0,236.0h1.2v1.2h-1.2zM652.0,223.7h1.2v1.2h-1.2zM652.0,211.4h1.2v1.2h-1.2zM652.0,199.1h1.2v1.2h-1.2zM652.0,186.8h1.2v1.2h-1.2zM652.0,174.5h1.2v1.2h-1.2zM664.3,727.6h1.2v1.2h-1.2zM664.3,715.3h1.2v1.2h-1.2zM664.3,703.0h1.2v1.2h-1.2zM664.3,690.7h1.2v1.2h-1.2zM664.3,678.4h1.2v1.2h-1.2zM664.3,666.1h1.2v1.2h-1.2zM664.3,653.9h1.2v1.2h-1.2zM664.3,641.6h1.2v1.2h-1.2zM664.3,629.3h1.2v1.2h-1.2zM664.3,617.0h1.2v1.2h-1.2zM664.3,604.7h1.2v1.2h-1.2zM664.3,592.4h1.2v1.2h-1.2zM664.3,580.1h1.2v1.2h-1.2zM664.3,567.8h1.2v1.2h-1.2zM664.3,555.5h1.2v1.2h-1.2zM664.3,543.2h1.2v1.2h-1.2zM664.3,530.9h1.2v1.2h-1.2zM664.3,518.7h1.2v1.2h-1.2zM664.3,506.4h1.2v1.2h-1.2zM664.3,494.1h1.2v1.2h-1.2zM664.3,481.8h1.2v1.2h-1.2zM664.3,469.5h1.2v1.2h-1.2zM664.3,457.2h1.2v1.2h-1.2zM664.3,444.9h1.2v1.2h-1.2zM664.3,432.6h1.2v1.2h-1.2zM664.3,420.3h1.2v1.2h-1.2zM664.3,408.0h1.2v1.2h-1.2zM664.3,395.8h1.2v1.2h-1.2zM664.3,383.5h1.2v1.2h-1.2zM664.3,371.2h1.2v1.2h-1.2zM664.3,358.9h1.2v1.2h-1.2zM664.3,346.6h1.2v1.2h-1.2zM664.3,334.3h1.2v1.2h-1.2zM664.3,322.0h1.2v1.2h-1.2zM664.3,309.7h1.2v1.2h-1.2zM664.3,297.4h1.2v1.2h-1.2zM664.3,285.1h1.2v1.2h-1.2zM664.3,272.9h1.2v1.2h-1.2zM664.3,260.6h1.2v1.2h-1.2zM664.3,248.3h1.2v1.2h-1.2zM664.3,236.0h1.2v1.2h-1.2zM664.3,223.7h1.2v1.2h-1.2zM664.3,211.4h1.2v1.2h-1.2zM664.3,199.1h1.2v1.2h-1.2zM664.3,186.8h1.2v1.2h-1.2zM664.3,174.5h1.2v1.2h-1.2zM676.6,727.6h1.2v1.2h-1.2zM676.6,715.3h1.2v1.2h-1.2zM676.6,703.0h1.2v1.2h-1.2zM676.6,690.7h1.2v1.2h-1.2zM676.6,678.4h1.2v1.2h-1.2zM676.6,666.1h1.2v1.2h-1.2zM676.6,653.9h1.2v1.2h-1.2zM676.6,641.6h1.2v1.2h-1.2zM676.6,629.3h1.2v1.2h-1.2zM676.6,617.0h1.2v1.2h-1.2zM676.6,604.7h1.2v1.2h-1.2zM676.6,592.4h1.2v1.2h-1.2zM676.6,580.1h1.2v1.2h-1.2zM676.6,567.8h1.2v1.2h-1.2zM676.6,555.5h1.2v1.2h-1.2zM676.6,543.2h1.2v1.2h-1.2zM676.6,530.9h1.2v1.2h-1.2zM676.6,518.7h1.2v1.2h-1.2zM676.6,506.4h1.2v1.2h-1.2zM676.6,494.1h1.2v1.2h-1.2zM676.6,481.8h1.2v1.2h-1.2zM676.6,469.5h1.2v1.2h-1.2zM676.6,457.2h1.2v1.2h-1.2zM676.6,444.9h1.2v1.2h-1.2zM676.6,432.6h1.2v1.2h-1.2zM676.6,420.3h1.2v1.2h-1.2zM676.6,408.0h1.2v1.2h-1.2zM676.6,395.8h1.2v1.2h-1.2zM676.6,383.5h1.2v1.2h-1.2zM676.6,371.2h1.2v1.2h-1.2zM676.6,358.9h1.2v1.2h-1.2zM676.6,346.6h1.2v1.2h-1.2zM676.6,334.3h1.2v1.2h-1.2zM676.6,322.0h1.2v1.2h-1.2zM676.6,309.7h1.2v1.2h-1.2zM676.6,297.4h1.2v1.2h-1.2zM676.6,285.1h1.2v1.2h-1.2zM676.6,272.9h1.2v1.2h-1.2zM676.6,260.6h1.2v1.2h-1.2zM676.6,248.3h1.2v1.2h-1.2zM676.6,236.0h1.2v1.2h-1.2zM676.6,223.7h1.2v1.2h-1.2zM676.6,211.4h1.2v1.2h-1.2zM676.6,199.1h1.2v1.2h-1.2zM676.6,186.8h1.2v1.2h-1.2zM676.6,174.5h1.2v1.2h-1.2zM688.8,727.6h1.2v1.2h-1.2zM688.8,715.3h1.2v1.2h-1.2zM688.8,703.0h1.2v1.2h-1.2zM688.8,690.7h1.2v1.2h-1.2zM688.8,678.4h1.2v1.2h-1.2zM688.8,666.1h1.2v1.2h-1.2zM688.8,653.9h1.2v1.2h-1.2zM688.8,641.6h1.2v1.2h-1.2zM688.8,629.3h1.2v1.2h-1.2zM688.8,617.0h1.2v1.2h-1.2zM688.8,604.7h1.2v1.2h-1.2zM688.8,592.4h1.2v1.2h-1.2zM688.8,580.1h1.2v1.2h-1.2zM688.8,567.8h1.2v1.2h-1.2zM688.8,555.5h1.2v1.2h-1.2zM688.8,543.2h1.2v1.2h-1.2zM688.8,530.9h1.2v1.2h-1.2zM688.8,518.7h1.2v1.2h-1.2zM688.8,506.4h1.2v1.2h-1.2zM688.8,494.1h1.2v1.2h-1.2zM688.8,481.8h1.2v1.2h-1.2zM688.8,469.5h1.2v1.2h-1.2zM688.8,457.2h1.2v1.2h-1.2zM688.8,444.9h1.2v1.2h-1.2zM688.8,432.6h1.2v1.2h-1.2zM688.8,420.3h1.2v1.2h-1.2zM688.8,408.0h1.2v1.2h-1.2zM688.8,395.8h1.2v1.2h-1.2zM688.8,383.5h1.2v1.2h-1.2zM688.8,371.2h1.2v1.2h-1.2zM688.8,358.9h1.2v1.2h-1.2zM688.8,346.6h1.2v1.2h-1.2zM688.8,334.3h1.2v1.2h-1.2zM688.8,322.0h1.2v1.2h-1.2zM688.8,309.7h1.2v1.2h-1.2zM688.8,297.4h1.2v1.2h-1.2zM688.8,285.1h1.2v1.2h-1.2zM688.8,272.9h1.2v1.2h-1.2zM688.8,260.6h1.2v1.2h-1.2zM688.8,248.3h1.2v1.2h-1.2zM688.8,236.0h1.2v1.2h-1.2zM688.8,223.7h1.2v1.2h-1.2zM688.8,211.4h1.2v1.2h-1.2zM688.8,199.1h1.2v1.2h-1.2zM688.8,186.8h1.2v1.2h-1.2zM688.8,174.5h1.2v1.2h-1.2zM701.1,727.6h1.2v1.2h-1.2zM701.1,715.3h1.2v1.2h-1.2zM701.1,703.0h1.2v1.2h-1.2zM701.1,690.7h1.2v1.2h-1.2zM701.1,678.4h1.2v1.2h-1.2zM701.1,666.1h1.2v1.2h-1.2zM701.1,653.9h1.2v1.2h-1.2zM701.1,641.6h1.2v1.2h-1.2zM701.1,629.3h1.2v1.2h-1.2zM701.1,617.0h1.2v1.2h-1.2zM701.1,604.7h1.2v1.2h-1.2zM701.1,592.4h1.2v1.2h-1.2zM701.1,580.1h1.2v1.2h-1.2zM701.1,567.8h1.2v1.2h-1.2zM701.1,555.5h1.2v1.2h-1.2zM701.1,543.2h1.2v1.2h-1.2zM701.1,530.9h1.2v1.2h-1.2zM701.1,518.7h1.2v1.2h-1.2zM701.1,506.4h1.2v1.2h-1.2zM701.1,494.1h1.2v1.2h-1.2zM701.1,481.8h1.2v1.2h-1.2zM701.1,469.5h1.2v1.2h-1.2zM701.1,457.2h1.2v1.2h-1.2zM701.1,444.9h1.2v1.2h-1.2zM701.1,432.6h1.2v1.2h-1.2zM701.1,420.3h1.2v1.2h-1.2zM701.1,408.0h1.2v1.2h-1.2zM701.1,395.8h1.2v1.2h-1.2zM701.1,383.5h1.2v1.2h-1.2zM701.1,371.2h1.2v1.2h-1.2zM701.1,358.9h1.2v1.2h-1.2zM701.1,346.6h1.2v1.2h-1.2zM701.1,334.3h1.2v1.2h-1.2zM701.1,322.0h1.2v1.2h-1.2zM701.1,309.7h1.2v1.2h-1.2zM701.1,297.4h1.2v1.2h-1.2zM701.1,285.1h1.2v1.2h-1.2zM701.1,272.9h1.2v1.2h-1.2zM701.1,260.6h1.2v1.2h-1.2zM701.1,248.3h1.2v1.2h-1.2zM701.1,236.0h1.2v1.2h-1.2zM701.1,223.7h1.2v1.2h-1.2zM701.1,211.4h1.2v1.2h-1.2zM701.1,199.1h1.2v1.2h-1.2zM701.1,186.8h1.2v1.2h-1.2zM701.1,174.5h1.2v1.2h-1.2zM713.4,727.6h1.2v1.2h-1.2zM713.4,715.3h1.2v1.2h-1.2zM713.4,703.0h1.2v1.2h-1.2zM713.4,690.7h1.2v1.2h-1.2zM713.4,678.4h1.2v1.2h-1.2zM713.4,666.1h1.2v1.2h-1.2zM713.4,653.9h1.2v1.2h-1.2zM713.4,641.6h1.2v1.2h-1.2zM713.4,629.3h1.2v1.2h-1.2zM713.4,617.0h1.2v1.2h-1.2zM713.4,604.7h1.2v1.2h-1.2zM713.4,592.4h1.2v1.2h-1.2zM713.4,580.1h1.2v1.2h-1.2zM713.4,567.8h1.2v1.2h-1.2zM713.4,555.5h1.2v1.2h-1.2zM713.4,543.2h1.2v1.2h-1.2zM713.4,530.9h1.2v1.2h-1.2zM713.4,518.7h1.2v1.2h-1.2zM713.4,506.4h1.2v1.2h-1.2zM713.4,494.1h1.2v1.2h-1.2zM713.4,481.8h1.2v1.2h-1.2zM713.4,469.5h1.2v1.2h-1.2zM713.4,457.2h1.2v1.2h-1.2zM713.4,444.9h1.2v1.2h-1.2zM713.4,432.6h1.2v1.2h-1.2zM713.4,420.3h1.2v1.2h-1.2zM713.4,408.0h1.2v1.2h-1.2zM713.4,395.8h1.2v1.2h-1.2zM713.4,383.5h1.2v1.2h-1.2zM713.4,371.2h1.2v1.2h-1.2zM713.4,358.9h1.2v1.2h-1.2zM713.4,346.6h1.2v1.2h-1.2zM713.4,334.3h1.2v1.2h-1.2zM713.4,322.0h1.2v1.2h-1.2zM713.4,309.7h1.2v1.2h-1.2zM713.4,297.4h1.2v1.2h-1.2zM713.4,285.1h1.2v1.2h-1.2zM713.4,272.9h1.2v1.2h-1.2zM713.4,260.6h1.2v1.2h-1.2zM713.4,248.3h1.2v1.2h-1.2zM713.4,236.0h1.2v1.2h-1.2zM713.4,223.7h1.2v1.2h-1.2zM713.4,211.4h1.2v1.2h-1.2zM713.4,199.1h1.2v1.2h-1.2zM713.4,186.8h1.2v1.2h-1.2zM713.4,174.5h1.2v1.2h-1.2zM725.7,727.6h1.2v1.2h-1.2zM725.7,715.3h1.2v1.2h-1.2zM725.7,703.0h1.2v1.2h-1.2zM725.7,690.7h1.2v1.2h-1.2zM725.7,678.4h1.2v1.2h-1.2zM725.7,666.1h1.2v1.2h-1.2zM725.7,653.9h1.2v1.2h-1.2zM725.7,641.6h1.2v1.2h-1.2zM725.7,629.3h1.2v1.2h-1.2zM725.7,617.0h1.2v1.2h-1.2zM725.7,604.7h1.2v1.2h-1.2zM725.7,592.4h1.2v1.2h-1.2zM725.7,580.1h1.2v1.2h-1.2zM725.7,567.8h1.2v1.2h-1.2zM725.7,555.5h1.2v1.2h-1.2zM725.7,543.2h1.2v1.2h-1.2zM725.7,530.9h1.2v1.2h-1.2zM725.7,518.7h1.2v1.2h-1.2zM725.7,506.4h1.2v1.2h-1.2zM725.7,494.1h1.2v1.2h-1.2zM725.7,481.8h1.2v1.2h-1.2zM725.7,469.5h1.2v1.2h-1.2zM725.7,457.2h1.2v1.2h-1.2zM725.7,444.9h1.2v1.2h-1.2zM725.7,432.6h1.2v1.2h-1.2zM725.7,420.3h1.2v1.2h-1.2zM725.7,408.0h1.2v1.2h-1.2zM725.7,395.8h1.2v1.2h-1.2zM725.7,383.5h1.2v1.2h-1.2zM725.7,371.2h1.2v1.2h-1.2zM725.7,358.9h1.2v1.2h-1.2zM725.7,346.6h1.2v1.2h-1.2zM725.7,334.3h1.2v1.2h-1.2zM725.7,322.0h1.2v1.2h-1.2zM725.7,309.7h1.2v1.2h-1.2zM725.7,297.4h1.2v1.2h-1.2zM725.7,285.1h1.2v1.2h-1.2zM725.7,272.9h1.2v1.2h-1.2zM725.7,260.6h1.2v1.2h-1.2zM725.7,248.3h1.2v1.2h-1.2zM725.7,236.0h1.2v1.2h-1.2zM725.7,223.7h1.2v1.2h-1.2zM725.7,211.4h1.2v1.2h-1.2zM725.7,199.1h1.2v1.2h-1.2zM725.7,186.8h1.2v1.2h-1.2zM725.7,174.5h1.2v1.2h-1.2zM738.0,727.6h1.2v1.2h-1.2zM738.0,715.3h1.2v1.2h-1.2zM738.0,703.0h1.2v1.2h-1.2zM738.0,690.7h1.2v1.2h-1.2zM738.0,678.4h1.2v1.2h-1.2zM738.0,666.1h1.2v1.2h-1.2zM738.0,653.9h1.2v1.2h-1.2zM738.0,641.6h1.2v1.2h-1.2zM738.0,629.3h1.2v1.2h-1.2zM738.0,617.0h1.2v1.2h-1.2zM738.0,604.7h1.2v1.2h-1.2zM738.0,592.4h1.2v1.2h-1.2zM738.0,580.1h1.2v1.2h-1.2zM738.0,567.8h1.2v1.2h-1.2zM738.0,555.5h1.2v1.2h-1.2zM738.0,543.2h1.2v1.2h-1.2zM738.0,530.9h1.2v1.2h-1.2zM738.0,518.7h1.2v1.2h-1.2zM738.0,506.4h1.2v1.2h-1.2zM738.0,494.1h1.2v1.2h-1.2zM738.0,481.8h1.2v1.2h-1.2zM738.0,469.5h1.2v1.2h-1.2zM738.0,457.2h1.2v1.2h-1.2zM738.0,444.9h1.2v1.2h-1.2zM738.0,432.6h1.2v1.2h-1.2zM738.0,420.3h1.2v1.2h-1.2zM738.0,408.0h1.2v1.2h-1.2zM738.0,395.8h1.2v1.2h-1.2zM738.0,383.5h1.2v1.2h-1.2zM738.0,371.2h1.2v1.2h-1.2zM738.0,358.9h1.2v1.2h-1.2zM738.0,346.6h1.2v1.2h-1.2zM738.0,334.3h1.2v1.2h-1.2zM738.0,322.0h1.2v1.2h-1.2zM738.0,309.7h1.2v1.2h-1.2zM738.0,297.4h1.2v1.2h-1.2zM738.0,285.1h1.2v1.2h-1.2zM738.0,272.9h1.2v1.2h-1.2zM738.0,260.6h1.2v1.2h-1.2zM738.0,248.3h1.2v1.2h-1.2zM738.0,236.0h1.2v1.2h-1.2zM738.0,223.7h1.2v1.2h-1.2zM738.0,211.4h1.2v1.2h-1.2zM738.0,199.1h1.2v1.2h-1.2zM738.0,186.8h1.2v1.2h-1.2zM738.0,174.5h1.2v1.2h-1.2zM750.3,727.6h1.2v1.2h-1.2zM750.3,715.3h1.2v1.2h-1.2zM750.3,703.0h1.2v1.2h-1.2zM750.3,690.7h1.2v1.2h-1.2zM750.3,678.4h1.2v1.2h-1.2zM750.3,666.1h1.2v1.2h-1.2zM750.3,653.9h1.2v1.2h-1.2zM750.3,641.6h1.2v1.2h-1.2zM750.3,629.3h1.2v1.2h-1.2zM750.3,617.0h1.2v1.2h-1.2zM750.3,604.7h1.2v1.2h-1.2zM750.3,592.4h1.2v1.2h-1.2zM750.3,580.1h1.2v1.2h-1.2zM750.3,567.8h1.2v1.2h-1.2zM750.3,555.5h1.2v1.2h-1.2zM750.3,543.2h1.2v1.2h-1.2zM750.3,530.9h1.2v1.2h-1.2zM750.3,518.7h1.2v1.2h-1.2zM750.3,506.4h1.2v1.2h-1.2zM750.3,494.1h1.2v1.2h-1.2zM750.3,481.8h1.2v1.2h-1.2zM750.3,469.5h1.2v1.2h-1.2zM750.3,457.2h1.2v1.2h-1.2zM750.3,444.9h1.2v1.2h-1.2zM750.3,432.6h1.2v1.2h-1.2zM750.3,420.3h1.2v1.2h-1.2zM750.3,408.0h1.2v1.2h-1.2zM750.3,395.8h1.2v1.2h-1.2zM750.3,383.5h1.2v1.2h-1.2zM750.3,371.2h1.2v1.2h-1.2zM750.3,358.9h1.2v1.2h-1.2zM750.3,346.6h1.2v1.2h-1.2zM750.3,334.3h1.2v1.2h-1.2zM750.3,322.0h1.2v1.2h-1.2zM750.3,309.7h1.2v1.2h-1.2zM750.3,297.4h1.2v1.2h-1.2zM750.3,285.1h1.2v1.2h-1.2zM750.3,272.9h1.2v1.2h-1.2zM750.3,260.6h1.2v1.2h-1.2zM750.3,248.3h1.2v1.2h-1.2zM750.3,236.0h1.2v1.2h-1.2zM750.3,223.7h1.2v1.2h-1.2zM750.3,211.4h1.2v1.2h-1.2zM750.3,199.1h1.2v1.2h-1.2zM750.3,186.8h1.2v1.2h-1.2zM750.3,174.5h1.2v1.2h-1.2zM762.6,727.6h1.2v1.2h-1.2zM762.6,715.3h1.2v1.2h-1.2zM762.6,703.0h1.2v1.2h-1.2zM762.6,690.7h1.2v1.2h-1.2zM762.6,678.4h1.2v1.2h-1.2zM762.6,666.1h1.2v1.2h-1.2zM762.6,653.9h1.2v1.2h-1.2zM762.6,641.6h1.2v1.2h-1.2zM762.6,629.3h1.2v1.2h-1.2zM762.6,617.0h1.2v1.2h-1.2zM762.6,604.7h1.2v1.2h-1.2zM762.6,592.4h1.2v1.2h-1.2zM762.6,580.1h1.2v1.2h-1.2zM762.6,567.8h1.2v1.2h-1.2zM762.6,555.5h1.2v1.2h-1.2zM762.6,543.2h1.2v1.2h-1.2zM762.6,530.9h1.2v1.2h-1.2zM762.6,518.7h1.2v1.2h-1.2zM762.6,506.4h1.2v1.2h-1.2zM762.6,494.1h1.2v1.2h-1.2zM762.6,481.8h1.2v1.2h-1.2zM762.6,469.5h1.2v1.2h-1.2zM762.6,457.2h1.2v1.2h-1.2zM762.6,444.9h1.2v1.2h-1.2zM762.6,432.6h1.2v1.2h-1.2zM762.6,420.3h1.2v1.2h-1.2zM762.6,408.0h1.2v1.2h-1.2zM762.6,395.8h1.2v1.2h-1.2zM762.6,383.5h1.2v1.2h-1.2zM762.6,371.2h1.2v1.2h-1.2zM762.6,358.9h1.2v1.2h-1.2zM762.6,346.6h1.2v1.2h-1.2zM762.6,334.3h1.2v1.2h-1.2zM762.6,322.0h1.2v1.2h-1.2zM762.6,309.7h1.2v1.2h-1.2zM762.6,297.4h1.2v1.2h-1.2zM762.6,285.1h1.2v1.2h-1.2zM762.6,272.9h1.2v1.2h-1.2zM762.6,260.6h1.2v1.2h-1.2zM762.6,248.3h1.2v1.2h-1.2zM762.6,236.0h1.2v1.2h-1.2zM762.6,223.7h1.2v1.2h-1.2zM762.6,211.4h1.2v1.2h-1.2zM762.6,199.1h1.2v1.2h-1.2zM762.6,186.8h1.2v1.2h-1.2zM762.6,174.5h1.2v1.2h-1.2zM774.9,727.6h1.2v1.2h-1.2zM774.9,715.3h1.2v1.2h-1.2zM774.9,703.0h1.2v1.2h-1.2zM774.9,690.7h1.2v1.2h-1.2zM774.9,678.4h1.2v1.2h-1.2zM774.9,666.1h1.2v1.2h-1.2zM774.9,653.9h1.2v1.2h-1.2zM774.9,641.6h1.2v1.2h-1.2zM774.9,629.3h1.2v1.2h-1.2zM774.9,617.0h1.2v1.2h-1.2zM774.9,604.7h1.2v1.2h-1.2zM774.9,592.4h1.2v1.2h-1.2zM774.9,580.1h1.2v1.2h-1.2zM774.9,567.8h1.2v1.2h-1.2zM774.9,555.5h1.2v1.2h-1.2zM774.9,543.2h1.2v1.2h-1.2zM774.9,530.9h1.2v1.2h-1.2zM774.9,518.7h1.2v1.2h-1.2zM774.9,506.4h1.2v1.2h-1.2zM774.9,494.1h1.2v1.2h-1.2zM774.9,481.8h1.2v1.2h-1.2zM774.9,469.5h1.2v1.2h-1.2zM774.9,457.2h1.2v1.2h-1.2zM774.9,444.9h1.2v1.2h-1.2zM774.9,432.6h1.2v1.2h-1.2zM774.9,420.3h1.2v1.2h-1.2zM774.9,408.0h1.2v1.2h-1.2zM774.9,395.8h1.2v1.2h-1.2zM774.9,383.5h1.2v1.2h-1.2zM774.9,371.2h1.2v1.2h-1.2zM774.9,358.9h1.2v1.2h-1.2zM774.9,346.6h1.2v1.2h-1.2zM774.9,334.3h1.2v1.2h-1.2zM774.9,322.0h1.2v1.2h-1.2zM774.9,309.7h1.2v1.2h-1.2zM774.9,297.4h1.2v1.2h-1.2zM774.9,285.1h1.2v1.2h-1.2zM774.9,272.9h1.2v1.2h-1.2zM774.9,260.6h1.2v1.2h-1.2zM774.9,248.3h1.2v1.2h-1.2zM774.9,236.0h1.2v1.2h-1.2zM774.9,223.7h1.2v1.2h-1.2zM774.9,211.4h1.2v1.2h-1.2zM774.9,199.1h1.2v1.2h-1.2zM774.9,186.8h1.2v1.2h-1.2zM774.9,174.5h1.2v1.2h-1.2zM787.2,727.6h1.2v1.2h-1.2zM787.2,715.3h1.2v1.2h-1.2zM787.2,703.0h1.2v1.2h-1.2zM787.2,690.7h1.2v1.2h-1.2zM787.2,678.4h1.2v1.2h-1.2zM787.2,666.1h1.2v1.2h-1.2zM787.2,653.9h1.2v1.2h-1.2zM787.2,641.6h1.2v1.2h-1.2zM787.2,629.3h1.2v1.2h-1.2zM787.2,617.0h1.2v1.2h-1.2zM787.2,604.7h1.2v1.2h-1.2zM787.2,592.4h1.2v1.2h-1.2zM787.2,580.1h1.2v1.2h-1.2zM787.2,567.8h1.2v1.2h-1.2zM787.2,555.5h1.2v1.2h-1.2zM787.2,543.2h1.2v1.2h-1.2zM787.2,530.9h1.2v1.2h-1.2zM787.2,518.7h1.2v1.2h-1.2zM787.2,506.4h1.2v1.2h-1.2zM787.2,494.1h1.2v1.2h-1.2zM787.2,481.8h1.2v1.2h-1.2zM787.2,469.5h1.2v1.2h-1.2zM787.2,457.2h1.2v1.2h-1.2zM787.2,444.9h1.2v1.2h-1.2zM787.2,432.6h1.2v1.2h-1.2zM787.2,420.3h1.2v1.2h-1.2zM787.2,408.0h1.2v1.2h-1.2zM787.2,395.8h1.2v1.2h-1.2zM787.2,383.5h1.2v1.2h-1.2zM787.2,371.2h1.2v1.2h-1.2zM787.2,358.9h1.2v1.2h-1.2zM787.2,346.6h1.2v1.2h-1.2zM787.2,334.3h1.2v1.2h-1.2zM787.2,322.0h1.2v1.2h-1.2zM787.2,309.7h1.2v1.2h-1.2zM787.2,297.4h1.2v1.2h-1.2zM787.2,285.1h1.2v1.2h-1.2zM787.2,272.9h1.2v1.2h-1.2zM787.2,260.6h1.2v1.2h-1.2zM787.2,248.3h1.2v1.2h-1.2zM787.2,236.0h1.2v1.2h-1.2zM787.2,223.7h1.2v1.2h-1.2zM787.2,211.4h1.2v1.2h-1.2zM787.2,199.1h1.2v1.2h-1.2zM787.2,186.8h1.2v1.2h-1.2zM787.2,174.5h1.2v1.2h-1.2zM799.5,727.6h1.2v1.2h-1.2zM799.5,715.3h1.2v1.2h-1.2zM799.5,703.0h1.2v1.2h-1.2zM799.5,690.7h1.2v1.2h-1.2zM799.5,678.4h1.2v1.2h-1.2zM799.5,666.1h1.2v1.2h-1.2zM799.5,653.9h1.2v1.2h-1.2zM799.5,641.6h1.2v1.2h-1.2zM799.5,629.3h1.2v1.2h-1.2zM799.5,617.0h1.2v1.2h-1.2zM799.5,604.7h1.2v1.2h-1.2zM799.5,592.4h1.2v1.2h-1.2zM799.5,580.1h1.2v1.2h-1.2zM799.5,567.8h1.2v1.2h-1.2zM799.5,555.5h1.2v1.2h-1.2zM799.5,543.2h1.2v1.2h-1.2zM799.5,530.9h1.2v1.2h-1.2zM799.5,518.7h1.2v1.2h-1.2zM799.5,506.4h1.2v1.2h-1.2zM799.5,494.1h1.2v1.2h-1.2zM799.5,481.8h1.2v1.2h-1.2zM799.5,469.5h1.2v1.2h-1.2zM799.5,457.2h1.2v1.2h-1.2zM799.5,444.9h1.2v1.2h-1.2zM799.5,432.6h1.2v1.2h-1.2zM799.5,420.3h1.2v1.2h-1.2zM799.5,408.0h1.2v1.2h-1.2zM799.5,395.8h1.2v1.2h-1.2zM799.5,383.5h1.2v1.2h-1.2zM799.5,371.2h1.2v1.2h-1.2zM799.5,358.9h1.2v1.2h-1.2zM799.5,346.6h1.2v1.2h-1.2zM799.5,334.3h1.2v1.2h-1.2zM799.5,322.0h1.2v1.2h-1.2zM799.5,309.7h1.2v1.2h-1.2zM799.5,297.4h1.2v1.2h-1.2zM799.5,285.1h1.2v1.2h-1.2zM799.5,272.9h1.2v1.2h-1.2zM799.5,260.6h1.2v1.2h-1.2zM799.5,248.3h1.2v1.2h-1.2zM799.5,236.0h1.2v1.2h-1.2zM799.5,223.7h1.2v1.2h-1.2zM799.5,211.4h1.2v1.2h-1.2zM799.5,199.1h1.2v1.2h-1.2zM799.5,186.8h1.2v1.2h-1.2zM799.5,174.5h1.2v1.2h-1.2zM811.7,727.6h1.2v1.2h-1.2zM811.7,715.3h1.2v1.2h-1.2zM811.7,703.0h1.2v1.2h-1.2zM811.7,690.7h1.2v1.2h-1.2zM811.7,678.4h1.2v1.2h-1.2zM811.7,666.1h1.2v1.2h-1.2zM811.7,653.9h1.2v1.2h-1.2zM811.7,641.6h1.2v1.2h-1.2zM811.7,629.3h1.2v1.2h-1.2zM811.7,617.0h1.2v1.2h-1.2zM811.7,604.7h1.2v1.2h-1.2zM811.7,592.4h1.2v1.2h-1.2zM811.7,580.1h1.2v1.2h-1.2zM811.7,567.8h1.2v1.2h-1.2zM811.7,555.5h1.2v1.2h-1.2zM811.7,543.2h1.2v1.2h-1.2zM811.7,530.9h1.2v1.2h-1.2zM811.7,518.7h1.2v1.2h-1.2zM811.7,506.4h1.2v1.2h-1.2zM811.7,494.1h1.2v1.2h-1.2zM811.7,481.8h1.2v1.2h-1.2zM811.7,469.5h1.2v1.2h-1.2zM811.7,457.2h1.2v1.2h-1.2zM811.7,444.9h1.2v1.2h-1.2zM811.7,432.6h1.2v1.2h-1.2zM811.7,420.3h1.2v1.2h-1.2zM811.7,408.0h1.2v1.2h-1.2zM811.7,395.8h1.2v1.2h-1.2zM811.7,383.5h1.2v1.2h-1.2zM811.7,371.2h1.2v1.2h-1.2zM811.7,358.9h1.2v1.2h-1.2zM811.7,346.6h1.2v1.2h-1.2zM811.7,334.3h1.2v1.2h-1.2zM811.7,322.0h1.2v1.2h-1.2zM811.7,309.7h1.2v1.2h-1.2zM811.7,297.4h1.2v1.2h-1.2zM811.7,285.1h1.2v1.2h-1.2zM811.7,272.9h1.2v1.2h-1.2zM811.7,260.6h1.2v1.2h-1.2zM811.7,248.3h1.2v1.2h-1.2zM811.7,236.0h1.2v1.2h-1.2zM811.7,223.7h1.2v1.2h-1.2zM811.7,211.4h1.2v1.2h-1.2zM811.7,199.1h1.2v1.2h-1.2zM811.7,186.8h1.2v1.2h-1.2zM811.7,174.5h1.2v1.2h-1.2zM824.0,727.6h1.2v1.2h-1.2zM824.0,715.3h1.2v1.2h-1.2zM824.0,703.0h1.2v1.2h-1.2zM824.0,690.7h1.2v1.2h-1.2zM824.0,678.4h1.2v1.2h-1.2zM824.0,666.1h1.2v1.2h-1.2zM824.0,653.9h1.2v1.2h-1.2zM824.0,641.6h1.2v1.2h-1.2zM824.0,629.3h1.2v1.2h-1.2zM824.0,617.0h1.2v1.2h-1.2zM824.0,604.7h1.2v1.2h-1.2zM824.0,592.4h1.2v1.2h-1.2zM824.0,580.1h1.2v1.2h-1.2zM824.0,567.8h1.2v1.2h-1.2zM824.0,555.5h1.2v1.2h-1.2zM824.0,543.2h1.2v1.2h-1.2zM824.0,530.9h1.2v1.2h-1.2zM824.0,518.7h1.2v1.2h-1.2zM824.0,506.4h1.2v1.2h-1.2zM824.0,494.1h1.2v1.2h-1.2zM824.0,481.8h1.2v1.2h-1.2zM824.0,469.5h1.2v1.2h-1.2zM824.0,457.2h1.2v1.2h-1.2zM824.0,444.9h1.2v1.2h-1.2zM824.0,432.6h1.2v1.2h-1.2zM824.0,420.3h1.2v1.2h-1.2zM824.0,408.0h1.2v1.2h-1.2zM824.0,395.8h1.2v1.2h-1.2zM824.0,383.5h1.2v1.2h-1.2zM824.0,371.2h1.2v1.2h-1.2zM824.0,358.9h1.2v1.2h-1.2zM824.0,346.6h1.2v1.2h-1.2zM824.0,334.3h1.2v1.2h-1.2zM824.0,322.0h1.2v1.2h-1.2zM824.0,309.7h1.2v1.2h-1.2zM824.0,297.4h1.2v1.2h-1.2zM824.0,285.1h1.2v1.2h-1.2zM824.0,272.9h1.2v1.2h-1.2zM824.0,260.6h1.2v1.2h-1.2zM824.0,248.3h1.2v1.2h-1.2zM824.0,236.0h1.2v1.2h-1.2zM824.0,223.7h1.2v1.2h-1.2zM824.0,211.4h1.2v1.2h-1.2zM824.0,199.1h1.2v1.2h-1.2zM824.0,186.8h1.2v1.2h-1.2zM824.0,174.5h1.2v1.2h-1.2zM836.3,727.6h1.2v1.2h-1.2zM836.3,715.3h1.2v1.2h-1.2zM836.3,703.0h1.2v1.2h-1.2zM836.3,690.7h1.2v1.2h-1.2zM836.3,678.4h1.2v1.2h-1.2zM836.3,666.1h1.2v1.2h-1.2zM836.3,653.9h1.2v1.2h-1.2zM836.3,641.6h1.2v1.2h-1.2zM836.3,629.3h1.2v1.2h-1.2zM836.3,617.0h1.2v1.2h-1.2zM836.3,604.7h1.2v1.2h-1.2zM836.3,592.4h1.2v1.2h-1.2zM836.3,580.1h1.2v1.2h-1.2zM836.3,567.8h1.2v1.2h-1.2zM836.3,555.5h1.2v1.2h-1.2zM836.3,543.2h1.2v1.2h-1.2zM836.3,530.9h1.2v1.2h-1.2zM836.3,518.7h1.2v1.2h-1.2zM836.3,506.4h1.2v1.2h-1.2zM836.3,494.1h1.2v1.2h-1.2zM836.3,481.8h1.2v1.2h-1.2zM836.3,469.5h1.2v1.2h-1.2zM836.3,457.2h1.2v1.2h-1.2zM836.3,444.9h1.2v1.2h-1.2zM836.3,432.6h1.2v1.2h-1.2zM836.3,420.3h1.2v1.2h-1.2zM836.3,408.0h1.2v1.2h-1.2zM836.3,395.8h1.2v1.2h-1.2zM836.3,383.5h1.2v1.2h-1.2zM836.3,371.2h1.2v1.2h-1.2zM836.3,358.9h1.2v1.2h-1.2zM836.3,346.6h1.2v1.2h-1.2zM836.3,334.3h1.2v1.2h-1.2zM836.3,322.0h1.2v1.2h-1.2zM836.3,309.7h1.2v1.2h-1.2zM836.3,297.4h1.2v1.2h-1.2zM836.3,285.1h1.2v1.2h-1.2zM836.3,272.9h1.2v1.2h-1.2zM836.3,260.6h1.2v1.2h-1.2zM836.3,248.3h1.2v1.2h-1.2zM836.3,236.0h1.2v1.2h-1.2zM836.3,223.7h1.2v1.2h-1.2zM836.3,211.4h1.2v1.2h-1.2zM836.3,199.1h1.2v1.2h-1.2zM836.3,186.8h1.2v1.2h-1.2zM836.3,174.5h1.2v1.2h-1.2zM848.6,727.6h1.2v1.2h-1.2zM848.6,715.3h1.2v1.2h-1.2zM848.6,703.0h1.2v1.2h-1.2zM848.6,690.7h1.2v1.2h-1.2zM848.6,678.4h1.2v1.2h-1.2zM848.6,666.1h1.2v1.2h-1.2zM848.6,653.9h1.2v1.2h-1.2zM848.6,641.6h1.2v1.2h-1.2zM848.6,629.3h1.2v1.2h-1.2zM848.6,617.0h1.2v1.2h-1.2zM848.6,604.7h1.2v1.2h-1.2zM848.6,592.4h1.2v1.2h-1.2zM848.6,580.1h1.2v1.2h-1.2zM848.6,567.8h1.2v1.2h-1.2zM848.6,555.5h1.2v1.2h-1.2zM848.6,543.2h1.2v1.2h-1.2zM848.6,530.9h1.2v1.2h-1.2zM848.6,518.7h1.2v1.2h-1.2zM848.6,506.4h1.2v1.2h-1.2zM848.6,494.1h1.2v1.2h-1.2zM848.6,481.8h1.2v1.2h-1.2zM848.6,469.5h1.2v1.2h-1.2zM848.6,457.2h1.2v1.2h-1.2zM848.6,444.9h1.2v1.2h-1.2zM848.6,432.6h1.2v1.2h-1.2zM848.6,420.3h1.2v1.2h-1.2zM848.6,408.0h1.2v1.2h-1.2zM848.6,395.8h1.2v1.2h-1.2zM848.6,383.5h1.2v1.2h-1.2zM848.6,371.2h1.2v1.2h-1.2zM848.6,358.9h1.2v1.2h-1.2zM848.6,346.6h1.2v1.2h-1.2zM848.6,334.3h1.2v1.2h-1.2zM848.6,322.0h1.2v1.2h-1.2zM848.6,309.7h1.2v1.2h-1.2zM848.6,297.4h1.2v1.2h-1.2zM848.6,285.1h1.2v1.2h-1.2zM848.6,272.9h1.2v1.2h-1.2zM848.6,260.6h1.2v1.2h-1.2zM848.6,248.3h1.2v1.2h-1.2zM848.6,236.0h1.2v1.2h-1.2zM848.6,223.7h1.2v1.2h-1.2zM848.6,211.4h1.2v1.2h-1.2zM848.6,199.1h1.2v1.2h-1.2zM848.6,186.8h1.2v1.2h-1.2zM848.6,174.5h1.2v1.2h-1.2zM860.9,727.6h1.2v1.2h-1.2zM860.9,715.3h1.2v1.2h-1.2zM860.9,703.0h1.2v1.2h-1.2zM860.9,690.7h1.2v1.2h-1.2zM860.9,678.4h1.2v1.2h-1.2zM860.9,666.1h1.2v1.2h-1.2zM860.9,653.9h1.2v1.2h-1.2zM860.9,641.6h1.2v1.2h-1.2zM860.9,629.3h1.2v1.2h-1.2zM860.9,617.0h1.2v1.2h-1.2zM860.9,604.7h1.2v1.2h-1.2zM860.9,592.4h1.2v1.2h-1.2zM860.9,580.1h1.2v1.2h-1.2zM860.9,567.8h1.2v1.2h-1.2zM860.9,555.5h1.2v1.2h-1.2zM860.9,543.2h1.2v1.2h-1.2zM860.9,530.9h1.2v1.2h-1.2zM860.9,518.7h1.2v1.2h-1.2zM860.9,506.4h1.2v1.2h-1.2zM860.9,494.1h1.2v1.2h-1.2zM860.9,481.8h1.2v1.2h-1.2zM860.9,469.5h1.2v1.2h-1.2zM860.9,457.2h1.2v1.2h-1.2zM860.9,444.9h1.2v1.2h-1.2zM860.9,432.6h1.2v1.2h-1.2zM860.9,420.3h1.2v1.2h-1.2zM860.9,408.0h1.2v1.2h-1.2zM860.9,395.8h1.2v1.2h-1.2zM860.9,383.5h1.2v1.2h-1.2zM860.9,371.2h1.2v1.2h-1.2zM860.9,358.9h1.2v1.2h-1.2zM860.9,346.6h1.2v1.2h-1.2zM860.9,334.3h1.2v1.2h-1.2zM860.9,322.0h1.2v1.2h-1.2zM860.9,309.7h1.2v1.2h-1.2zM860.9,297.4h1.2v1.2h-1.2zM860.9,285.1h1.2v1.2h-1.2zM860.9,272.9h1.2v1.2h-1.2zM860.9,260.6h1.2v1.2h-1.2zM860.9,248.3h1.2v1.2h-1.2zM860.9,236.0h1.2v1.2h-1.2zM860.9,223.7h1.2v1.2h-1.2zM860.9,211.4h1.2v1.2h-1.2zM860.9,199.1h1.2v1.2h-1.2zM860.9,186.8h1.2v1.2h-1.2zM860.9,174.5h1.2v1.2h-1.2zM873.2,727.6h1.2v1.2h-1.2zM873.2,715.3h1.2v1.2h-1.2zM873.2,703.0h1.2v1.2h-1.2zM873.2,690.7h1.2v1.2h-1.2zM873.2,678.4h1.2v1.2h-1.2zM873.2,666.1h1.2v1.2h-1.2zM873.2,653.9h1.2v1.2h-1.2zM873.2,641.6h1.2v1.2h-1.2zM873.2,629.3h1.2v1.2h-1.2zM873.2,617.0h1.2v1.2h-1.2zM873.2,604.7h1.2v1.2h-1.2zM873.2,592.4h1.2v1.2h-1.2zM873.2,580.1h1.2v1.2h-1.2zM873.2,567.8h1.2v1.2h-1.2zM873.2,555.5h1.2v1.2h-1.2zM873.2,543.2h1.2v1.2h-1.2zM873.2,530.9h1.2v1.2h-1.2zM873.2,518.7h1.2v1.2h-1.2zM873.2,506.4h1.2v1.2h-1.2zM873.2,494.1h1.2v1.2h-1.2zM873.2,481.8h1.2v1.2h-1.2zM873.2,469.5h1.2v1.2h-1.2zM873.2,457.2h1.2v1.2h-1.2zM873.2,444.9h1.2v1.2h-1.2zM873.2,432.6h1.2v1.2h-1.2zM873.2,420.3h1.2v1.2h-1.2zM873.2,408.0h1.2v1.2h-1.2zM873.2,395.8h1.2v1.2h-1.2zM873.2,383.5h1.2v1.2h-1.2zM873.2,371.2h1.2v1.2h-1.2zM873.2,358.9h1.2v1.2h-1.2zM873.2,346.6h1.2v1.2h-1.2zM873.2,334.3h1.2v1.2h-1.2zM873.2,322.0h1.2v1.2h-1.2zM873.2,309.7h1.2v1.2h-1.2zM873.2,297.4h1.2v1.2h-1.2zM873.2,285.1h1.2v1.2h-1.2zM873.2,272.9h1.2v1.2h-1.2zM873.2,260.6h1.2v1.2h-1.2zM873.2,248.3h1.2v1.2h-1.2zM873.2,236.0h1.2v1.2h-1.2zM873.2,223.7h1.2v1.2h-1.2zM873.2,211.4h1.2v1.2h-1.2zM873.2,199.1h1.2v1.2h-1.2zM873.2,186.8h1.2v1.2h-1.2zM873.2,174.5h1.2v1.2h-1.2zM885.5,727.6h1.2v1.2h-1.2zM885.5,715.3h1.2v1.2h-1.2zM885.5,703.0h1.2v1.2h-1.2zM885.5,690.7h1.2v1.2h-1.2zM885.5,678.4h1.2v1.2h-1.2zM885.5,666.1h1.2v1.2h-1.2zM885.5,653.9h1.2v1.2h-1.2zM885.5,641.6h1.2v1.2h-1.2zM885.5,629.3h1.2v1.2h-1.2zM885.5,617.0h1.2v1.2h-1.2zM885.5,604.7h1.2v1.2h-1.2zM885.5,592.4h1.2v1.2h-1.2zM885.5,580.1h1.2v1.2h-1.2zM885.5,567.8h1.2v1.2h-1.2zM885.5,555.5h1.2v1.2h-1.2zM885.5,543.2h1.2v1.2h-1.2zM885.5,530.9h1.2v1.2h-1.2zM885.5,518.7h1.2v1.2h-1.2zM885.5,506.4h1.2v1.2h-1.2zM885.5,494.1h1.2v1.2h-1.2zM885.5,481.8h1.2v1.2h-1.2zM885.5,469.5h1.2v1.2h-1.2zM885.5,457.2h1.2v1.2h-1.2zM885.5,444.9h1.2v1.2h-1.2zM885.5,432.6h1.2v1.2h-1.2zM885.5,420.3h1.2v1.2h-1.2zM885.5,408.0h1.2v1.2h-1.2zM885.5,395.8h1.2v1.2h-1.2zM885.5,383.5h1.2v1.2h-1.2zM885.5,371.2h1.2v1.2h-1.2zM885.5,358.9h1.2v1.2h-1.2zM885.5,346.6h1.2v1.2h-1.2zM885.5,334.3h1.2v1.2h-1.2zM885.5,322.0h1.2v1.2h-1.2zM885.5,309.7h1.2v1.2h-1.2zM885.5,297.4h1.2v1.2h-1.2zM885.5,285.1h1.2v1.2h-1.2zM885.5,272.9h1.2v1.2h-1.2zM885.5,260.6h1.2v1.2h-1.2zM885.5,248.3h1.2v1.2h-1.2zM885.5,236.0h1.2v1.2h-1.2zM885.5,223.7h1.2v1.2h-1.2zM885.5,211.4h1.2v1.2h-1.2zM885.5,199.1h1.2v1.2h-1.2zM885.5,186.8h1.2v1.2h-1.2zM885.5,174.5h1.2v1.2h-1.2zM897.8,727.6h1.2v1.2h-1.2zM897.8,715.3h1.2v1.2h-1.2zM897.8,703.0h1.2v1.2h-1.2zM897.8,690.7h1.2v1.2h-1.2zM897.8,678.4h1.2v1.2h-1.2zM897.8,666.1h1.2v1.2h-1.2zM897.8,653.9h1.2v1.2h-1.2zM897.8,641.6h1.2v1.2h-1.2zM897.8,629.3h1.2v1.2h-1.2zM897.8,617.0h1.2v1.2h-1.2zM897.8,604.7h1.2v1.2h-1.2zM897.8,592.4h1.2v1.2h-1.2zM897.8,580.1h1.2v1.2h-1.2zM897.8,567.8h1.2v1.2h-1.2zM897.8,555.5h1.2v1.2h-1.2zM897.8,543.2h1.2v1.2h-1.2zM897.8,530.9h1.2v1.2h-1.2zM897.8,518.7h1.2v1.2h-1.2zM897.8,506.4h1.2v1.2h-1.2zM897.8,494.1h1.2v1.2h-1.2zM897.8,481.8h1.2v1.2h-1.2zM897.8,469.5h1.2v1.2h-1.2zM897.8,457.2h1.2v1.2h-1.2zM897.8,444.9h1.2v1.2h-1.2zM897.8,432.6h1.2v1.2h-1.2zM897.8,420.3h1.2v1.2h-1.2zM897.8,408.0h1.2v1.2h-1.2zM897.8,395.8h1.2v1.2h-1.2zM897.8,383.5h1.2v1.2h-1.2zM897.8,371.2h1.2v1.2h-1.2zM897.8,358.9h1.2v1.2h-1.2zM897.8,346.6h1.2v1.2h-1.2zM897.8,334.3h1.2v1.2h-1.2zM897.8,322.0h1.2v1.2h-1.2zM897.8,309.7h1.2v1.2h-1.2zM897.8,297.4h1.2v1.2h-1.2zM897.8,285.1h1.2v1.2h-1.2zM897.8,272.9h1.2v1.2h-1.2zM897.8,260.6h1.2v1.2h-1.2zM897.8,248.3h1.2v1.2h-1.2zM897.8,236.0h1.2v1.2h-1.2zM897.8,223.7h1.2v1.2h-1.2zM897.8,211.4h1.2v1.2h-1.2zM897.8,199.1h1.2v1.2h-1.2zM897.8,186.8h1.2v1.2h-1.2zM897.8,174.5h1.2v1.2h-1.2zM910.1,727.6h1.2v1.2h-1.2zM910.1,715.3h1.2v1.2h-1.2zM910.1,703.0h1.2v1.2h-1.2zM910.1,690.7h1.2v1.2h-1.2zM910.1,678.4h1.2v1.2h-1.2zM910.1,666.1h1.2v1.2h-1.2zM910.1,653.9h1.2v1.2h-1.2zM910.1,641.6h1.2v1.2h-1.2zM910.1,629.3h1.2v1.2h-1.2zM910.1,617.0h1.2v1.2h-1.2zM910.1,604.7h1.2v1.2h-1.2zM910.1,592.4h1.2v1.2h-1.2zM910.1,580.1h1.2v1.2h-1.2zM910.1,567.8h1.2v1.2h-1.2zM910.1,555.5h1.2v1.2h-1.2zM910.1,543.2h1.2v1.2h-1.2zM910.1,530.9h1.2v1.2h-1.2zM910.1,518.7h1.2v1.2h-1.2zM910.1,506.4h1.2v1.2h-1.2zM910.1,494.1h1.2v1.2h-1.2zM910.1,481.8h1.2v1.2h-1.2zM910.1,469.5h1.2v1.2h-1.2zM910.1,457.2h1.2v1.2h-1.2zM910.1,444.9h1.2v1.2h-1.2zM910.1,432.6h1.2v1.2h-1.2zM910.1,420.3h1.2v1.2h-1.2zM910.1,408.0h1.2v1.2h-1.2zM910.1,395.8h1.2v1.2h-1.2zM910.1,383.5h1.2v1.2h-1.2zM910.1,371.2h1.2v1.2h-1.2zM910.1,358.9h1.2v1.2h-1.2zM910.1,346.6h1.2v1.2h-1.2zM910.1,334.3h1.2v1.2h-1.2zM910.1,322.0h1.2v1.2h-1.2zM910.1,309.7h1.2v1.2h-1.2zM910.1,297.4h1.2v1.2h-1.2zM910.1,285.1h1.2v1.2h-1.2zM910.1,272.9h1.2v1.2h-1.2zM910.1,260.6h1.2v1.2h-1.2zM910.1,248.3h1.2v1.2h-1.2zM910.1,236.0h1.2v1.2h-1.2zM910.1,223.7h1.2v1.2h-1.2zM910.1,211.4h1.2v1.2h-1.2zM910.1,199.1h1.2v1.2h-1.2zM910.1,186.8h1.2v1.2h-1.2zM910.1,174.5h1.2v1.2h-1.2zM922.4,727.6h1.2v1.2h-1.2zM922.4,715.3h1.2v1.2h-1.2zM922.4,703.0h1.2v1.2h-1.2zM922.4,690.7h1.2v1.2h-1.2zM922.4,678.4h1.2v1.2h-1.2zM922.4,666.1h1.2v1.2h-1.2zM922.4,653.9h1.2v1.2h-1.2zM922.4,641.6h1.2v1.2h-1.2zM922.4,629.3h1.2v1.2h-1.2zM922.4,617.0h1.2v1.2h-1.2zM922.4,604.7h1.2v1.2h-1.2zM922.4,592.4h1.2v1.2h-1.2zM922.4,580.1h1.2v1.2h-1.2zM922.4,567.8h1.2v1.2h-1.2zM922.4,555.5h1.2v1.2h-1.2zM922.4,543.2h1.2v1.2h-1.2zM922.4,530.9h1.2v1.2h-1.2zM922.4,518.7h1.2v1.2h-1.2zM922.4,506.4h1.2v1.2h-1.2zM922.4,494.1h1.2v1.2h-1.2zM922.4,481.8h1.2v1.2h-1.2zM922.4,469.5h1.2v1.2h-1.2zM922.4,457.2h1.2v1.2h-1.2zM922.4,444.9h1.2v1.2h-1.2zM922.4,432.6h1.2v1.2h-1.2zM922.4,420.3h1.2v1.2h-1.2zM922.4,408.0h1.2v1.2h-1.2zM922.4,395.8h1.2v1.2h-1.2zM922.4,383.5h1.2v1.2h-1.2zM922.4,371.2h1.2v1.2h-1.2zM922.4,358.9h1.2v1.2h-1.2zM922.4,346.6h1.2v1.2h-1.2zM922.4,334.3h1.2v1.2h-1.2zM922.4,322.0h1.2v1.2h-1.2zM922.4,309.7h1.2v1.2h-1.2zM922.4,297.4h1.2v1.2h-1.2zM922.4,285.1h1.2v1.2h-1.2zM922.4,272.9h1.2v1.2h-1.2zM922.4,260.6h1.2v1.2h-1.2zM922.4,248.3h1.2v1.2h-1.2zM922.4,236.0h1.2v1.2h-1.2zM922.4,223.7h1.2v1.2h-1.2zM922.4,211.4h1.2v1.2h-1.2zM922.4,199.1h1.2v1.2h-1.2zM922.4,186.8h1.2v1.2h-1.2zM922.4,174.5h1.2v1.2h-1.2zM934.6,727.6h1.2v1.2h-1.2zM934.6,715.3h1.2v1.2h-1.2zM934.6,703.0h1.2v1.2h-1.2zM934.6,690.7h1.2v1.2h-1.2zM934.6,678.4h1.2v1.2h-1.2zM934.6,666.1h1.2v1.2h-1.2zM934.6,653.9h1.2v1.2h-1.2zM934.6,641.6h1.2v1.2h-1.2zM934.6,629.3h1.2v1.2h-1.2zM934.6,617.0h1.2v1.2h-1.2zM934.6,604.7h1.2v1.2h-1.2zM934.6,592.4h1.2v1.2h-1.2zM934.6,580.1h1.2v1.2h-1.2zM934.6,567.8h1.2v1.2h-1.2zM934.6,555.5h1.2v1.2h-1.2zM934.6,543.2h1.2v1.2h-1.2zM934.6,530.9h1.2v1.2h-1.2zM934.6,518.7h1.2v1.2h-1.2zM934.6,506.4h1.2v1.2h-1.2zM934.6,494.1h1.2v1.2h-1.2zM934.6,481.8h1.2v1.2h-1.2zM934.6,469.5h1.2v1.2h-1.2zM934.6,457.2h1.2v1.2h-1.2zM934.6,444.9h1.2v1.2h-1.2zM934.6,432.6h1.2v1.2h-1.2zM934.6,420.3h1.2v1.2h-1.2zM934.6,408.0h1.2v1.2h-1.2zM934.6,395.8h1.2v1.2h-1.2zM934.6,383.5h1.2v1.2h-1.2zM934.6,371.2h1.2v1.2h-1.2zM934.6,358.9h1.2v1.2h-1.2zM934.6,346.6h1.2v1.2h-1.2zM934.6,334.3h1.2v1.2h-1.2zM934.6,322.0h1.2v1.2h-1.2zM934.6,309.7h1.2v1.2h-1.2zM934.6,297.4h1.2v1.2h-1.2zM934.6,285.1h1.2v1.2h-1.2zM934.6,272.9h1.2v1.2h-1.2zM934.6,260.6h1.2v1.2h-1.2zM934.6,248.3h1.2v1.2h-1.2zM934.6,236.0h1.2v1.2h-1.2zM934.6,223.7h1.2v1.2h-1.2zM934.6,211.4h1.2v1.2h-1.2zM934.6,199.1h1.2v1.2h-1.2zM934.6,186.8h1.2v1.2h-1.2zM934.6,174.5h1.2v1.2h-1.2zM946.9,727.6h1.2v1.2h-1.2zM946.9,715.3h1.2v1.2h-1.2zM946.9,703.0h1.2v1.2h-1.2zM946.9,690.7h1.2v1.2h-1.2zM946.9,678.4h1.2v1.2h-1.2zM946.9,666.1h1.2v1.2h-1.2zM946.9,653.9h1.2v1.2h-1.2zM946.9,641.6h1.2v1.2h-1.2zM946.9,629.3h1.2v1.2h-1.2zM946.9,617.0h1.2v1.2h-1.2zM946.9,604.7h1.2v1.2h-1.2zM946.9,592.4h1.2v1.2h-1.2zM946.9,580.1h1.2v1.2h-1.2zM946.9,567.8h1.2v1.2h-1.2zM946.9,555.5h1.2v1.2h-1.2zM946.9,543.2h1.2v1.2h-1.2zM946.9,530.9h1.2v1.2h-1.2zM946.9,518.7h1.2v1.2h-1.2zM946.9,506.4h1.2v1.2h-1.2zM946.9,494.1h1.2v1.2h-1.2zM946.9,481.8h1.2v1.2h-1.2zM946.9,469.5h1.2v1.2h-1.2zM946.9,457.2h1.2v1.2h-1.2zM946.9,444.9h1.2v1.2h-1.2zM946.9,432.6h1.2v1.2h-1.2zM946.9,420.3h1.2v1.2h-1.2zM946.9,408.0h1.2v1.2h-1.2zM946.9,395.8h1.2v1.2h-1.2zM946.9,383.5h1.2v1.2h-1.2zM946.9,371.2h1.2v1.2h-1.2zM946.9,358.9h1.2v1.2h-1.2zM946.9,346.6h1.2v1.2h-1.2zM946.9,334.3h1.2v1.2h-1.2zM946.9,322.0h1.2v1.2h-1.2zM946.9,309.7h1.2v1.2h-1.2zM946.9,297.4h1.2v1.2h-1.2zM946.9,285.1h1.2v1.2h-1.2zM946.9,272.9h1.2v1.2h-1.2zM946.9,260.6h1.2v1.2h-1.2zM946.9,248.3h1.2v1.2h-1.2zM946.9,236.0h1.2v1.2h-1.2zM946.9,223.7h1.2v1.2h-1.2zM946.9,211.4h1.2v1.2h-1.2zM946.9,199.1h1.2v1.2h-1.2zM946.9,186.8h1.2v1.2h-1.2zM946.9,174.5h1.2v1.2h-1.2zM959.2,727.6h1.2v1.2h-1.2zM959.2,715.3h1.2v1.2h-1.2zM959.2,703.0h1.2v1.2h-1.2zM959.2,690.7h1.2v1.2h-1.2zM959.2,678.4h1.2v1.2h-1.2zM959.2,666.1h1.2v1.2h-1.2zM959.2,653.9h1.2v1.2h-1.2zM959.2,641.6h1.2v1.2h-1.2zM959.2,629.3h1.2v1.2h-1.2zM959.2,617.0h1.2v1.2h-1.2zM959.2,604.7h1.2v1.2h-1.2zM959.2,592.4h1.2v1.2h-1.2zM959.2,580.1h1.2v1.2h-1.2zM959.2,567.8h1.2v1.2h-1.2zM959.2,555.5h1.2v1.2h-1.2zM959.2,543.2h1.2v1.2h-1.2zM959.2,530.9h1.2v1.2h-1.2zM959.2,518.7h1.2v1.2h-1.2zM959.2,506.4h1.2v1.2h-1.2zM959.2,494.1h1.2v1.2h-1.2zM959.2,481.8h1.2v1.2h-1.2zM959.2,469.5h1.2v1.2h-1.2zM959.2,457.2h1.2v1.2h-1.2zM959.2,444.9h1.2v1.2h-1.2zM959.2,432.6h1.2v1.2h-1.2zM959.2,420.3h1.2v1.2h-1.2zM959.2,408.0h1.2v1.2h-1.2zM959.2,395.8h1.2v1.2h-1.2zM959.2,383.5h1.2v1.2h-1.2zM959.2,371.2h1.2v1.2h-1.2zM959.2,358.9h1.2v1.2h-1.2zM959.2,346.6h1.2v1.2h-1.2zM959.2,334.3h1.2v1.2h-1.2zM959.2,322.0h1.2v1.2h-1.2zM959.2,309.7h1.2v1.2h-1.2zM959.2,297.4h1.2v1.2h-1.2zM959.2,285.1h1.2v1.2h-1.2zM959.2,272.9h1.2v1.2h-1.2zM959.2,260.6h1.2v1.2h-1.2zM959.2,248.3h1.2v1.2h-1.2zM959.2,236.0h1.2v1.2h-1.2zM959.2,223.7h1.2v1.2h-1.2zM959.2,211.4h1.2v1.2h-1.2zM959.2,199.1h1.2v1.2h-1.2zM959.2,186.8h1.2v1.2h-1.2zM959.2,174.5h1.2v1.2h-1.2zM971.5,727.6h1.2v1.2h-1.2zM971.5,715.3h1.2v1.2h-1.2zM971.5,703.0h1.2v1.2h-1.2zM971.5,690.7h1.2v1.2h-1.2zM971.5,678.4h1.2v1.2h-1.2zM971.5,666.1h1.2v1.2h-1.2zM971.5,653.9h1.2v1.2h-1.2zM971.5,641.6h1.2v1.2h-1.2zM971.5,629.3h1.2v1.2h-1.2zM971.5,617.0h1.2v1.2h-1.2zM971.5,604.7h1.2v1.2h-1.2zM971.5,592.4h1.2v1.2h-1.2zM971.5,580.1h1.2v1.2h-1.2zM971.5,567.8h1.2v1.2h-1.2zM971.5,555.5h1.2v1.2h-1.2zM971.5,543.2h1.2v1.2h-1.2zM971.5,530.9h1.2v1.2h-1.2zM971.5,518.7h1.2v1.2h-1.2zM971.5,506.4h1.2v1.2h-1.2zM971.5,494.1h1.2v1.2h-1.2zM971.5,481.8h1.2v1.2h-1.2zM971.5,469.5h1.2v1.2h-1.2zM971.5,457.2h1.2v1.2h-1.2zM971.5,444.9h1.2v1.2h-1.2zM971.5,432.6h1.2v1.2h-1.2zM971.5,420.3h1.2v1.2h-1.2zM971.5,408.0h1.2v1.2h-1.2zM971.5,395.8h1.2v1.2h-1.2zM971.5,383.5h1.2v1.2h-1.2zM971.5,371.2h1.2v1.2h-1.2zM971.5,358.9h1.2v1.2h-1.2zM971.5,346.6h1.2v1.2h-1.2zM971.5,334.3h1.2v1.2h-1.2zM971.5,322.0h1.2v1.2h-1.2zM971.5,309.7h1.2v1.2h-1.2zM971.5,297.4h1.2v1.2h-1.2zM971.5,285.1h1.2v1.2h-1.2zM971.5,272.9h1.2v1.2h-1.2zM971.5,260.6h1.2v1.2h-1.2zM971.5,248.3h1.2v1.2h-1.2zM971.5,236.0h1.2v1.2h-1.2zM971.5,223.7h1.2v1.2h-1.2zM971.5,211.4h1.2v1.2h-1.2zM971.5,199.1h1.2v1.2h-1.2zM971.5,186.8h1.2v1.2h-1.2zM971.5,174.5h1.2v1.2h-1.2zM983.8,727.6h1.2v1.2h-1.2zM983.8,715.3h1.2v1.2h-1.2zM983.8,703.0h1.2v1.2h-1.2zM983.8,690.7h1.2v1.2h-1.2zM983.8,678.4h1.2v1.2h-1.2zM983.8,666.1h1.2v1.2h-1.2zM983.8,653.9h1.2v1.2h-1.2zM983.8,641.6h1.2v1.2h-1.2zM983.8,629.3h1.2v1.2h-1.2zM983.8,617.0h1.2v1.2h-1.2zM983.8,604.7h1.2v1.2h-1.2zM983.8,592.4h1.2v1.2h-1.2zM983.8,580.1h1.2v1.2h-1.2zM983.8,567.8h1.2v1.2h-1.2zM983.8,555.5h1.2v1.2h-1.2zM983.8,543.2h1.2v1.2h-1.2zM983.8,530.9h1.2v1.2h-1.2zM983.8,518.7h1.2v1.2h-1.2zM983.8,506.4h1.2v1.2h-1.2zM983.8,494.1h1.2v1.2h-1.2zM983.8,481.8h1.2v1.2h-1.2zM983.8,469.5h1.2v1.2h-1.2zM983.8,457.2h1.2v1.2h-1.2zM983.8,444.9h1.2v1.2h-1.2zM983.8,432.6h1.2v1.2h-1.2zM983.8,420.3h1.2v1.2h-1.2zM983.8,408.0h1.2v1.2h-1.2zM983.8,395.8h1.2v1.2h-1.2zM983.8,383.5h1.2v1.2h-1.2zM983.8,371.2h1.2v1.2h-1.2zM983.8,358.9h1.2v1.2h-1.2zM983.8,346.6h1.2v1.2h-1.2zM983.8,334.3h1.2v1.2h-1.2zM983.8,322.0h1.2v1.2h-1.2zM983.8,309.7h1.2v1.2h-1.2zM983.8,297.4h1.2v1.2h-1.2zM983.8,285.1h1.2v1.2h-1.2zM983.8,272.9h1.2v1.2h-1.2zM983.8,260.6h1.2v1.2h-1.2zM983.8,248.3h1.2v1.2h-1.2zM983.8,236.0h1.2v1.2h-1.2zM983.8,223.7h1.2v1.2h-1.2zM983.8,211.4h1.2v1.2h-1.2zM983.8,199.1h1.2v1.2h-1.2zM983.8,186.8h1.2v1.2h-1.2zM983.8,174.5h1.2v1.2h-1.2zM996.1,727.6h1.2v1.2h-1.2zM996.1,715.3h1.2v1.2h-1.2zM996.1,703.0h1.2v1.2h-1.2zM996.1,690.7h1.2v1.2h-1.2zM996.1,678.4h1.2v1.2h-1.2zM996.1,666.1h1.2v1.2h-1.2zM996.1,653.9h1.2v1.2h-1.2zM996.1,641.6h1.2v1.2h-1.2zM996.1,629.3h1.2v1.2h-1.2zM996.1,617.0h1.2v1.2h-1.2zM996.1,604.7h1.2v1.2h-1.2zM996.1,592.4h1.2v1.2h-1.2zM996.1,580.1h1.2v1.2h-1.2zM996.1,567.8h1.2v1.2h-1.2zM996.1,555.5h1.2v1.2h-1.2zM996.1,543.2h1.2v1.2h-1.2zM996.1,530.9h1.2v1.2h-1.2zM996.1,518.7h1.2v1.2h-1.2zM996.1,506.4h1.2v1.2h-1.2zM996.1,494.1h1.2v1.2h-1.2zM996.1,481.8h1.2v1.2h-1.2zM996.1,469.5h1.2v1.2h-1.2zM996.1,457.2h1.2v1.2h-1.2zM996.1,444.9h1.2v1.2h-1.2zM996.1,432.6h1.2v1.2h-1.2zM996.1,420.3h1.2v1.2h-1.2zM996.1,408.0h1.2v1.2h-1.2zM996.1,395.8h1.2v1.2h-1.2zM996.1,383.5h1.2v1.2h-1.2zM996.1,371.2h1.2v1.2h-1.2zM996.1,358.9h1.2v1.2h-1.2zM996.1,346.6h1.2v1.2h-1.2zM996.1,334.3h1.2v1.2h-1.2zM996.1,322.0h1.2v1.2h-1.2zM996.1,309.7h1.2v1.2h-1.2zM996.1,297.4h1.2v1.2h-1.2zM996.1,285.1h1.2v1.2h-1.2zM996.1,272.9h1.2v1.2h-1.2zM996.1,260.6h1.2v1.2h-1.2zM996.1,248.3h1.2v1.2h-1.2zM996.1,236.0h1.2v1.2h-1.2zM996.1,223.7h1.2v1.2h-1.2zM996.1,211.4h1.2v1.2h-1.2zM996.1,199.1h1.2v1.2h-1.2zM996.1,186.8h1.2v1.2h-1.2zM996.1,174.5h1.2v1.2h-1.2zM1008.4,727.6h1.2v1.2h-1.2zM1008.4,715.3h1.2v1.2h-1.2zM1008.4,703.0h1.2v1.2h-1.2zM1008.4,690.7h1.2v1.2h-1.2zM1008.4,678.4h1.2v1.2h-1.2zM1008.4,666.1h1.2v1.2h-1.2zM1008.4,653.9h1.2v1.2h-1.2zM1008.4,641.6h1.2v1.2h-1.2zM1008.4,629.3h1.2v1.2h-1.2zM1008.4,617.0h1.2v1.2h-1.2zM1008.4,604.7h1.2v1.2h-1.2zM1008.4,592.4h1.2v1.2h-1.2zM1008.4,580.1h1.2v1.2h-1.2zM1008.4,567.8h1.2v1.2h-1.2zM1008.4,555.5h1.2v1.2h-1.2zM1008.4,543.2h1.2v1.2h-1.2zM1008.4,530.9h1.2v1.2h-1.2zM1008.4,518.7h1.2v1.2h-1.2zM1008.4,506.4h1.2v1.2h-1.2zM1008.4,494.1h1.2v1.2h-1.2zM1008.4,481.8h1.2v1.2h-1.2zM1008.4,469.5h1.2v1.2h-1.2zM1008.4,457.2h1.2v1.2h-1.2zM1008.4,444.9h1.2v1.2h-1.2zM1008.4,432.6h1.2v1.2h-1.2zM1008.4,420.3h1.2v1.2h-1.2zM1008.4,408.0h1.2v1.2h-1.2zM1008.4,395.8h1.2v1.2h-1.2zM1008.4,383.5h1.2v1.2h-1.2zM1008.4,371.2h1.2v1.2h-1.2zM1008.4,358.9h1.2v1.2h-1.2zM1008.4,346.6h1.2v1.2h-1.2zM1008.4,334.3h1.2v1.2h-1.2zM1008.4,322.0h1.2v1.2h-1.2zM1008.4,309.7h1.2v1.2h-1.2zM1008.4,297.4h1.2v1.2h-1.2zM1008.4,285.1h1.2v1.2h-1.2zM1008.4,272.9h1.2v1.2h-1.2zM1008.4,260.6h1.2v1.2h-1.2zM1008.4,248.3h1.2v1.2h-1.2zM1008.4,236.0h1.2v1.2h-1.2zM1008.4,223.7h1.2v1.2h-1.2zM1008.4,211.4h1.2v1.2h-1.2zM1008.4,199.1h1.2v1.2h-1.2zM1008.4,186.8h1.2v1.2h-1.2zM1008.4,174.5h1.2v1.2h-1.2zM1020.7,727.6h1.2v1.2h-1.2zM1020.7,715.3h1.2v1.2h-1.2zM1020.7,703.0h1.2v1.2h-1.2zM1020.7,690.7h1.2v1.2h-1.2zM1020.7,678.4h1.2v1.2h-1.2zM1020.7,666.1h1.2v1.2h-1.2zM1020.7,653.9h1.2v1.2h-1.2zM1020.7,641.6h1.2v1.2h-1.2zM1020.7,629.3h1.2v1.2h-1.2zM1020.7,617.0h1.2v1.2h-1.2zM1020.7,604.7h1.2v1.2h-1.2zM1020.7,592.4h1.2v1.2h-1.2zM1020.7,580.1h1.2v1.2h-1.2zM1020.7,567.8h1.2v1.2h-1.2zM1020.7,555.5h1.2v1.2h-1.2zM1020.7,543.2h1.2v1.2h-1.2zM1020.7,530.9h1.2v1.2h-1.2zM1020.7,518.7h1.2v1.2h-1.2zM1020.7,506.4h1.2v1.2h-1.2zM1020.7,494.1h1.2v1.2h-1.2zM1020.7,481.8h1.2v1.2h-1.2zM1020.7,469.5h1.2v1.2h-1.2zM1020.7,457.2h1.2v1.2h-1.2zM1020.7,444.9h1.2v1.2h-1.2zM1020.7,432.6h1.2v1.2h-1.2zM1020.7,420.3h1.2v1.2h-1.2zM1020.7,408.0h1.2v1.2h-1.2zM1020.7,395.8h1.2v1.2h-1.2zM1020.7,383.5h1.2v1.2h-1.2zM1020.7,371.2h1.2v1.2h-1.2zM1020.7,358.9h1.2v1.2h-1.2zM1020.7,346.6h1.2v1.2h-1.2zM1020.7,334.3h1.2v1.2h-1.2zM1020.7,322.0h1.2v1.2h-1.2zM1020.7,309.7h1.2v1.2h-1.2zM1020.7,297.4h1.2v1.2h-1.2zM1020.7,285.1h1.2v1.2h-1.2zM1020.7,272.9h1.2v1.2h-1.2zM1020.7,260.6h1.2v1.2h-1.2zM1020.7,248.3h1.2v1.2h-1.2zM1020.7,236.0h1.2v1.2h-1.2zM1020.7,223.7h1.2v1.2h-1.2zM1020.7,211.4h1.2v1.2h-1.2zM1020.7,199.1h1.2v1.2h-1.2zM1020.7,186.8h1.2v1.2h-1.2zM1020.7,174.5h1.2v1.2h-1.2zM1033.0,727.6h1.2v1.2h-1.2zM1033.0,715.3h1.2v1.2h-1.2zM1033.0,703.0h1.2v1.2h-1.2zM1033.0,690.7h1.2v1.2h-1.2zM1033.0,678.4h1.2v1.2h-1.2zM1033.0,666.1h1.2v1.2h-1.2zM1033.0,653.9h1.2v1.2h-1.2zM1033.0,641.6h1.2v1.2h-1.2zM1033.0,629.3h1.2v1.2h-1.2zM1033.0,617.0h1.2v1.2h-1.2zM1033.0,604.7h1.2v1.2h-1.2zM1033.0,592.4h1.2v1.2h-1.2zM1033.0,580.1h1.2v1.2h-1.2zM1033.0,567.8h1.2v1.2h-1.2zM1033.0,555.5h1.2v1.2h-1.2zM1033.0,543.2h1.2v1.2h-1.2zM1033.0,530.9h1.2v1.2h-1.2zM1033.0,518.7h1.2v1.2h-1.2zM1033.0,506.4h1.2v1.2h-1.2zM1033.0,494.1h1.2v1.2h-1.2zM1033.0,481.8h1.2v1.2h-1.2zM1033.0,469.5h1.2v1.2h-1.2zM1033.0,457.2h1.2v1.2h-1.2zM1033.0,444.9h1.2v1.2h-1.2zM1033.0,432.6h1.2v1.2h-1.2zM1033.0,420.3h1.2v1.2h-1.2zM1033.0,408.0h1.2v1.2h-1.2zM1033.0,395.8h1.2v1.2h-1.2zM1033.0,383.5h1.2v1.2h-1.2zM1033.0,371.2h1.2v1.2h-1.2zM1033.0,358.9h1.2v1.2h-1.2zM1033.0,346.6h1.2v1.2h-1.2zM1033.0,334.3h1.2v1.2h-1.2zM1033.0,322.0h1.2v1.2h-1.2zM1033.0,309.7h1.2v1.2h-1.2zM1033.0,297.4h1.2v1.2h-1.2zM1033.0,285.1h1.2v1.2h-1.2zM1033.0,272.9h1.2v1.2h-1.2zM1033.0,260.6h1.2v1.2h-1.2zM1033.0,248.3h1.2v1.2h-1.2zM1033.0,236.0h1.2v1.2h-1.2zM1033.0,223.7h1.2v1.2h-1.2zM1033.0,211.4h1.2v1.2h-1.2zM1033.0,199.1h1.2v1.2h-1.2zM1033.0,186.8h1.2v1.2h-1.2zM1033.0,174.5h1.2v1.2h-1.2zM1045.3,727.6h1.2v1.2h-1.2zM1045.3,715.3h1.2v1.2h-1.2zM1045.3,703.0h1.2v1.2h-1.2zM1045.3,690.7h1.2v1.2h-1.2zM1045.3,678.4h1.2v1.2h-1.2zM1045.3,666.1h1.2v1.2h-1.2zM1045.3,653.9h1.2v1.2h-1.2zM1045.3,641.6h1.2v1.2h-1.2zM1045.3,629.3h1.2v1.2h-1.2zM1045.3,617.0h1.2v1.2h-1.2zM1045.3,604.7h1.2v1.2h-1.2zM1045.3,592.4h1.2v1.2h-1.2zM1045.3,580.1h1.2v1.2h-1.2zM1045.3,567.8h1.2v1.2h-1.2zM1045.3,555.5h1.2v1.2h-1.2zM1045.3,543.2h1.2v1.2h-1.2zM1045.3,530.9h1.2v1.2h-1.2zM1045.3,518.7h1.2v1.2h-1.2zM1045.3,506.4h1.2v1.2h-1.2zM1045.3,494.1h1.2v1.2h-1.2zM1045.3,481.8h1.2v1.2h-1.2zM1045.3,469.5h1.2v1.2h-1.2zM1045.3,457.2h1.2v1.2h-1.2zM1045.3,444.9h1.2v1.2h-1.2zM1045.3,432.6h1.2v1.2h-1.2zM1045.3,420.3h1.2v1.2h-1.2zM1045.3,408.0h1.2v1.2h-1.2zM1045.3,395.8h1.2v1.2h-1.2zM1045.3,383.5h1.2v1.2h-1.2zM1045.3,371.2h1.2v1.2h-1.2zM1045.3,358.9h1.2v1.2h-1.2zM1045.3,346.6h1.2v1.2h-1.2zM1045.3,334.3h1.2v1.2h-1.2zM1045.3,322.0h1.2v1.2h-1.2zM1045.3,309.7h1.2v1.2h-1.2zM1045.3,297.4h1.2v1.2h-1.2zM1045.3,285.1h1.2v1.2h-1.2zM1045.3,272.9h1.2v1.2h-1.2zM1045.3,260.6h1.2v1.2h-1.2zM1045.3,248.3h1.2v1.2h-1.2zM1045.3,236.0h1.2v1.2h-1.2zM1045.3,223.7h1.2v1.2h-1.2zM1045.3,211.4h1.2v1.2h-1.2zM1045.3,199.1h1.2v1.2h-1.2zM1045.3,186.8h1.2v1.2h-1.2zM1045.3,174.5h1.2v1.2h-1.2zM1057.5,727.6h1.2v1.2h-1.2zM1057.5,715.3h1.2v1.2h-1.2zM1057.5,703.0h1.2v1.2h-1.2zM1057.5,690.7h1.2v1.2h-1.2zM1057.5,678.4h1.2v1.2h-1.2zM1057.5,666.1h1.2v1.2h-1.2zM1057.5,653.9h1.2v1.2h-1.2zM1057.5,641.6h1.2v1.2h-1.2zM1057.5,629.3h1.2v1.2h-1.2zM1057.5,617.0h1.2v1.2h-1.2zM1057.5,604.7h1.2v1.2h-1.2zM1057.5,592.4h1.2v1.2h-1.2zM1057.5,580.1h1.2v1.2h-1.2zM1057.5,567.8h1.2v1.2h-1.2zM1057.5,555.5h1.2v1.2h-1.2zM1057.5,543.2h1.2v1.2h-1.2zM1057.5,530.9h1.2v1.2h-1.2zM1057.5,518.7h1.2v1.2h-1.2zM1057.5,506.4h1.2v1.2h-1.2zM1057.5,494.1h1.2v1.2h-1.2zM1057.5,481.8h1.2v1.2h-1.2zM1057.5,469.5h1.2v1.2h-1.2zM1057.5,457.2h1.2v1.2h-1.2zM1057.5,444.9h1.2v1.2h-1.2zM1057.5,432.6h1.2v1.2h-1.2zM1057.5,420.3h1.2v1.2h-1.2zM1057.5,408.0h1.2v1.2h-1.2zM1057.5,395.8h1.2v1.2h-1.2zM1057.5,383.5h1.2v1.2h-1.2zM1057.5,371.2h1.2v1.2h-1.2zM1057.5,358.9h1.2v1.2h-1.2zM1057.5,346.6h1.2v1.2h-1.2zM1057.5,334.3h1.2v1.2h-1.2zM1057.5,322.0h1.2v1.2h-1.2zM1057.5,309.7h1.2v1.2h-1.2zM1057.5,297.4h1.2v1.2h-1.2zM1057.5,285.1h1.2v1.2h-1.2zM1057.5,272.9h1.2v1.2h-1.2zM1057.5,260.6h1.2v1.2h-1.2zM1057.5,248.3h1.2v1.2h-1.2zM1057.5,236.0h1.2v1.2h-1.2zM1057.5,223.7h1.2v1.2h-1.2zM1057.5,211.4h1.2v1.2h-1.2zM1057.5,199.1h1.2v1.2h-1.2zM1057.5,186.8h1.2v1.2h-1.2zM1057.5,174.5h1.2v1.2h-1.2zM1069.8,727.6h1.2v1.2h-1.2zM1069.8,715.3h1.2v1.2h-1.2zM1069.8,703.0h1.2v1.2h-1.2zM1069.8,690.7h1.2v1.2h-1.2zM1069.8,678.4h1.2v1.2h-1.2zM1069.8,666.1h1.2v1.2h-1.2zM1069.8,653.9h1.2v1.2h-1.2zM1069.8,641.6h1.2v1.2h-1.2zM1069.8,629.3h1.2v1.2h-1.2zM1069.8,617.0h1.2v1.2h-1.2zM1069.8,604.7h1.2v1.2h-1.2zM1069.8,592.4h1.2v1.2h-1.2zM1069.8,580.1h1.2v1.2h-1.2zM1069.8,567.8h1.2v1.2h-1.2zM1069.8,555.5h1.2v1.2h-1.2zM1069.8,543.2h1.2v1.2h-1.2zM1069.8,530.9h1.2v1.2h-1.2zM1069.8,518.7h1.2v1.2h-1.2zM1069.8,506.4h1.2v1.2h-1.2zM1069.8,494.1h1.2v1.2h-1.2zM1069.8,481.8h1.2v1.2h-1.2zM1069.8,469.5h1.2v1.2h-1.2zM1069.8,457.2h1.2v1.2h-1.2zM1069.8,444.9h1.2v1.2h-1.2zM1069.8,432.6h1.2v1.2h-1.2zM1069.8,420.3h1.2v1.2h-1.2zM1069.8,408.0h1.2v1.2h-1.2zM1069.8,395.8h1.2v1.2h-1.2zM1069.8,383.5h1.2v1.2h-1.2zM1069.8,371.2h1.2v1.2h-1.2zM1069.8,358.9h1.2v1.2h-1.2zM1069.8,346.6h1.2v1.2h-1.2zM1069.8,334.3h1.2v1.2h-1.2zM1069.8,322.0h1.2v1.2h-1.2zM1069.8,309.7h1.2v1.2h-1.2zM1069.8,297.4h1.2v1.2h-1.2zM1069.8,285.1h1.2v1.2h-1.2zM1069.8,272.9h1.2v1.2h-1.2zM1069.8,260.6h1.2v1.2h-1.2zM1069.8,248.3h1.2v1.2h-1.2zM1069.8,236.0h1.2v1.2h-1.2zM1069.8,223.7h1.2v1.2h-1.2zM1069.8,211.4h1.2v1.2h-1.2zM1069.8,199.1h1.2v1.2h-1.2zM1069.8,186.8h1.2v1.2h-1.2zM1069.8,174.5h1.2v1.2h-1.2zM1082.1,727.6h1.2v1.2h-1.2zM1082.1,715.3h1.2v1.2h-1.2zM1082.1,703.0h1.2v1.2h-1.2zM1082.1,690.7h1.2v1.2h-1.2zM1082.1,678.4h1.2v1.2h-1.2zM1082.1,666.1h1.2v1.2h-1.2zM1082.1,653.9h1.2v1.2h-1.2zM1082.1,641.6h1.2v1.2h-1.2zM1082.1,629.3h1.2v1.2h-1.2zM1082.1,617.0h1.2v1.2h-1.2zM1082.1,604.7h1.2v1.2h-1.2zM1082.1,592.4h1.2v1.2h-1.2zM1082.1,580.1h1.2v1.2h-1.2zM1082.1,567.8h1.2v1.2h-1.2zM1082.1,555.5h1.2v1.2h-1.2zM1082.1,543.2h1.2v1.2h-1.2zM1082.1,530.9h1.2v1.2h-1.2zM1082.1,518.7h1.2v1.2h-1.2zM1082.1,506.4h1.2v1.2h-1.2zM1082.1,494.1h1.2v1.2h-1.2zM1082.1,481.8h1.2v1.2h-1.2zM1082.1,469.5h1.2v1.2h-1.2zM1082.1,457.2h1.2v1.2h-1.2zM1082.1,444.9h1.2v1.2h-1.2zM1082.1,432.6h1.2v1.2h-1.2zM1082.1,420.3h1.2v1.2h-1.2zM1082.1,408.0h1.2v1.2h-1.2zM1082.1,395.8h1.2v1.2h-1.2zM1082.1,383.5h1.2v1.2h-1.2zM1082.1,371.2h1.2v1.2h-1.2zM1082.1,358.9h1.2v1.2h-1.2zM1082.1,346.6h1.2v1.2h-1.2zM1082.1,334.3h1.2v1.2h-1.2zM1082.1,322.0h1.2v1.2h-1.2zM1082.1,309.7h1.2v1.2h-1.2zM1082.1,297.4h1.2v1.2h-1.2zM1082.1,285.1h1.2v1.2h-1.2zM1082.1,272.9h1.2v1.2h-1.2zM1082.1,260.6h1.2v1.2h-1.2zM1082.1,248.3h1.2v1.2h-1.2zM1082.1,236.0h1.2v1.2h-1.2zM1082.1,223.7h1.2v1.2h-1.2zM1082.1,211.4h1.2v1.2h-1.2zM1082.1,199.1h1.2v1.2h-1.2zM1082.1,186.8h1.2v1.2h-1.2zM1082.1,174.5h1.2v1.2h-1.2zM1094.4,727.6h1.2v1.2h-1.2zM1094.4,715.3h1.2v1.2h-1.2zM1094.4,703.0h1.2v1.2h-1.2zM1094.4,690.7h1.2v1.2h-1.2zM1094.4,678.4h1.2v1.2h-1.2zM1094.4,666.1h1.2v1.2h-1.2zM1094.4,653.9h1.2v1.2h-1.2zM1094.4,641.6h1.2v1.2h-1.2zM1094.4,629.3h1.2v1.2h-1.2zM1094.4,617.0h1.2v1.2h-1.2zM1094.4,604.7h1.2v1.2h-1.2zM1094.4,592.4h1.2v1.2h-1.2zM1094.4,580.1h1.2v1.2h-1.2zM1094.4,567.8h1.2v1.2h-1.2zM1094.4,555.5h1.2v1.2h-1.2zM1094.4,543.2h1.2v1.2h-1.2zM1094.4,530.9h1.2v1.2h-1.2zM1094.4,518.7h1.2v1.2h-1.2zM1094.4,506.4h1.2v1.2h-1.2zM1094.4,494.1h1.2v1.2h-1.2zM1094.4,481.8h1.2v1.2h-1.2zM1094.4,469.5h1.2v1.2h-1.2zM1094.4,457.2h1.2v1.2h-1.2zM1094.4,444.9h1.2v1.2h-1.2zM1094.4,432.6h1.2v1.2h-1.2zM1094.4,420.3h1.2v1.2h-1.2zM1094.4,408.0h1.2v1.2h-1.2zM1094.4,395.8h1.2v1.2h-1.2zM1094.4,383.5h1.2v1.2h-1.2zM1094.4,371.2h1.2v1.2h-1.2zM1094.4,358.9h1.2v1.2h-1.2zM1094.4,346.6h1.2v1.2h-1.2zM1094.4,334.3h1.2v1.2h-1.2zM1094.4,322.0h1.2v1.2h-1.2zM1094.4,309.7h1.2v1.2h-1.2zM1094.4,297.4h1.2v1.2h-1.2zM1094.4,285.1h1.2v1.2h-1.2zM1094.4,272.9h1.2v1.2h-1.2zM1094.4,260.6h1.2v1.2h-1.2zM1094.4,248.3h1.2v1.2h-1.2zM1094.4,236.0h1.2v1.2h-1.2zM1094.4,223.7h1.2v1.2h-1.2zM1094.4,211.4h1.2v1.2h-1.2zM1094.4,199.1h1.2v1.2h-1.2zM1094.4,186.8h1.2v1.2h-1.2zM1094.4,174.5h1.2v1.2h-1.2zM1106.7,727.6h1.2v1.2h-1.2zM1106.7,715.3h1.2v1.2h-1.2zM1106.7,703.0h1.2v1.2h-1.2zM1106.7,690.7h1.2v1.2h-1.2zM1106.7,678.4h1.2v1.2h-1.2zM1106.7,666.1h1.2v1.2h-1.2zM1106.7,653.9h1.2v1.2h-1.2zM1106.7,641.6h1.2v1.2h-1.2zM1106.7,629.3h1.2v1.2h-1.2zM1106.7,617.0h1.2v1.2h-1.2zM1106.7,604.7h1.2v1.2h-1.2zM1106.7,592.4h1.2v1.2h-1.2zM1106.7,580.1h1.2v1.2h-1.2zM1106.7,567.8h1.2v1.2h-1.2zM1106.7,555.5h1.2v1.2h-1.2zM1106.7,543.2h1.2v1.2h-1.2zM1106.7,530.9h1.2v1.2h-1.2zM1106.7,518.7h1.2v1.2h-1.2zM1106.7,506.4h1.2v1.2h-1.2zM1106.7,494.1h1.2v1.2h-1.2zM1106.7,481.8h1.2v1.2h-1.2zM1106.7,469.5h1.2v1.2h-1.2zM1106.7,457.2h1.2v1.2h-1.2zM1106.7,444.9h1.2v1.2h-1.2zM1106.7,432.6h1.2v1.2h-1.2zM1106.7,420.3h1.2v1.2h-1.2zM1106.7,408.0h1.2v1.2h-1.2zM1106.7,395.8h1.2v1.2h-1.2zM1106.7,383.5h1.2v1.2h-1.2zM1106.7,371.2h1.2v1.2h-1.2zM1106.7,358.9h1.2v1.2h-1.2zM1106.7,346.6h1.2v1.2h-1.2zM1106.7,334.3h1.2v1.2h-1.2zM1106.7,322.0h1.2v1.2h-1.2zM1106.7,309.7h1.2v1.2h-1.2zM1106.7,297.4h1.2v1.2h-1.2zM1106.7,285.1h1.2v1.2h-1.2zM1106.7,272.9h1.2v1.2h-1.2zM1106.7,260.6h1.2v1.2h-1.2zM1106.7,248.3h1.2v1.2h-1.2zM1106.7,236.0h1.2v1.2h-1.2zM1106.7,223.7h1.2v1.2h-1.2zM1106.7,211.4h1.2v1.2h-1.2zM1106.7,199.1h1.2v1.2h-1.2zM1106.7,186.8h1.2v1.2h-1.2zM1106.7,174.5h1.2v1.2h-1.2zM1119.0,727.6h1.2v1.2h-1.2zM1119.0,715.3h1.2v1.2h-1.2zM1119.0,703.0h1.2v1.2h-1.2zM1119.0,690.7h1.2v1.2h-1.2zM1119.0,678.4h1.2v1.2h-1.2zM1119.0,666.1h1.2v1.2h-1.2zM1119.0,653.9h1.2v1.2h-1.2zM1119.0,641.6h1.2v1.2h-1.2zM1119.0,629.3h1.2v1.2h-1.2zM1119.0,617.0h1.2v1.2h-1.2zM1119.0,604.7h1.2v1.2h-1.2zM1119.0,592.4h1.2v1.2h-1.2zM1119.0,580.1h1.2v1.2h-1.2zM1119.0,567.8h1.2v1.2h-1.2zM1119.0,555.5h1.2v1.2h-1.2zM1119.0,543.2h1.2v1.2h-1.2zM1119.0,530.9h1.2v1.2h-1.2zM1119.0,518.7h1.2v1.2h-1.2zM1119.0,506.4h1.2v1.2h-1.2zM1119.0,494.1h1.2v1.2h-1.2zM1119.0,481.8h1.2v1.2h-1.2zM1119.0,469.5h1.2v1.2h-1.2zM1119.0,457.2h1.2v1.2h-1.2zM1119.0,444.9h1.2v1.2h-1.2zM1119.0,432.6h1.2v1.2h-1.2zM1119.0,420.3h1.2v1.2h-1.2zM1119.0,408.0h1.2v1.2h-1.2zM1119.0,395.8h1.2v1.2h-1.2zM1119.0,383.5h1.2v1.2h-1.2zM1119.0,371.2h1.2v1.2h-1.2zM1119.0,358.9h1.2v1.2h-1.2zM1119.0,346.6h1.2v1.2h-1.2zM1119.0,334.3h1.2v1.2h-1.2zM1119.0,322.0h1.2v1.2h-1.2zM1119.0,309.7h1.2v1.2h-1.2zM1119.0,297.4h1.2v1.2h-1.2zM1119.0,285.1h1.2v1.2h-1.2zM1119.0,272.9h1.2v1.2h-1.2zM1119.0,260.6h1.2v1.2h-1.2zM1119.0,248.3h1.2v1.2h-1.2zM1119.0,236.0h1.2v1.2h-1.2zM1119.0,223.7h1.2v1.2h-1.2zM1119.0,211.4h1.2v1.2h-1.2zM1119.0,199.1h1.2v1.2h-1.2zM1119.0,186.8h1.2v1.2h-1.2zM1119.0,174.5h1.2v1.2h-1.2zM1131.3,727.6h1.2v1.2h-1.2zM1131.3,715.3h1.2v1.2h-1.2zM1131.3,703.0h1.2v1.2h-1.2zM1131.3,690.7h1.2v1.2h-1.2zM1131.3,678.4h1.2v1.2h-1.2zM1131.3,666.1h1.2v1.2h-1.2zM1131.3,653.9h1.2v1.2h-1.2zM1131.3,641.6h1.2v1.2h-1.2zM1131.3,629.3h1.2v1.2h-1.2zM1131.3,617.0h1.2v1.2h-1.2zM1131.3,604.7h1.2v1.2h-1.2zM1131.3,592.4h1.2v1.2h-1.2zM1131.3,580.1h1.2v1.2h-1.2zM1131.3,567.8h1.2v1.2h-1.2zM1131.3,555.5h1.2v1.2h-1.2zM1131.3,543.2h1.2v1.2h-1.2zM1131.3,530.9h1.2v1.2h-1.2zM1131.3,518.7h1.2v1.2h-1.2zM1131.3,506.4h1.2v1.2h-1.2zM1131.3,494.1h1.2v1.2h-1.2zM1131.3,481.8h1.2v1.2h-1.2zM1131.3,469.5h1.2v1.2h-1.2zM1131.3,457.2h1.2v1.2h-1.2zM1131.3,444.9h1.2v1.2h-1.2zM1131.3,432.6h1.2v1.2h-1.2zM1131.3,420.3h1.2v1.2h-1.2zM1131.3,408.0h1.2v1.2h-1.2zM1131.3,395.8h1.2v1.2h-1.2zM1131.3,383.5h1.2v1.2h-1.2zM1131.3,371.2h1.2v1.2h-1.2zM1131.3,358.9h1.2v1.2h-1.2zM1131.3,346.6h1.2v1.2h-1.2zM1131.3,334.3h1.2v1.2h-1.2zM1131.3,322.0h1.2v1.2h-1.2zM1131.3,309.7h1.2v1.2h-1.2zM1131.3,297.4h1.2v1.2h-1.2zM1131.3,285.1h1.2v1.2h-1.2zM1131.3,272.9h1.2v1.2h-1.2zM1131.3,260.6h1.2v1.2h-1.2zM1131.3,248.3h1.2v1.2h-1.2zM1131.3,236.0h1.2v1.2h-1.2zM1131.3,223.7h1.2v1.2h-1.2zM1131.3,211.4h1.2v1.2h-1.2zM1131.3,199.1h1.2v1.2h-1.2zM1131.3,186.8h1.2v1.2h-1.2zM1131.3,174.5h1.2v1.2h-1.2z" fill="#444444"/><path d="M129.9,170.0 L119.1,260.2 L95.0,257.3M114.6,260.2 L110.3,293.3 L95.0,291.1M154.7,170.0 L138.9,301.6 L95.0,296.7M173.3,170.0 L157.6,304.1 L438.4,337.2M216.6,171.3 L244.2,174.5M245.4,170.0 L237.5,228.0 L246.5,229.6 L240.2,283.2 L335.9,295.1 L337.0,286.6 L418.2,295.6 L432.8,170.0M216.6,171.3 L203.7,274.2 L240.2,278.7M310.7,292.2 L308.2,316.5 L410.3,328.7 L413.7,295.6M432.3,180.3 L456.4,182.6 L438.4,337.2M501.5,170.0 L497.6,199.4 L473.3,197.2 L456.4,339.0 L731.2,371.6M516.1,206.2 L543.1,209.6M548.7,170.0 L537.5,262.9 L546.0,264.5 L539.3,318.7 L635.5,329.8 L636.6,321.4 L717.7,331.1 L736.8,170.8 L760.8,173.4 L761.4,171.0 L799.2,175.8M516.1,206.2 L503.3,309.1 L539.3,313.6M609.6,327.1 L607.4,351.8 L709.8,363.5 L713.2,331.1M734.4,190.4 L798.6,197.6M798.6,170.0 L789.6,248.4 L792.6,248.4 L801.6,170.0M731.8,215.2 L749.8,216.8 L731.2,371.6M866.4,170.0 L856.2,255.6 L890.4,259.8 L879.6,349.0M869.4,170.0 L859.2,253.2 L873.6,254.4M983.4,170.0 L972.8,267.4 L1129.7,288.3 L1125.2,313.5M1107.2,170.0 L1138.7,173.6M95.0,320.3 L756.0,399.0M95.0,578.5 L1138.7,336.0M95.0,464.3 L180.1,469.3 L190.7,531.4M345.0,620.8 L330.8,731.5M427.1,564.3 L450.0,633.7M335.0,696.7 L343.7,621.5 L498.0,639.5 L499.7,619.0M465.6,635.0 L467.6,615.3 L549.5,624.5 L540.3,704.1 L494.2,699.2 L490.5,731.5M493.0,717.8 L581.3,728.5M599.2,552.9 L845.0,579.2 L1138.6,611.0M718.9,565.6 L712.6,612.1M777.8,571.8 L767.4,656.9M636.0,603.4 L756.2,617.1 L751.2,654.9M700.7,610.8 L696.5,648.9 L813.4,662.3 L807.7,712.1 L793.5,710.4 L790.3,731.5M636.0,603.4 L627.8,681.8 L677.8,688.0 L672.6,731.5M849.3,579.7 L851.9,601.9 L955.7,614.9 L946.5,700.9 L905.4,696.5 L902.2,732.2M949.7,673.0 L985.6,677.0 L983.0,704.8 L1094.3,717.0M1025.2,709.5 L1022.6,732.2M1106.0,624.0 L1115.1,625.3 L1106.0,713.9 L1138.6,717.3" stroke="#cacaca" stroke-width="1.05" fill="none" stroke-linejoin="miter"/><path d="M879.6,349 C878.2,358 882,366.5 889.5,368.6" stroke="#cacaca" stroke-width="1.15" fill="none"/><path d="M95.0,330.0 L747.6,401.3M95.0,553.6 L1138.7,310.8M913.6,170.0 L890.0,368.6M711.6,498.1 L1138.7,399.0M602.4,523.1 L631.2,516.3 L713.3,525.2 L853.8,541.2 L1109.9,568.8 L1138.6,571.9M602.4,523.1 L599.2,552.9 L585.0,699.2 L581.3,731.5M139.2,631.2 L345.0,583.5 L517.4,542.9 L599.2,552.9M853.8,541.2 L835.0,731.5M1109.9,568.8 L1093.0,732.2" stroke="#1ccad6" stroke-width="1.15" fill="none"/><path d="M711.6,498.1 C697,502 696,522 713.3,525.2" stroke="#1ccad6" stroke-width="1.3" fill="none"/><path d="M95,649.4 Q115,636 139.2,631.2" stroke="#1ccad6" stroke-width="1.3" fill="none"/><circle cx="747.6" cy="401.3" r="3" stroke="#9a9a9a" stroke-width="1" fill="none"/><circle cx="890" cy="368.6" r="3" stroke="#9a9a9a" stroke-width="1" fill="none"/><circle cx="711.6" cy="498.1" r="3" stroke="#9a9a9a" stroke-width="1" fill="none"/><circle cx="713.3" cy="525.2" r="3" stroke="#9a9a9a" stroke-width="1" fill="none"/><circle cx="602.4" cy="523.1" r="3" stroke="#9a9a9a" stroke-width="1" fill="none"/><circle cx="631.2" cy="516.3" r="3" stroke="#9a9a9a" stroke-width="1" fill="none"/><circle cx="853.1" cy="539.9" r="3" stroke="#9a9a9a" stroke-width="1" fill="none"/><circle cx="517.4" cy="542.9" r="3" stroke="#9a9a9a" stroke-width="1" fill="none"/><circle cx="599.2" cy="552.9" r="3" stroke="#9a9a9a" stroke-width="1" fill="none"/><circle cx="139.2" cy="631.2" r="3" stroke="#9a9a9a" stroke-width="1" fill="none"/><circle cx="1109.9" cy="568.8" r="3" stroke="#9a9a9a" stroke-width="1" fill="none"/><circle cx="853.8" cy="541.2" r="3" stroke="#9a9a9a" stroke-width="1" fill="none"/><g transform="translate(591.2,416)" stroke="#d8322e" stroke-width="2.3" fill="none" stroke-linecap="round" stroke-linejoin="round"><path transform="translate(0.00,0)" d="M15.3,1.2 H1.5 V11.5 H8.5 C13,11.5 15.3,14 15.3,18 C15.3,22.3 13,24.8 8.5,24.8 H1.2"/><path transform="translate(20.67,0)" d="M1.2,1.2 H8 C13,1.2 15.3,3.8 15.3,8 C15.3,10.5 14.5,12 12.5,13.8 L1.4,24.8 H15.8"/><path transform="translate(41.34,0)" d="M15.3,1.2 H1.5 V11.5 H8.5 C13,11.5 15.3,14 15.3,18 C15.3,22.3 13,24.8 8.5,24.8 H1.2"/><path transform="translate(62.01,0)" d="M14.8,1.2 H9 C3.5,1.2 1.2,4.5 1.2,10 V18 C1.2,22.5 3.8,24.8 8.25,24.8 C12.8,24.8 15.3,22.5 15.3,18 C15.3,13.5 12.8,11.3 8.25,11.3 H1.2"/><path transform="translate(82.68,0)" d="M1.2,1.2 H8.5 C13,1.2 15,3.5 15,6.6 C15,9.8 12.5,11.9 8.5,11.9 H3.3 M8.5,11.9 C13,11.9 15.3,14.4 15.3,18.2 C15.3,22.5 12.5,24.8 8,24.8 H1.2"/><path transform="translate(103.35,0)" d="M14.8,1.2 H9 C3.5,1.2 1.2,4.5 1.2,10 V18 C1.2,22.5 3.8,24.8 8.25,24.8 C12.8,24.8 15.3,22.5 15.3,18 C15.3,13.5 12.8,11.3 8.25,11.3 H1.2"/><path transform="translate(124.02,0)" d="M8.25,1.2 C12.8,1.2 15.3,3.5 15.3,8 C15.3,12.5 12.8,14.8 8.25,14.8 C3.7,14.8 1.2,12.5 1.2,8 C1.2,3.5 3.7,1.2 8.25,1.2 M15.3,8 V16 C15.3,21.5 13,24.8 7.5,24.8 H1.7"/><path transform="translate(144.69,0)" d="M1.2,1.2 H8 C13,1.2 15.3,3.8 15.3,8 C15.3,10.5 14.5,12 12.5,13.8 L1.4,24.8 H15.8"/></g><g transform="translate(786.6,465.4) rotate(-13) translate(-0.5,-26)" stroke="#ffff00" stroke-width="2.3" fill="none" stroke-linecap="round" stroke-linejoin="round"><path transform="translate(0.00,0)" d="M7.2,1.2 L1.2,18.6 H15.8 M11.8,12.5 V24.8"/><path transform="translate(20.67,0)" d="M1.2,1.2 H8.5 C13,1.2 15,3.5 15,6.6 C15,9.8 12.5,11.9 8.5,11.9 H3.3 M8.5,11.9 C13,11.9 15.3,14.4 15.3,18.2 C15.3,22.5 12.5,24.8 8,24.8 H1.2"/><path transform="translate(41.34,0)" d="M15.3,1.2 H1.5 V11.5 H8.5 C13,11.5 15.3,14 15.3,18 C15.3,22.3 13,24.8 8.5,24.8 H1.2"/><path transform="translate(62.01,0)" d="M8.25,1.2 C13.2,1.2 15.3,4.2 15.3,9 V17 C15.3,21.8 13.2,24.8 8.25,24.8 C3.3,24.8 1.2,21.8 1.2,17 V9 C1.2,4.2 3.3,1.2 8.25,1.2 Z"/><path transform="translate(82.68,0)" d="M15.3,1.2 H1.5 V11.5 H8.5 C13,11.5 15.3,14 15.3,18 C15.3,22.3 13,24.8 8.5,24.8 H1.2"/></g><g transform="translate(946.8,484.3)" stroke="#ffff00" stroke-width="2.3" fill="none" stroke-linecap="round" stroke-linejoin="round"><path transform="translate(0.00,0)" d="M1.2,6.5 L8.8,1.2 V24.8"/><path transform="translate(13.30,0)" d="M14.8,1.2 H9 C3.5,1.2 1.2,4.5 1.2,10 V18 C1.2,22.5 3.8,24.8 8.25,24.8 C12.8,24.8 15.3,22.5 15.3,18 C15.3,13.5 12.8,11.3 8.25,11.3 H1.2"/><path transform="translate(34.70,0)" d="M1.2,6.5 L8.8,1.2 V24.8"/><path transform="translate(48.50,0)" d="M1.2,1.2 H8 C13,1.2 15.3,3.8 15.3,8 C15.3,10.5 14.5,12 12.5,13.8 L1.4,24.8 H15.8"/></g><path transform="translate(992,413.2) rotate(-13)" d="M0,0 L2.5,-30 L14,0 L26,-30 L27.5,0 M37,-21.5 H47 Q52,-21.5 52,-16.5 V0 H41 Q36,0 36,-5 V-7 Q36,-12 41,-12 H52 M76,-21 H66 Q62,-21 62,-17 V-4 Q62,0 66,0 H76 M76,-21 V6 Q76,11 71,11 H61 M85,0 V-21.5 H96 Q100,-21.5 100,-17.5 V0 M109,-21.5 H119 Q124,-21.5 124,-16.5 V0 H113 Q108,0 108,-5 V-7 Q108,-12 113,-12 H124 M147,0 L156,-30 H160 L170,0 M150,-10 H167" stroke="#c6c6c6" stroke-width="3.1" fill="none" stroke-linecap="round" stroke-linejoin="round"/><path d="M1121.6,571.9 L1119,603.2 L1134.7,604.5" stroke="#c6c6c6" stroke-width="3.1" fill="none" stroke-linecap="round" stroke-linejoin="round"/><g stroke="#7fb0c8" stroke-width="0.6" fill="#0a84b4"><rect x="574.2" y="456.1" width="6.2" height="6"/><rect x="568" y="462.3" width="6.2" height="6.2"/><rect x="580.5" y="462.3" width="6" height="6.2"/><rect x="574.2" y="468.6" width="6.2" height="6"/></g><circle cx="577.3" cy="465.4" r="2.6" fill="#0000c8"/><rect x="586.8" y="448" width="6" height="6.4" fill="#0000b4" stroke="#8080a0" stroke-width="0.6"/></svg>
<svg class="a" style="left:1153px;top:122px" width="302" height="676" viewBox="1153 122 302 676"><defs><linearGradient id="db" x1="0" y1="0" x2="0" y2="1"><stop offset="0" stop-color="#f2f2f2"/><stop offset="1" stop-color="#e2e2e2"/></linearGradient><linearGradient id="fb" x1="0" y1="0" x2="0" y2="1"><stop offset="0" stop-color="#f6f6f6"/><stop offset="1" stop-color="#e8e8e8"/></linearGradient><linearGradient id="blu" x1="0" y1="0" x2="0" y2="1"><stop offset="0" stop-color="#3f8ef8"/><stop offset="1" stop-color="#1a64e6"/></linearGradient></defs><rect x="1153" y="122" width="302" height="676" fill="#ececec"/><rect x="1153" y="118" width="302" height="4" fill="#cdcdcd"/><circle cx="1164" cy="133" r="6.9" fill="#6c6c6c"/><path d="M1161,130 L1167,136 M1167,130 L1161,136" stroke="#fff" stroke-width="1.8" stroke-linecap="round"/><circle cx="1181.7" cy="133" r="6.9" fill="#6c6c6c"/><rect x="1179.9" y="129" width="5.6" height="4.6" fill="none" stroke="#fff" stroke-width="1.2"/><rect x="1177.7" y="131.8" width="5.6" height="4.6" fill="#6c6c6c" stroke="#fff" stroke-width="1.2"/><text x="1321.5" y="138.3" font-size="12.3" text-anchor="middle" fill="#262626" font-family="Liberation Sans">Elenco dei livelli</text><rect x="1155.8" y="145.8" width="298.4" height="25.2" fill="url(#db)" stroke="#a8a8a8" stroke-width="1.2"/><path d="M1214.7,146 V171" stroke="#a8a8a8" stroke-width="1.6"/><path d="M1275,146 V171" stroke="#a8a8a8" stroke-width="1.6"/><path d="M1335,146 V171" stroke="#a8a8a8" stroke-width="1.6"/><path d="M1394.9,146 V171" stroke="#a8a8a8" stroke-width="1.6"/><g transform="translate(1185.1,158.2) scale(1.0)"><path d="M-8,0.5 Q-4.5,-6 0,-6 Q4.5,-6 8,0.5 Q4.5,5.6 0,5.6 Q-4.5,5.6 -8,0.5 Z" fill="#000"/><path d="M-6,0.4 Q-3.2,-3.9 0,-3.9 Q3.2,-3.9 6,0.4 Q3.2,4 0,4 Q-3.2,4 -6,0.4 Z" fill="#fff"/><circle cx="0" cy="0.2" r="3.5" fill="#000"/><circle cx="0.9" cy="-0.9" r="0.9" fill="#fff" opacity="0.6"/><path d="M-8.6,-0.2 Q0,-9 8.6,-0.2" stroke="#000" stroke-width="1.5" fill="none"/></g><g transform="translate(1245,158.2) scale(1.0)"><path d="M-8,0.5 Q-4.5,-6 0,-6 Q4.5,-6 8,0.5 Q4.5,5.6 0,5.6 Q-4.5,5.6 -8,0.5 Z" fill="#a8a8a8"/><path d="M-6,0.4 Q-3.2,-3.9 0,-3.9 Q3.2,-3.9 6,0.4 Q3.2,4 0,4 Q-3.2,4 -6,0.4 Z" fill="#fff"/><circle cx="0" cy="0.2" r="3.5" fill="#a8a8a8"/><circle cx="0.9" cy="-0.9" r="0.9" fill="#fff" opacity="0.6"/><path d="M-8.6,-0.2 Q0,-9 8.6,-0.2" stroke="#a8a8a8" stroke-width="1.5" fill="none"/></g><path d="M1299,158 H1311 M1305,152 V164" stroke="#e00000" stroke-width="3"/><path d="M1359,157.5 H1371" stroke="#e00000" stroke-width="3"/><path d="M1418.6,164.4 L1432,152" stroke="#9a6a20" stroke-width="3.8" stroke-linecap="round"/><path d="M1418.6,164.4 L1432,152" stroke="#f0b840" stroke-width="2.6"/><path d="M1430.4,153.5 L1432,152" stroke="#e03020" stroke-width="2.6"/><path d="M1418.6,164.4 L1420.2,162.9" stroke="#333" stroke-width="1.8199999999999998"/><rect x="1155.8" y="171" width="298.4" height="387.5" fill="#fff" stroke="#c8c8c8" stroke-width="1"/><rect x="1156.3" y="192.3" width="297.5" height="19.5" fill="#0b4fd8"/><rect x="1181.5" y="178.2" width="15.5" height="8.6" fill="#fff" stroke="#000" stroke-width="1.1"/><rect x="1181" y="197.8" width="16.2" height="9.2" fill="#3a4250"/><rect x="1181" y="217.8" width="16.2" height="9.2" fill="#000"/><text x="1203" y="187" font-size="13.6" fill="#111" font-family="Liberation Sans">0</text><text x="1203" y="206.6" font-size="13.6" fill="#fff" font-family="Liberation Sans">Numeri catastali</text><text x="1203" y="226.6" font-size="13.6" fill="#111" font-family="Liberation Sans">Testo</text><g transform="translate(1422.8,182.4) scale(1.0)"><path d="M-8,0.5 Q-4.5,-6 0,-6 Q4.5,-6 8,0.5 Q4.5,5.6 0,5.6 Q-4.5,5.6 -8,0.5 Z" fill="#000"/><path d="M-6,0.4 Q-3.2,-3.9 0,-3.9 Q3.2,-3.9 6,0.4 Q3.2,4 0,4 Q-3.2,4 -6,0.4 Z" fill="#fff"/><circle cx="0" cy="0.2" r="3.5" fill="#000"/><circle cx="0.9" cy="-0.9" r="0.9" fill="#fff" opacity="0.6"/><path d="M-8.6,-0.2 Q0,-9 8.6,-0.2" stroke="#000" stroke-width="1.5" fill="none"/></g><g><path d="M1441.5,181.9 V178.9 Q1441.5,175.4 1445,175.4 Q1448.5,175.4 1448.5,178.9 V181.9" stroke="#b4b4b4" stroke-width="1.6" fill="none"/><rect x="1440.2" y="181.4" width="9.6" height="7.6" rx="0.8" fill="#b4b4b4"/></g><g transform="translate(1422.8,202.2) scale(1.0)"><path d="M-8,0.5 Q-4.5,-6 0,-6 Q4.5,-6 8,0.5 Q4.5,5.6 0,5.6 Q-4.5,5.6 -8,0.5 Z" fill="#000"/><path d="M-6,0.4 Q-3.2,-3.9 0,-3.9 Q3.2,-3.9 6,0.4 Q3.2,4 0,4 Q-3.2,4 -6,0.4 Z" fill="#fff"/><circle cx="0" cy="0.2" r="3.5" fill="#000"/><circle cx="0.9" cy="-0.9" r="0.9" fill="#fff" opacity="0.6"/><path d="M-8.6,-0.2 Q0,-9 8.6,-0.2" stroke="#000" stroke-width="1.5" fill="none"/></g><g><path d="M1441.5,201.7 V198.7 Q1441.5,195.2 1445,195.2 Q1448.5,195.2 1448.5,198.7 V201.7" stroke="#b4b4b4" stroke-width="1.6" fill="none"/><rect x="1440.2" y="201.2" width="9.6" height="7.6" rx="0.8" fill="#b4b4b4"/></g><g transform="translate(1422.8,222) scale(1.0)"><path d="M-8,0.5 Q-4.5,-6 0,-6 Q4.5,-6 8,0.5 Q4.5,5.6 0,5.6 Q-4.5,5.6 -8,0.5 Z" fill="#000"/><path d="M-6,0.4 Q-3.2,-3.9 0,-3.9 Q3.2,-3.9 6,0.4 Q3.2,4 0,4 Q-3.2,4 -6,0.4 Z" fill="#fff"/><circle cx="0" cy="0.2" r="3.5" fill="#000"/><circle cx="0.9" cy="-0.9" r="0.9" fill="#fff" opacity="0.6"/><path d="M-8.6,-0.2 Q0,-9 8.6,-0.2" stroke="#000" stroke-width="1.5" fill="none"/></g><g><path d="M1441.5,221.5 V218.5 Q1441.5,215.0 1445,215.0 Q1448.5,215.0 1448.5,218.5 V221.5" stroke="#b4b4b4" stroke-width="1.6" fill="none"/><rect x="1440.2" y="221.0" width="9.6" height="7.6" rx="0.8" fill="#b4b4b4"/></g><path d="M1394.5,208 L1406.5,196" stroke="#9a6a20" stroke-width="3.5999999999999996" stroke-linecap="round"/><path d="M1394.5,208 L1406.5,196" stroke="#f0b840" stroke-width="2.4"/><path d="M1405.1,197.4 L1406.5,196" stroke="#e03020" stroke-width="2.4"/><path d="M1394.5,208 L1395.9,206.6" stroke="#333" stroke-width="1.68"/><rect x="1153" y="559" width="302" height="1.5" fill="#d6d6d6"/><circle cx="1163.6" cy="569.3" r="6.9" fill="#6c6c6c"/><path d="M1160.6,566.3 L1166.6,572.3 M1166.6,566.3 L1160.6,572.3" stroke="#fff" stroke-width="1.8" stroke-linecap="round"/><circle cx="1182" cy="569.3" r="6.9" fill="#6c6c6c"/><rect x="1180.2" y="565.3" width="5.6" height="4.6" fill="none" stroke="#fff" stroke-width="1.2"/><rect x="1178" y="568.0999999999999" width="5.6" height="4.6" fill="#6c6c6c" stroke="#fff" stroke-width="1.2"/><text x="1321.7" y="574.3" font-size="12.3" text-anchor="middle" fill="#262626" font-family="Liberation Sans">Filtro di selezione</text><path d="M1155,579.8 H1453" stroke="#d2d2d2" stroke-width="1.4"/><rect x="1167" y="594.3" width="275.8" height="133.9" fill="#e5e5e5" stroke="#dedede" stroke-width="1"/><text x="1174.3" y="596.3" font-size="12" fill="#262626" font-family="Liberation Sans">Filtro</text><text x="1182.3" y="630.2" font-size="14" fill="#111" font-family="Liberation Sans">Tipo oggetto:</text><rect x="1271.2" y="614.8000000000001" width="156.5" height="21.4" rx="4.5" fill="#fff" stroke="#cfcfcf" stroke-width="0.9"/><text x="1275" y="630.2" font-size="14" fill="#111" font-family="Liberation Sans">Cerchio</text><rect x="1409.3" y="617.3000000000001" width="16.5" height="16.5" rx="3.5" fill="url(#blu)"/><path d="M1414.4,624.1 L1417.5,621.0 L1420.6,624.1 M1414.4,627.2 L1417.5,630.3000000000001 L1420.6,627.2" stroke="#fff" stroke-width="1.3" fill="none"/><text x="1182.3" y="656.2" font-size="14" fill="#111" font-family="Liberation Sans">Proprietà:</text><rect x="1271.2" y="640.8000000000001" width="156.5" height="21.4" rx="4.5" fill="#fff" stroke="#cfcfcf" stroke-width="0.9"/><text x="1275" y="656.2" font-size="14" fill="#111" font-family="Liberation Sans">Diametro</text><rect x="1409.3" y="643.3000000000001" width="16.5" height="16.5" rx="3.5" fill="url(#blu)"/><path d="M1414.4,650.1 L1417.5,647.0 L1420.6,650.1 M1414.4,653.2 L1417.5,656.3000000000001 L1420.6,653.2" stroke="#fff" stroke-width="1.3" fill="none"/><text x="1182.3" y="682.4" font-size="14" fill="#111" font-family="Liberation Sans">Confronto:</text><rect x="1271.2" y="667.0" width="156.5" height="21.4" rx="4.5" fill="#fff" stroke="#cfcfcf" stroke-width="0.9"/><text x="1275" y="682.4" font-size="14" fill="#111" font-family="Liberation Sans">= (uguale a)</text><rect x="1409.3" y="669.5" width="16.5" height="16.5" rx="3.5" fill="url(#blu)"/><path d="M1414.4,676.3 L1417.5,673.1999999999999 L1420.6,676.3 M1414.4,679.4 L1417.5,682.5 L1420.6,679.4" stroke="#fff" stroke-width="1.3" fill="none"/><text x="1182.3" y="707.6" font-size="14" fill="#111" font-family="Liberation Sans">Valore:</text><rect x="1271.2" y="693" width="156.5" height="20" fill="#fff" stroke="#d4d4d4" stroke-width="0.9"/><text x="1273.5" y="707.6" font-size="14" fill="#111" font-family="Liberation Sans">1</text><rect x="1167" y="744.4" width="275.8" height="24.9" fill="url(#fb)" stroke="#a8a8a8" stroke-width="1"/><path d="M1235.9,744.5 V769.3" stroke="#a8a8a8" stroke-width="1.2"/><path d="M1304.9,744.5 V769.3" stroke="#a8a8a8" stroke-width="1.2"/><path d="M1373.8,744.5 V769.3" stroke="#a8a8a8" stroke-width="1.2"/><rect x="1195.5" y="750.8" width="12.5" height="12.5" fill="#f08888" stroke="#c03030" stroke-width="0.8" stroke-dasharray="1.2,1"/><rect x="1263.5" y="750.3" width="10.2" height="10" fill="#f08888" stroke="#555" stroke-width="0.9"/><rect x="1266.5" y="753.7" width="10.2" height="10" fill="#f08888" stroke="#222" stroke-width="0.8" stroke-dasharray="1.4,1"/><rect x="1332.5" y="750.3" width="9" height="9" fill="#f08888" stroke="#c04040" stroke-width="0.8"/><rect x="1336" y="753.8" width="9" height="9" fill="none" stroke="#333" stroke-width="0.8" stroke-dasharray="1.2,1"/><rect x="1401.5" y="750.3" width="9" height="9" fill="#fff" stroke="#555" stroke-width="0.8"/><rect x="1405" y="753.8" width="9" height="9" fill="none" stroke="#333" stroke-width="0.8" stroke-dasharray="1.2,1"/><rect x="1405" y="753.8" width="5.5" height="5.5" fill="#f08888"/><defs><radialGradient id="ring" cx="0.5" cy="0.5" r="0.5"><stop offset="0.74" stop-color="#aabdd0" stop-opacity="0"/><stop offset="0.86" stop-color="#aabdd0" stop-opacity="0.55"/><stop offset="0.94" stop-color="#9fb4c8" stop-opacity="0.9"/><stop offset="1" stop-color="#9fb4c8" stop-opacity="0"/></radialGradient></defs><circle cx="1287.2" cy="762" r="40" fill="url(#ring)"/><path d="M1287.2,763.1 V785.4 L1293.1,779.9 L1297.6,790.3 L1301.2,788.6 L1296.9,778.3 L1302.6,777.8 Z" fill="#fff" stroke="#000" stroke-width="1.2" stroke-linejoin="round"/></svg>
<svg class="a" style="left:1455px;top:122px" width="45" height="676" viewBox="1455 122 45 676"><defs><linearGradient id="rt" x1="0" y1="0" x2="1" y2="0"><stop offset="0" stop-color="#ededed"/><stop offset="0.55" stop-color="#e2e2e2"/><stop offset="1" stop-color="#c4c4c4"/></linearGradient></defs><rect x="1455" y="122" width="45" height="676" fill="url(#rt)"/><rect x="1455" y="122" width="1" height="676" fill="#d8d8d8"/><rect x="1463.5" y="131" width="1.8" height="1.8" fill="#aaa"/><rect x="1468.7" y="131" width="1.8" height="1.8" fill="#aaa"/><rect x="1473.9" y="131" width="1.8" height="1.8" fill="#aaa"/><rect x="1479.1" y="131" width="1.8" height="1.8" fill="#aaa"/><rect x="1484.3" y="131" width="1.8" height="1.8" fill="#aaa"/><rect x="1489.5" y="131" width="1.8" height="1.8" fill="#aaa"/><rect x="1456" y="135" width="42.5" height="42" rx="6" fill="#b6b6b6"/><rect x="1456" y="329.9" width="42.5" height="43.10000000000002" rx="6" fill="#b6b6b6"/><rect x="1456" y="432.6" width="42.5" height="43.099999999999966" rx="6" fill="#b6b6b6"/><rect x="1463.5" y="141.7" width="27" height="27.5" fill="#fff" stroke="#111" stroke-width="1"/><rect x="1463.5" y="141.7" width="27" height="4.2" fill="#000"/><rect x="1464.8" y="142.5" width="2.6" height="2.6" fill="#fff"/><rect x="1463.5" y="189" width="27" height="27.5" fill="#fff" stroke="#111" stroke-width="1"/><rect x="1463.5" y="189" width="27" height="4.2" fill="#000"/><rect x="1464.8" y="189.8" width="2.6" height="2.6" fill="#fff"/><rect x="1463.5" y="234.8" width="27" height="27.5" fill="#fff" stroke="#111" stroke-width="1"/><rect x="1463.5" y="234.8" width="27" height="4.2" fill="#000"/><rect x="1464.8" y="235.60000000000002" width="2.6" height="2.6" fill="#fff"/><rect x="1463.5" y="291" width="27" height="27.5" fill="#fff" stroke="#111" stroke-width="1"/><rect x="1463.5" y="291" width="27" height="4.2" fill="#000"/><rect x="1464.8" y="291.8" width="2.6" height="2.6" fill="#fff"/><rect x="1463.5" y="337.2" width="27" height="27.5" fill="#fff" stroke="#111" stroke-width="1"/><rect x="1463.5" y="337.2" width="27" height="4.2" fill="#000"/><rect x="1464.8" y="338.0" width="2.6" height="2.6" fill="#fff"/><rect x="1463.5" y="383.6" width="27" height="27.5" fill="#fff" stroke="#111" stroke-width="1"/><rect x="1463.5" y="383.6" width="27" height="4.2" fill="#000"/><rect x="1464.8" y="384.40000000000003" width="2.6" height="2.6" fill="#fff"/><rect x="1463.5" y="440" width="27" height="27.5" fill="#fff" stroke="#111" stroke-width="1"/><rect x="1463.5" y="440" width="27" height="4.2" fill="#000"/><rect x="1464.8" y="440.8" width="2.6" height="2.6" fill="#fff"/><rect x="1463.5" y="486.3" width="27" height="27.5" fill="#fff" stroke="#111" stroke-width="1"/><rect x="1463.5" y="486.3" width="27" height="4.2" fill="#000"/><rect x="1464.8" y="487.1" width="2.6" height="2.6" fill="#fff"/><path d="M1469.5,153.7 L1475.5,151.7 V164.7 L1469.5,165.7 Z" fill="#bbb" stroke="#333" stroke-width="0.6"/><path d="M1473,151.7 L1483.5,149.7 V163.2 L1473,164.7 Z" fill="#fff" stroke="#333" stroke-width="0.7"/><path d="M1476,161.7 L1480,153.7 L1481,160.7" stroke="#e04040" stroke-width="0.8" fill="none"/><rect x="1469.5" y="198.5" width="10" height="8" fill="#f8efc4" stroke="#333" stroke-width="0.7"/><circle cx="1480.5" cy="206.5" r="4.8" fill="#f8efc4" stroke="#333" stroke-width="0.7"/><rect x="1469" y="245.3" width="16" height="11" rx="2" fill="#f4f4f4" stroke="#b8c8e0" stroke-width="0.8"/><rect x="1467.5" y="299.0" width="3.5" height="3" fill="#000"/><rect x="1473.5" y="298.8" width="13.5" height="3.6" fill="#fff" stroke="#222" stroke-width="0.7"/><rect x="1467.5" y="304.5" width="3.5" height="3" fill="#000"/><rect x="1473.5" y="304.3" width="13.5" height="3.6" fill="#fff" stroke="#222" stroke-width="0.7"/><rect x="1467.5" y="310.0" width="3.5" height="3" fill="#000"/><rect x="1473.5" y="309.8" width="13.5" height="3.6" fill="#fff" stroke="#222" stroke-width="0.7"/><path d="M1469.5,347.2 H1485.5 L1479,354.2 V361.2 L1476,359.2 V354.2 Z" fill="#9a9a9a" stroke="#444" stroke-width="0.6"/><path d="M1469,393.1 L1476,397.6 H1483 V404.6 H1476 L1469,408.6 Z" fill="#fff" stroke="#222" stroke-width="0.8"/><rect x="1476" y="397.6" width="7" height="7" fill="#888"/><path d="M1467,401.1 H1487" stroke="#f08080" stroke-width="0.7"/><path d="M1466.5,449.0 H1480 " stroke="#555" stroke-width="0.6"/><path d="M1466.5,452.4 H1479 " stroke="#555" stroke-width="0.6"/><path d="M1466.5,455.8 H1478 " stroke="#555" stroke-width="0.6"/><path d="M1466.5,459.2 H1477 " stroke="#555" stroke-width="0.6"/><path d="M1464,463.5 H1490" stroke="#222" stroke-width="0.7"/><path d="M1466,466 H1489" stroke="#333" stroke-width="0.8"/><rect x="1469.5" y="495.3" width="15" height="15.5" fill="#c08030"/><rect x="1471.3" y="497.1" width="11.4" height="12" fill="#f6f6f6"/><rect x="1474" y="494.1" width="6" height="2.6" fill="#999"/><path d="M1458,276.3 H1498" stroke="#777" stroke-width="1" stroke-dasharray="1.2,2.3"/><path d="M1458,425.3 H1498" stroke="#777" stroke-width="1" stroke-dasharray="1.2,2.3"/><path d="M1458,528 H1498" stroke="#777" stroke-width="1" stroke-dasharray="1.2,2.3"/><path d="M1466,549.5 H1475 Q1477.5,549.5 1477.5,552 V555 Q1477.5,557 1475,557 H1469 M1475,557 Q1477.5,557 1477.5,559.5 V562.5 Q1477.5,565 1475,565 H1466 M1480.5,549.5 H1487 Q1490.5,549.5 1490.5,553 V561.5 Q1490.5,565 1487,565 H1480.5 Z" stroke="#111" stroke-width="1.5" fill="none"/></svg>
<svg class="a" style="left:0;top:798px" width="1500" height="46" viewBox="0 798 1500 46"><rect x="0" y="798" width="1500" height="46" fill="#dadada"/><text x="2" y="815.8" font-family="Liberation Sans" fill="#1e1e1e" font-size="10.2">272.2925,171.877</text><text x="2" y="835.6" font-family="Liberation Sans" fill="#1e1e1e" font-size="10.2">@272.2925,171.877</text><path d="M253.7,802 V841.6" stroke="#888" stroke-width="1"/><text x="256.3" y="815.8" font-family="Liberation Sans" fill="#1e1e1e" font-size="10.2">322.0014&lt;32°</text><text x="256.3" y="835.6" font-family="Liberation Sans" fill="#1e1e1e" font-size="10.2">@322.0014&lt;32°</text><circle cx="509.2" cy="821.9" r="3.2" fill="#c6c6c6"/><circle cx="943.3" cy="821.9" r="3.2" fill="#c6c6c6"/><circle cx="1272.2" cy="821.9" r="3.2" fill="#c6c6c6"/><text x="571.6" y="825.5" font-family="Liberation Sans" fill="#1e1e1e" font-size="10.2">Selezionare entità o regione</text><rect x="717.3" y="806.3" width="17.2" height="29.2" rx="8.6" fill="#fff" stroke="#333" stroke-width="0.9"/><path d="M717.5,819 H734.5" stroke="#333" stroke-width="0.9"/><rect x="724.6" y="808.2" width="3" height="8" rx="1.5" fill="#fff" stroke="#333" stroke-width="0.8"/><path d="M726,806.5 V819" stroke="#333" stroke-width="0.8"/><text x="949.1" y="820" font-family="Liberation Sans" fill="#1e1e1e" font-size="10.2">Entità selezionate:</text><text x="949.1" y="830.7" font-family="Liberation Sans" fill="#1e1e1e" font-size="10.2">10 entità su 2 livelli</text></svg>
</body></html>
